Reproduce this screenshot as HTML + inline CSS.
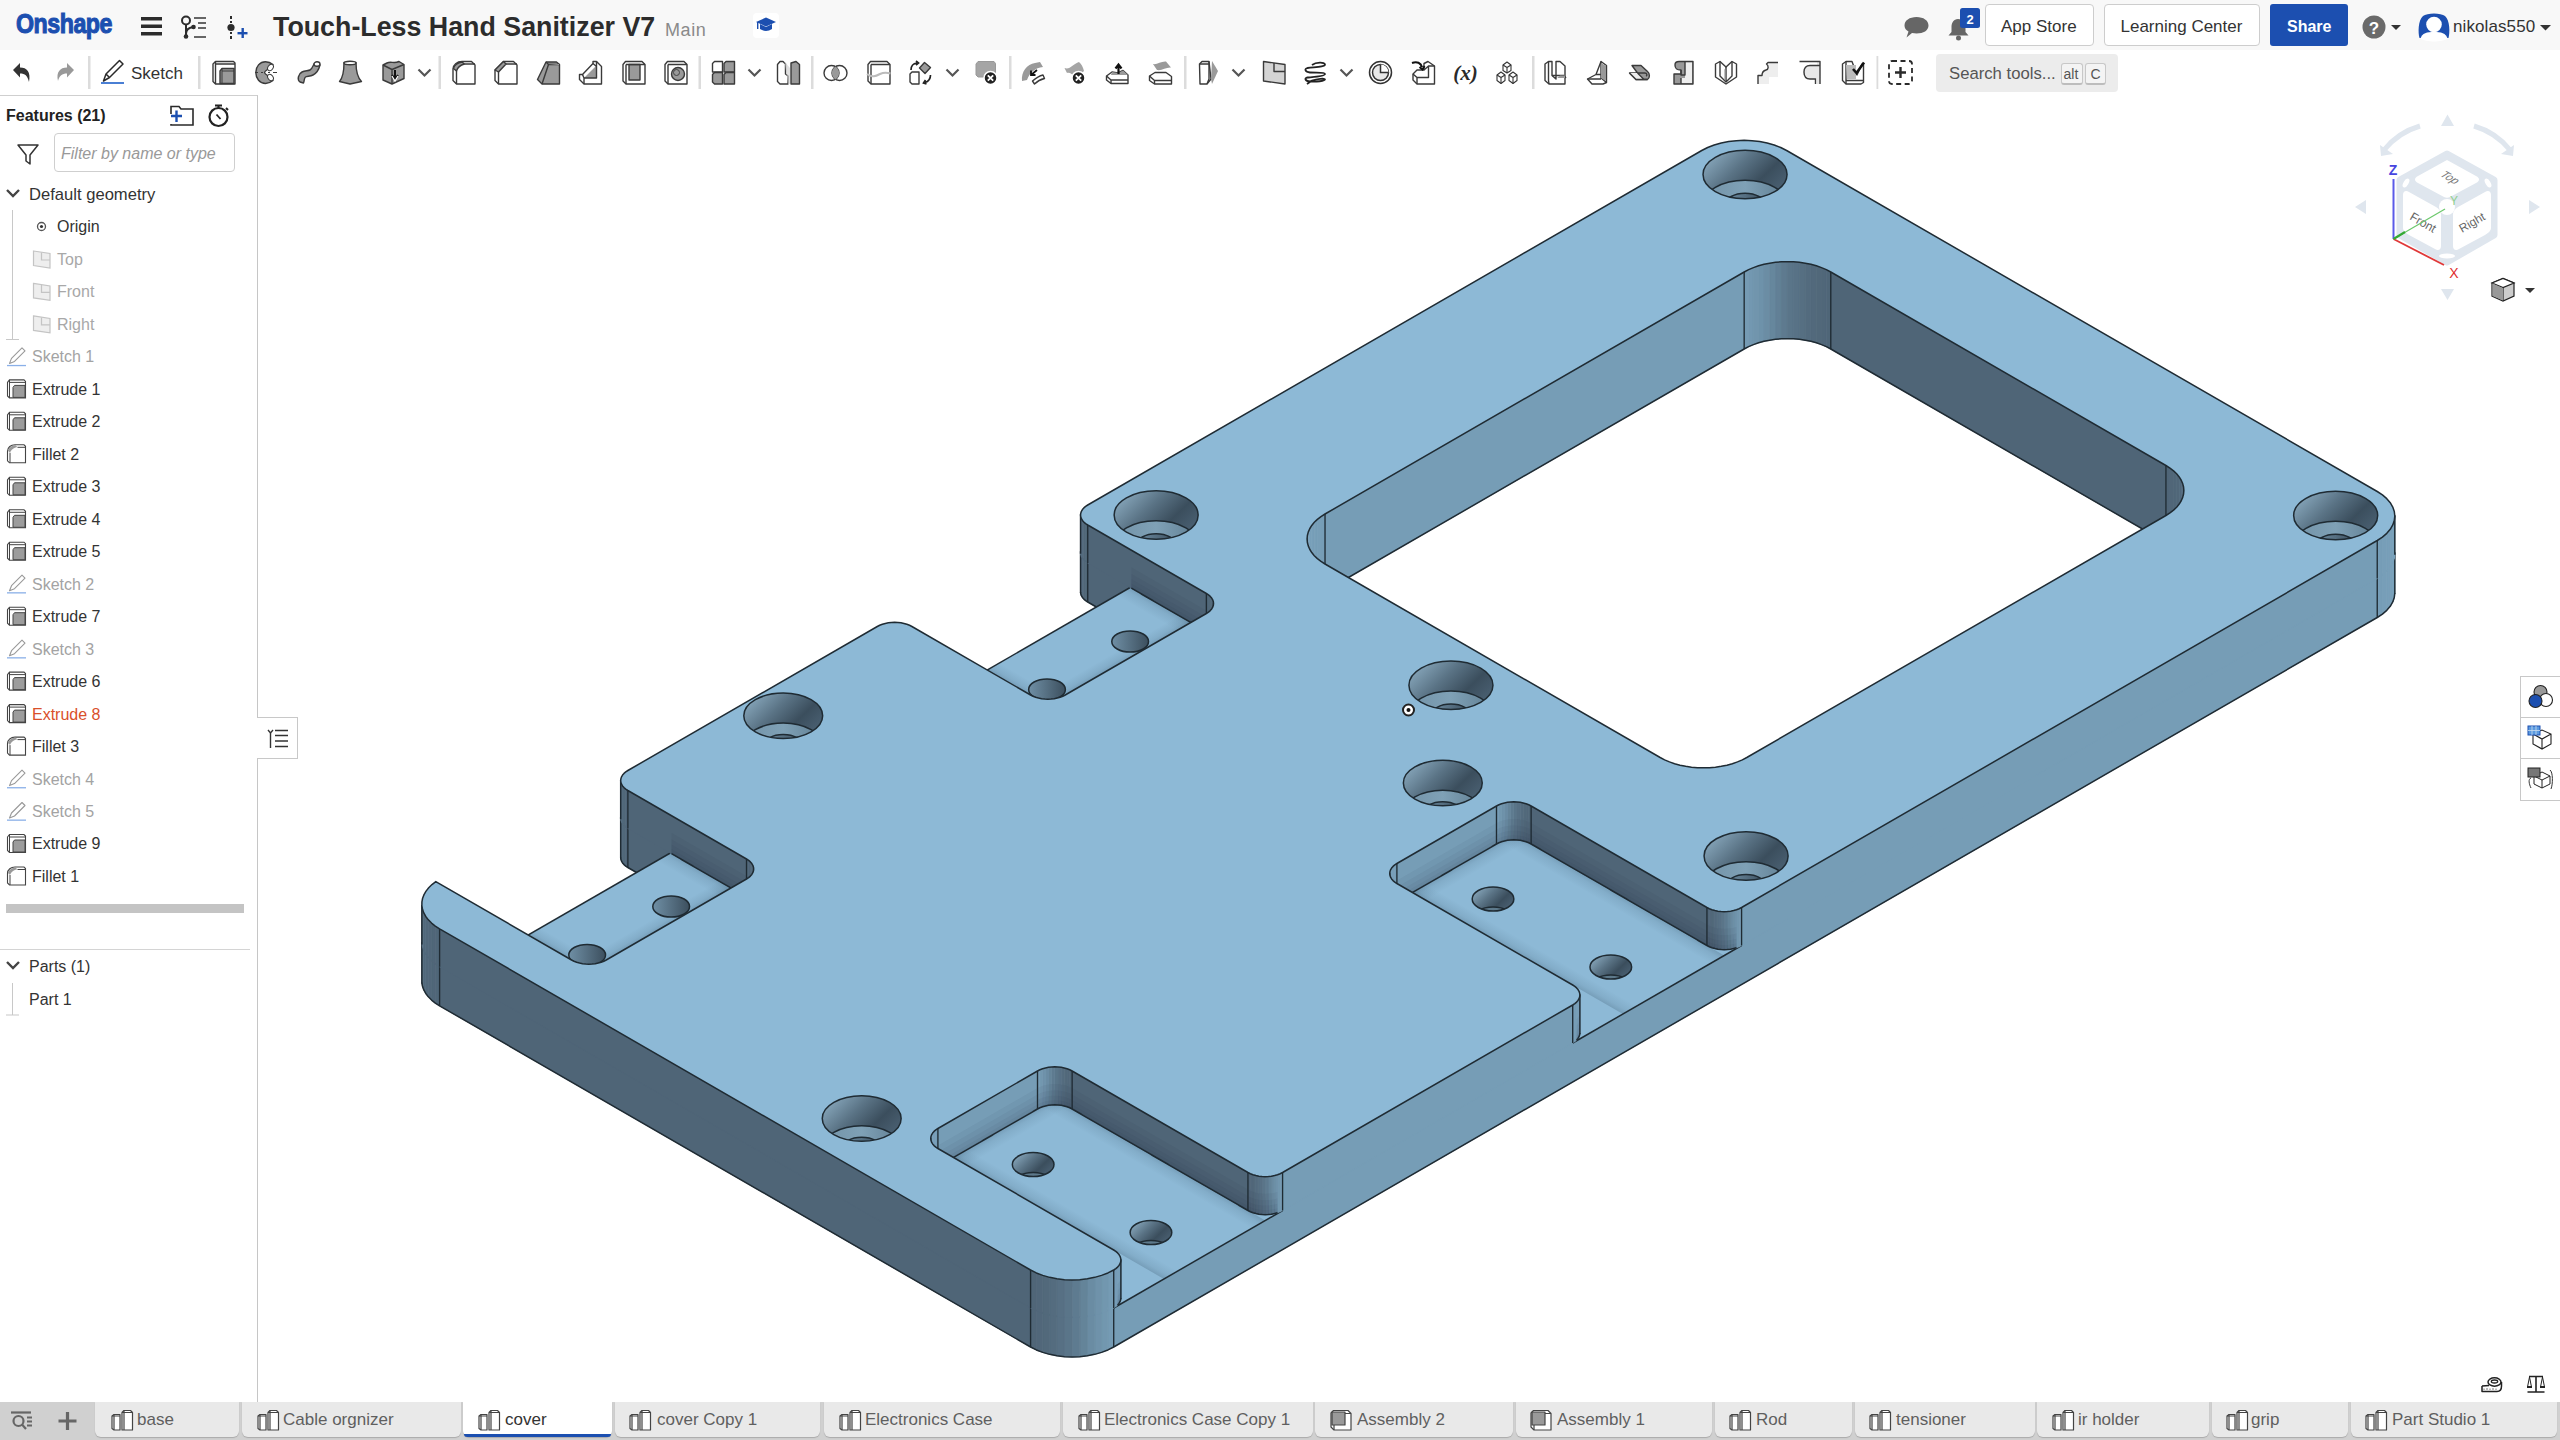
<!DOCTYPE html>
<html><head><meta charset="utf-8"><title>Onshape</title>
<style>
*{box-sizing:border-box;margin:0;padding:0}
html,body{width:2560px;height:1440px;overflow:hidden;background:#fff}
body{position:relative;font-family:"Liberation Sans", sans-serif;color:#333}
.abs{position:absolute}
.t{position:absolute;white-space:nowrap;line-height:normal}
.btn{position:absolute;border:1px solid #cdcdcd;border-radius:4px;background:#fff}
svg{position:absolute;left:0;top:0}
</style></head><body>
<div class="abs" style="left:0;top:0;width:2560px;height:50px;background:#f8f8f8"></div>
<div class="t" style="left:16.0px;top:7.7px;font-size:28px;font-weight:700;color:#1c4fb0;font-style:normal;letter-spacing:0px;transform:scaleX(0.83);transform-origin:0 0;letter-spacing:-0.6px;-webkit-text-stroke:1.1px #1c4fb0">Onshape</div>
<div class="t" style="left:273.0px;top:11.7px;font-size:26.8px;font-weight:700;color:#2c2c2c;font-style:normal;letter-spacing:0px;">Touch-Less Hand Sanitizer V7</div>
<div class="t" style="left:665.0px;top:19.7px;font-size:18px;font-weight:400;color:#8a8a8a;font-style:normal;letter-spacing:0.6px;">Main</div>
<div class="btn" style="left:1985px;top:4px;width:109px;height:42px"></div>
<div class="t" style="left:2001.0px;top:17.1px;font-size:17px;font-weight:400;color:#333;font-style:normal;letter-spacing:0px;">App Store</div>
<div class="btn" style="left:2104px;top:4px;width:156px;height:42px"></div>
<div class="t" style="left:2120.5px;top:17.1px;font-size:17px;font-weight:400;color:#333;font-style:normal;letter-spacing:0px;">Learning Center</div>
<div class="abs" style="left:2270px;top:4px;width:78px;height:42px;background:#1c4fb0;border-radius:3px"></div>
<div class="t" style="left:2287.0px;top:18.0px;font-size:16px;font-weight:700;color:#fff;font-style:normal;letter-spacing:0px;">Share</div>
<div class="t" style="left:2453.0px;top:17.1px;font-size:17px;font-weight:400;color:#333;font-style:normal;letter-spacing:0.1px;">nikolas550</div>
<div class="abs" style="left:1936px;top:54px;width:182px;height:38px;background:#ececec;border-radius:4px"></div>
<div class="t" style="left:1949.0px;top:63.9px;font-size:16.7px;font-weight:400;color:#555;font-style:normal;letter-spacing:0px;">Search tools...</div>
<div class="abs" style="left:2061px;top:63px;width:22px;height:22px;border:1px solid #c8c8c8;border-bottom:2px solid #bdbdbd;border-radius:3px;background:#f4f4f4"></div>
<div class="t" style="left:2063.5px;top:66.3px;font-size:14px;font-weight:400;color:#555;font-style:normal;letter-spacing:0px;">alt</div>
<div class="abs" style="left:2085px;top:63px;width:21px;height:22px;border:1px solid #c8c8c8;border-bottom:2px solid #bdbdbd;border-radius:3px;background:#f4f4f4"></div>
<div class="t" style="left:2090.5px;top:66.3px;font-size:14px;font-weight:400;color:#555;font-style:normal;letter-spacing:0px;">C</div>
<div class="t" style="left:131.0px;top:63.6px;font-size:17px;font-weight:400;color:#333;font-style:normal;letter-spacing:0px;">Sketch</div>
<div class="abs" style="left:0;top:95px;width:258px;height:1307px;border-top:1.5px solid #cfcfcf;border-right:1.5px solid #c6c6c6;background:#fff"></div>
<div class="t" style="left:6.0px;top:106.5px;font-size:16px;font-weight:700;color:#222;font-style:normal;letter-spacing:0px;">Features (21)</div>
<div class="abs" style="left:54px;top:133px;width:181px;height:39px;border:1px solid #cfcfcf;border-radius:4px;background:#fff"></div>
<div class="t" style="left:61.0px;top:144.5px;font-size:16px;font-weight:400;color:#999;font-style:italic;letter-spacing:0px;">Filter by name or type</div>
<div class="t" style="left:29.0px;top:185.4px;font-size:16.6px;font-weight:400;color:#333;font-style:normal;letter-spacing:0px;">Default geometry</div>
<div class="t" style="left:57.0px;top:218.4px;font-size:16px;font-weight:400;color:#333;font-style:normal;letter-spacing:0px;">Origin</div>
<div class="t" style="left:57.0px;top:250.9px;font-size:16px;font-weight:400;color:#a8a8a8;font-style:normal;letter-spacing:0px;">Top</div>
<div class="t" style="left:57.0px;top:283.3px;font-size:16px;font-weight:400;color:#a8a8a8;font-style:normal;letter-spacing:0px;">Front</div>
<div class="t" style="left:57.0px;top:315.8px;font-size:16px;font-weight:400;color:#a8a8a8;font-style:normal;letter-spacing:0px;">Right</div>
<div class="t" style="left:32.0px;top:348.3px;font-size:16px;font-weight:400;color:#a3a3a3;font-style:normal;letter-spacing:0px;">Sketch 1</div>
<div class="t" style="left:32.0px;top:380.8px;font-size:16px;font-weight:400;color:#333;font-style:normal;letter-spacing:0px;">Extrude 1</div>
<div class="t" style="left:32.0px;top:413.3px;font-size:16px;font-weight:400;color:#333;font-style:normal;letter-spacing:0px;">Extrude 2</div>
<div class="t" style="left:32.0px;top:445.7px;font-size:16px;font-weight:400;color:#333;font-style:normal;letter-spacing:0px;">Fillet 2</div>
<div class="t" style="left:32.0px;top:478.2px;font-size:16px;font-weight:400;color:#333;font-style:normal;letter-spacing:0px;">Extrude 3</div>
<div class="t" style="left:32.0px;top:510.7px;font-size:16px;font-weight:400;color:#333;font-style:normal;letter-spacing:0px;">Extrude 4</div>
<div class="t" style="left:32.0px;top:543.2px;font-size:16px;font-weight:400;color:#333;font-style:normal;letter-spacing:0px;">Extrude 5</div>
<div class="t" style="left:32.0px;top:575.6px;font-size:16px;font-weight:400;color:#a3a3a3;font-style:normal;letter-spacing:0px;">Sketch 2</div>
<div class="t" style="left:32.0px;top:608.1px;font-size:16px;font-weight:400;color:#333;font-style:normal;letter-spacing:0px;">Extrude 7</div>
<div class="t" style="left:32.0px;top:640.6px;font-size:16px;font-weight:400;color:#a3a3a3;font-style:normal;letter-spacing:0px;">Sketch 3</div>
<div class="t" style="left:32.0px;top:673.1px;font-size:16px;font-weight:400;color:#333;font-style:normal;letter-spacing:0px;">Extrude 6</div>
<div class="t" style="left:32.0px;top:705.5px;font-size:16px;font-weight:400;color:#d9502a;font-style:normal;letter-spacing:0px;">Extrude 8</div>
<div class="t" style="left:32.0px;top:738.0px;font-size:16px;font-weight:400;color:#333;font-style:normal;letter-spacing:0px;">Fillet 3</div>
<div class="t" style="left:32.0px;top:770.5px;font-size:16px;font-weight:400;color:#a3a3a3;font-style:normal;letter-spacing:0px;">Sketch 4</div>
<div class="t" style="left:32.0px;top:803.0px;font-size:16px;font-weight:400;color:#a3a3a3;font-style:normal;letter-spacing:0px;">Sketch 5</div>
<div class="t" style="left:32.0px;top:835.4px;font-size:16px;font-weight:400;color:#333;font-style:normal;letter-spacing:0px;">Extrude 9</div>
<div class="t" style="left:32.0px;top:867.9px;font-size:16px;font-weight:400;color:#333;font-style:normal;letter-spacing:0px;">Fillet 1</div>
<div class="abs" style="left:6px;top:904px;width:238px;height:9px;background:#c4c4c4"></div>
<div class="abs" style="left:0;top:949px;width:250px;height:1px;background:#d4d4d4"></div>
<div class="t" style="left:29.0px;top:958.0px;font-size:16px;font-weight:400;color:#333;font-style:normal;letter-spacing:0px;">Parts (1)</div>
<div class="t" style="left:29.0px;top:990.5px;font-size:16px;font-weight:400;color:#333;font-style:normal;letter-spacing:0px;">Part 1</div>
<div class="abs" style="left:257px;top:717px;width:41px;height:42px;border:1px solid #c8c8c8;border-left:none;background:#fff"></div>
<div class="abs" style="left:0;top:1402px;width:2560px;height:38px;background:#d0d0d0"></div>
<div class="abs" style="left:95px;top:1402px;width:144px;height:35px;background:#e9e9e9;border-radius:0 0 6px 6px;box-shadow:0 1px 1px rgba(0,0,0,0.18)"></div>
<div class="t" style="left:137.0px;top:1409.9px;font-size:17px;font-weight:400;color:#5f5f5f;font-style:normal;letter-spacing:0px;">base</div>
<div class="abs" style="left:242px;top:1402px;width:219px;height:35px;background:#e9e9e9;border-radius:0 0 6px 6px;box-shadow:0 1px 1px rgba(0,0,0,0.18)"></div>
<div class="t" style="left:283.0px;top:1409.9px;font-size:17px;font-weight:400;color:#5f5f5f;font-style:normal;letter-spacing:0px;">Cable orgnizer</div>
<div class="abs" style="left:463px;top:1402px;width:149px;height:35px;background:#fff;border-radius:0 0 6px 6px;box-shadow:0 1px 1px rgba(0,0,0,0.18)"></div>
<div class="abs" style="left:464px;top:1434px;width:147px;height:3px;background:#1c4fb0;border-radius:0 0 3px 3px"></div>
<div class="t" style="left:505.0px;top:1409.9px;font-size:17px;font-weight:400;color:#333;font-style:normal;letter-spacing:0px;">cover</div>
<div class="abs" style="left:615px;top:1402px;width:205px;height:35px;background:#e9e9e9;border-radius:0 0 6px 6px;box-shadow:0 1px 1px rgba(0,0,0,0.18)"></div>
<div class="t" style="left:657.0px;top:1409.9px;font-size:17px;font-weight:400;color:#5f5f5f;font-style:normal;letter-spacing:0px;">cover Copy 1</div>
<div class="abs" style="left:824px;top:1402px;width:236px;height:35px;background:#e9e9e9;border-radius:0 0 6px 6px;box-shadow:0 1px 1px rgba(0,0,0,0.18)"></div>
<div class="t" style="left:865.0px;top:1409.9px;font-size:17px;font-weight:400;color:#5f5f5f;font-style:normal;letter-spacing:0px;">Electronics Case</div>
<div class="abs" style="left:1063px;top:1402px;width:250px;height:35px;background:#e9e9e9;border-radius:0 0 6px 6px;box-shadow:0 1px 1px rgba(0,0,0,0.18)"></div>
<div class="t" style="left:1104.0px;top:1409.9px;font-size:17px;font-weight:400;color:#5f5f5f;font-style:normal;letter-spacing:0px;">Electronics Case Copy 1</div>
<div class="abs" style="left:1315px;top:1402px;width:198px;height:35px;background:#e9e9e9;border-radius:0 0 6px 6px;box-shadow:0 1px 1px rgba(0,0,0,0.18)"></div>
<div class="t" style="left:1357.0px;top:1409.9px;font-size:17px;font-weight:400;color:#5f5f5f;font-style:normal;letter-spacing:0px;">Assembly 2</div>
<div class="abs" style="left:1516px;top:1402px;width:196px;height:35px;background:#e9e9e9;border-radius:0 0 6px 6px;box-shadow:0 1px 1px rgba(0,0,0,0.18)"></div>
<div class="t" style="left:1557.0px;top:1409.9px;font-size:17px;font-weight:400;color:#5f5f5f;font-style:normal;letter-spacing:0px;">Assembly 1</div>
<div class="abs" style="left:1715px;top:1402px;width:137px;height:35px;background:#e9e9e9;border-radius:0 0 6px 6px;box-shadow:0 1px 1px rgba(0,0,0,0.18)"></div>
<div class="t" style="left:1756.0px;top:1409.9px;font-size:17px;font-weight:400;color:#5f5f5f;font-style:normal;letter-spacing:0px;">Rod</div>
<div class="abs" style="left:1855px;top:1402px;width:180px;height:35px;background:#e9e9e9;border-radius:0 0 6px 6px;box-shadow:0 1px 1px rgba(0,0,0,0.18)"></div>
<div class="t" style="left:1896.0px;top:1409.9px;font-size:17px;font-weight:400;color:#5f5f5f;font-style:normal;letter-spacing:0px;">tensioner</div>
<div class="abs" style="left:2037px;top:1402px;width:172px;height:35px;background:#e9e9e9;border-radius:0 0 6px 6px;box-shadow:0 1px 1px rgba(0,0,0,0.18)"></div>
<div class="t" style="left:2078.0px;top:1409.9px;font-size:17px;font-weight:400;color:#5f5f5f;font-style:normal;letter-spacing:0px;">ir holder</div>
<div class="abs" style="left:2212px;top:1402px;width:136px;height:35px;background:#e9e9e9;border-radius:0 0 6px 6px;box-shadow:0 1px 1px rgba(0,0,0,0.18)"></div>
<div class="t" style="left:2251.0px;top:1409.9px;font-size:17px;font-weight:400;color:#5f5f5f;font-style:normal;letter-spacing:0px;">grip</div>
<div class="abs" style="left:2351px;top:1402px;width:206px;height:35px;background:#e9e9e9;border-radius:0 0 6px 6px;box-shadow:0 1px 1px rgba(0,0,0,0.18)"></div>
<div class="t" style="left:2392.0px;top:1409.9px;font-size:17px;font-weight:400;color:#5f5f5f;font-style:normal;letter-spacing:0px;">Part Studio 1</div>
<svg width="2560" height="1440" viewBox="0 0 2560 1440" style="pointer-events:none"><defs><linearGradient id="hg" x1="0" y1="0.1" x2="1" y2="0.7"><stop offset="0" stop-color="#8fb0c5"/><stop offset="0.42" stop-color="#5a7385"/><stop offset="0.72" stop-color="#3b4e5d"/><stop offset="1" stop-color="#4a6072"/></linearGradient><linearGradient id="hf" x1="0" y1="0" x2="1" y2="0"><stop offset="0" stop-color="#7393a8"/><stop offset="0.5" stop-color="#7fa1b6"/><stop offset="1" stop-color="#617f93"/></linearGradient><linearGradient id="hs" x1="0" y1="0" x2="1" y2="0"><stop offset="0" stop-color="#6f8fa5"/><stop offset="1" stop-color="#3c4f5e"/></linearGradient><linearGradient id="ao1" gradientUnits="userSpaceOnUse" x1="920.59" y1="1176.50" x2="927.51" y2="1188.50"><stop offset="0" stop-color="#1b3346" stop-opacity="0.20"/><stop offset="0.35" stop-color="#1b3346" stop-opacity="0.09"/><stop offset="1" stop-color="#1b3346" stop-opacity="0"/></linearGradient><linearGradient id="ao2" gradientUnits="userSpaceOnUse" x1="1054.82" y1="1099.00" x2="1047.89" y2="1111.00"><stop offset="0" stop-color="#1b3346" stop-opacity="0.20"/><stop offset="0.35" stop-color="#1b3346" stop-opacity="0.09"/><stop offset="1" stop-color="#1b3346" stop-opacity="0"/></linearGradient><linearGradient id="ao3" gradientUnits="userSpaceOnUse" x1="920.59" y1="1138.50" x2="927.51" y2="1126.50"><stop offset="0" stop-color="#1b3346" stop-opacity="0.20"/><stop offset="0.35" stop-color="#1b3346" stop-opacity="0.09"/><stop offset="1" stop-color="#1b3346" stop-opacity="0"/></linearGradient><linearGradient id="ao4" gradientUnits="userSpaceOnUse" x1="1379.58" y1="911.50" x2="1386.51" y2="923.50"><stop offset="0" stop-color="#1b3346" stop-opacity="0.20"/><stop offset="0.35" stop-color="#1b3346" stop-opacity="0.09"/><stop offset="1" stop-color="#1b3346" stop-opacity="0"/></linearGradient><linearGradient id="ao5" gradientUnits="userSpaceOnUse" x1="1513.81" y1="834.00" x2="1506.88" y2="846.00"><stop offset="0" stop-color="#1b3346" stop-opacity="0.20"/><stop offset="0.35" stop-color="#1b3346" stop-opacity="0.09"/><stop offset="1" stop-color="#1b3346" stop-opacity="0"/></linearGradient><linearGradient id="ao6" gradientUnits="userSpaceOnUse" x1="1379.58" y1="873.50" x2="1386.51" y2="861.50"><stop offset="0" stop-color="#1b3346" stop-opacity="0.20"/><stop offset="0.35" stop-color="#1b3346" stop-opacity="0.09"/><stop offset="1" stop-color="#1b3346" stop-opacity="0"/></linearGradient><linearGradient id="ao7" gradientUnits="userSpaceOnUse" x1="670.30" y1="853.00" x2="663.38" y2="865.00"><stop offset="0" stop-color="#1b3346" stop-opacity="0.20"/><stop offset="0.35" stop-color="#1b3346" stop-opacity="0.09"/><stop offset="1" stop-color="#1b3346" stop-opacity="0"/></linearGradient><linearGradient id="ao8" gradientUnits="userSpaceOnUse" x1="555.99" y1="989.00" x2="549.93" y2="978.50"><stop offset="0" stop-color="#1b3346" stop-opacity="0.20"/><stop offset="0.35" stop-color="#1b3346" stop-opacity="0.09"/><stop offset="1" stop-color="#1b3346" stop-opacity="0"/></linearGradient><linearGradient id="ao9" gradientUnits="userSpaceOnUse" x1="528.28" y1="935.00" x2="534.34" y2="924.50"><stop offset="0" stop-color="#1b3346" stop-opacity="0.20"/><stop offset="0.35" stop-color="#1b3346" stop-opacity="0.09"/><stop offset="1" stop-color="#1b3346" stop-opacity="0"/></linearGradient><linearGradient id="ao10" gradientUnits="userSpaceOnUse" x1="1130.16" y1="587.50" x2="1123.23" y2="599.50"><stop offset="0" stop-color="#1b3346" stop-opacity="0.20"/><stop offset="0.35" stop-color="#1b3346" stop-opacity="0.09"/><stop offset="1" stop-color="#1b3346" stop-opacity="0"/></linearGradient><linearGradient id="ao11" gradientUnits="userSpaceOnUse" x1="1014.98" y1="724.00" x2="1008.92" y2="713.50"><stop offset="0" stop-color="#1b3346" stop-opacity="0.20"/><stop offset="0.35" stop-color="#1b3346" stop-opacity="0.09"/><stop offset="1" stop-color="#1b3346" stop-opacity="0"/></linearGradient><linearGradient id="ao12" gradientUnits="userSpaceOnUse" x1="987.27" y1="670.00" x2="993.33" y2="659.50"><stop offset="0" stop-color="#1b3346" stop-opacity="0.20"/><stop offset="0.35" stop-color="#1b3346" stop-opacity="0.09"/><stop offset="1" stop-color="#1b3346" stop-opacity="0"/></linearGradient><clipPath id="c1"><ellipse cx="1745.04" cy="174.50" rx="42.01" ry="24.25"/></clipPath><clipPath id="d1"><ellipse cx="1745.04" cy="204.50" rx="42.01" ry="24.25"/></clipPath><clipPath id="c2"><ellipse cx="2335.67" cy="515.50" rx="42.01" ry="24.25"/></clipPath><clipPath id="d2"><ellipse cx="2335.67" cy="545.50" rx="42.01" ry="24.25"/></clipPath><clipPath id="c3"><ellipse cx="1156.14" cy="515.00" rx="42.01" ry="24.25"/></clipPath><clipPath id="d3"><ellipse cx="1156.14" cy="545.00" rx="42.01" ry="24.25"/></clipPath><clipPath id="c4"><ellipse cx="1450.94" cy="685.30" rx="42.01" ry="24.25"/></clipPath><clipPath id="d4"><ellipse cx="1450.94" cy="715.30" rx="42.01" ry="24.25"/></clipPath><clipPath id="c5"><ellipse cx="1746.08" cy="855.90" rx="42.01" ry="24.25"/></clipPath><clipPath id="d5"><ellipse cx="1746.08" cy="885.90" rx="42.01" ry="24.25"/></clipPath><clipPath id="c6"><ellipse cx="1442.80" cy="783.00" rx="39.44" ry="22.77"/></clipPath><clipPath id="d6"><ellipse cx="1442.80" cy="813.00" rx="39.44" ry="22.77"/></clipPath><clipPath id="c7"><ellipse cx="783.23" cy="715.80" rx="39.44" ry="22.77"/></clipPath><clipPath id="d7"><ellipse cx="783.23" cy="745.80" rx="39.44" ry="22.77"/></clipPath><clipPath id="c8"><ellipse cx="861.70" cy="1118.50" rx="39.44" ry="22.77"/></clipPath><clipPath id="d8"><ellipse cx="861.70" cy="1148.50" rx="39.44" ry="22.77"/></clipPath><clipPath id="c9"><ellipse cx="1493.03" cy="899.00" rx="20.82" ry="12.02"/></clipPath><clipPath id="c10"><ellipse cx="1610.81" cy="967.00" rx="20.82" ry="12.02"/></clipPath><clipPath id="c11"><ellipse cx="1033.17" cy="1164.50" rx="20.82" ry="12.02"/></clipPath><clipPath id="c12"><ellipse cx="1150.95" cy="1232.50" rx="20.82" ry="12.02"/></clipPath></defs><polygon points="2394.82,553.00 2394.30,557.52 2394.30,597.52 2394.82,593.00" fill="#7aa2bc" stroke="#7aa2bc" stroke-width="0.8"/>
<polygon points="2394.30,557.52 2392.77,561.97 2392.77,601.97 2394.30,597.52" fill="#79a1bb" stroke="#79a1bb" stroke-width="0.8"/>
<polygon points="2392.77,561.97 2390.25,566.26 2390.25,606.26 2392.77,601.97" fill="#78a0ba" stroke="#78a0ba" stroke-width="0.8"/>
<polygon points="2390.25,566.26 2386.78,570.32 2386.78,610.32 2390.25,606.26" fill="#789fb9" stroke="#789fb9" stroke-width="0.8"/>
<polygon points="2386.78,570.32 2382.42,574.09 2382.42,614.09 2386.78,610.32" fill="#779eb8" stroke="#779eb8" stroke-width="0.8"/>
<polygon points="2382.42,574.09 2377.24,577.50 2377.24,617.50 2382.42,614.09" fill="#769db7" stroke="#769db7" stroke-width="0.8"/>
<polygon points="2377.24,577.50 1113.71,1307.00 1113.71,1347.00 2377.24,617.50" fill="#769db6" stroke="#769db6" stroke-width="0.8"/>
<polygon points="1113.71,1307.00 1107.93,1309.93 1107.93,1349.93 1113.71,1347.00" fill="#759bb4" stroke="#759bb4" stroke-width="0.8"/>
<polygon points="1107.93,1309.93 1101.53,1312.39 1101.53,1352.39 1107.93,1349.93" fill="#7297af" stroke="#7297af" stroke-width="0.8"/>
<polygon points="1101.53,1312.39 1094.64,1314.36 1094.64,1354.36 1101.53,1352.39" fill="#6f92aa" stroke="#6f92aa" stroke-width="0.8"/>
<polygon points="1094.64,1314.36 1087.35,1315.78 1087.35,1355.78 1094.64,1354.36" fill="#6a8ca3" stroke="#6a8ca3" stroke-width="0.8"/>
<polygon points="1087.35,1315.78 1079.81,1316.65 1079.81,1356.65 1087.35,1355.78" fill="#648499" stroke="#648499" stroke-width="0.8"/>
<polygon points="1079.81,1316.65 1072.14,1316.94 1072.14,1356.94 1079.81,1356.65" fill="#5e7b90" stroke="#5e7b90" stroke-width="0.8"/>
<polygon points="1072.14,1316.94 1064.47,1316.65 1064.47,1356.65 1072.14,1356.94" fill="#5a7589" stroke="#5a7589" stroke-width="0.8"/>
<polygon points="1064.47,1316.65 1056.92,1315.78 1056.92,1355.78 1064.47,1356.65" fill="#577084" stroke="#577084" stroke-width="0.8"/>
<polygon points="1056.92,1315.78 1049.64,1314.36 1049.64,1354.36 1056.92,1355.78" fill="#546c7f" stroke="#546c7f" stroke-width="0.8"/>
<polygon points="1049.64,1314.36 1042.75,1312.39 1042.75,1352.39 1049.64,1354.36" fill="#52697b" stroke="#52697b" stroke-width="0.8"/>
<polygon points="1042.75,1312.39 1036.35,1309.93 1036.35,1349.93 1042.75,1352.39" fill="#51677a" stroke="#51677a" stroke-width="0.8"/>
<polygon points="1036.35,1309.93 1030.57,1307.00 1030.57,1347.00 1036.35,1349.93" fill="#506678" stroke="#506678" stroke-width="0.8"/>
<polygon points="1030.57,1307.00 439.59,965.80 439.59,1005.80 1030.57,1347.00" fill="#4f6577" stroke="#4f6577" stroke-width="0.8"/>
<polygon points="439.59,965.80 435.31,963.05 435.31,1003.05 439.59,1005.80" fill="#4f6678" stroke="#4f6678" stroke-width="0.8"/>
<polygon points="435.31,963.05 431.55,960.05 431.55,1000.05 435.31,1003.05" fill="#506679" stroke="#506679" stroke-width="0.8"/>
<polygon points="431.55,960.05 428.35,956.84 428.35,996.84 431.55,1000.05" fill="#51677a" stroke="#51677a" stroke-width="0.8"/>
<polygon points="428.35,956.84 425.76,953.46 425.76,993.46 428.35,996.84" fill="#51687b" stroke="#51687b" stroke-width="0.8"/>
<polygon points="425.76,953.46 423.81,949.93 423.81,989.93 425.76,993.46" fill="#52697c" stroke="#52697c" stroke-width="0.8"/>
<polygon points="423.81,949.93 422.50,946.31 422.50,986.31 423.81,989.93" fill="#536b7d" stroke="#536b7d" stroke-width="0.8"/>
<polygon points="422.50,946.31 421.87,942.63 421.87,982.63 422.50,986.31" fill="#546c7f" stroke="#546c7f" stroke-width="0.8"/>
<polygon points="670.30,852.00 627.87,827.50 627.87,867.50 670.30,892.00" fill="#4f6577" stroke="#4f6577" stroke-width="0.8"/>
<polygon points="627.87,827.50 625.76,826.11 625.76,866.11 627.87,867.50" fill="#4f6678" stroke="#4f6678" stroke-width="0.8"/>
<polygon points="625.76,826.11 623.98,824.57 623.98,864.57 625.76,866.11" fill="#506779" stroke="#506779" stroke-width="0.8"/>
<polygon points="623.98,824.57 622.56,822.91 622.56,862.91 623.98,864.57" fill="#51687a" stroke="#51687a" stroke-width="0.8"/>
<polygon points="622.56,822.91 621.53,821.16 621.53,861.16 622.56,862.91" fill="#52697c" stroke="#52697c" stroke-width="0.8"/>
<polygon points="621.53,821.16 620.90,819.35 620.90,859.35 621.53,861.16" fill="#536b7d" stroke="#536b7d" stroke-width="0.8"/>
<polygon points="620.90,819.35 620.69,817.50 620.69,857.50 620.90,859.35" fill="#546c7f" stroke="#546c7f" stroke-width="0.8"/>
<polygon points="1130.16,586.50 1087.73,562.00 1087.73,602.00 1130.16,626.50" fill="#4f6577" stroke="#4f6577" stroke-width="0.8"/>
<polygon points="1087.73,562.00 1085.62,560.61 1085.62,600.61 1087.73,602.00" fill="#4f6678" stroke="#4f6678" stroke-width="0.8"/>
<polygon points="1085.62,560.61 1083.84,559.07 1083.84,599.07 1085.62,600.61" fill="#506779" stroke="#506779" stroke-width="0.8"/>
<polygon points="1083.84,559.07 1082.42,557.41 1082.42,597.41 1083.84,599.07" fill="#51687a" stroke="#51687a" stroke-width="0.8"/>
<polygon points="1082.42,557.41 1081.39,555.66 1081.39,595.66 1082.42,597.41" fill="#52697c" stroke="#52697c" stroke-width="0.8"/>
<polygon points="1081.39,555.66 1080.76,553.85 1080.76,593.85 1081.39,595.66" fill="#536b7d" stroke="#536b7d" stroke-width="0.8"/>
<polygon points="1080.76,553.85 1080.55,552.00 1080.55,592.00 1080.76,593.85" fill="#546c7f" stroke="#546c7f" stroke-width="0.8"/>
<polyline points="2394.82,593.00 2394.30,597.52 2392.77,601.97 2390.25,606.26 2386.78,610.32 2382.42,614.09 2377.24,617.50 1113.71,1347.00 1107.93,1349.93 1101.53,1352.39 1094.64,1354.36 1087.35,1355.78 1079.81,1356.65 1072.14,1356.94 1064.47,1356.65 1056.92,1355.78 1049.64,1354.36 1042.75,1352.39 1036.35,1349.93 1030.57,1347.00 439.59,1005.80 435.31,1003.05 431.55,1000.05 428.35,996.84 425.76,993.46 423.81,989.93 422.50,986.31 421.87,982.63" fill="none" stroke="#1f2b33" stroke-width="1.50" stroke-linejoin="round"/>
<line x1="2394.82" y1="553.00" x2="2394.82" y2="593.00" stroke="#1f2b33" stroke-width="1.50" stroke-linecap="square"/>
<line x1="421.87" y1="942.63" x2="421.87" y2="982.63" stroke="#1f2b33" stroke-width="1.50" stroke-linecap="square"/>
<line x1="2377.24" y1="577.50" x2="2377.24" y2="617.50" stroke="#1f2b33" stroke-width="1.35"/>
<line x1="1113.71" y1="1307.00" x2="1113.71" y2="1347.00" stroke="#1f2b33" stroke-width="1.35"/>
<line x1="1030.57" y1="1307.00" x2="1030.57" y2="1347.00" stroke="#1f2b33" stroke-width="1.35"/>
<line x1="439.59" y1="965.80" x2="439.59" y2="1005.80" stroke="#1f2b33" stroke-width="1.35"/>
<polyline points="670.30,892.00 627.87,867.50 625.76,866.11 623.98,864.57 622.56,862.91 621.53,861.16 620.90,859.35 620.69,857.50" fill="none" stroke="#1f2b33" stroke-width="1.50" stroke-linejoin="round"/>
<line x1="670.30" y1="852.00" x2="670.30" y2="892.00" stroke="#1f2b33" stroke-width="1.50" stroke-linecap="square"/>
<line x1="620.69" y1="817.50" x2="620.69" y2="857.50" stroke="#1f2b33" stroke-width="1.50" stroke-linecap="square"/>
<line x1="670.30" y1="852.00" x2="670.30" y2="892.00" stroke="#1f2b33" stroke-width="1.35"/>
<line x1="627.87" y1="827.50" x2="627.87" y2="867.50" stroke="#1f2b33" stroke-width="1.35"/>
<polyline points="1130.16,626.50 1087.73,602.00 1085.62,600.61 1083.84,599.07 1082.42,597.41 1081.39,595.66 1080.76,593.85 1080.55,592.00" fill="none" stroke="#1f2b33" stroke-width="1.50" stroke-linejoin="round"/>
<line x1="1130.16" y1="586.50" x2="1130.16" y2="626.50" stroke="#1f2b33" stroke-width="1.50" stroke-linecap="square"/>
<line x1="1080.55" y1="552.00" x2="1080.55" y2="592.00" stroke="#1f2b33" stroke-width="1.50" stroke-linecap="square"/>
<line x1="1130.16" y1="586.50" x2="1130.16" y2="626.50" stroke="#1f2b33" stroke-width="1.35"/>
<line x1="1087.73" y1="562.00" x2="1087.73" y2="602.00" stroke="#1f2b33" stroke-width="1.35"/>
<path d="M486.71,959.00 L486.71,959.00 L678.96,848.00 L678.96,848.00 L781.15,907.00 L781.15,907.00 L588.90,1018.00 L588.90,1018.00 Z" fill="#8db9d6" stroke="none"/>
<path d="M945.70,694.00 L945.70,694.00 L1138.82,582.50 L1138.82,582.50 L1241.01,641.50 L1241.01,641.50 L1047.89,753.00 L1047.89,753.00 Z" fill="#8db9d6" stroke="none"/>
<path d="M892.01,1183.00 L892.01,1183.00 L1066.08,1082.50 L1066.08,1082.50 L1285.18,1209.00 L1285.18,1209.00 L1111.11,1309.50 L1111.11,1309.50 Z" fill="#8db9d6" stroke="none"/>
<path d="M1351.00,918.00 L1351.00,918.00 L1525.07,817.50 L1525.07,817.50 L1744.18,944.00 L1744.18,944.00 L1570.10,1044.50 L1570.10,1044.50 Z" fill="#8db9d6" stroke="none"/>
<polygon points="920.59,1176.50 1054.82,1099.00 1068.68,1107.00 934.44,1184.50" fill="url(#ao1)"/>
<polygon points="1054.82,1099.00 1265.26,1220.50 1251.41,1228.50 1040.96,1107.00" fill="url(#ao2)"/>
<polygon points="920.59,1138.50 1163.94,1279.00 1177.79,1271.00 934.44,1130.50" fill="url(#ao3)"/>
<polygon points="1379.58,911.50 1513.81,834.00 1527.67,842.00 1393.43,919.50" fill="url(#ao4)"/>
<polygon points="1513.81,834.00 1724.26,955.50 1710.40,963.50 1499.96,842.00" fill="url(#ao5)"/>
<polygon points="1379.58,873.50 1622.93,1014.00 1636.79,1006.00 1393.43,865.50" fill="url(#ao6)"/>
<polygon points="670.30,853.00 763.83,907.00 749.98,915.00 656.45,861.00" fill="url(#ao7)"/>
<polygon points="555.99,989.00 763.83,869.00 751.71,862.00 543.86,982.00" fill="url(#ao8)"/>
<polygon points="528.28,935.00 621.81,989.00 633.93,982.00 540.40,928.00" fill="url(#ao9)"/>
<polygon points="1130.16,587.50 1223.69,641.50 1209.84,649.50 1116.31,595.50" fill="url(#ao10)"/>
<polygon points="1014.98,724.00 1223.69,603.50 1211.57,596.50 1002.86,717.00" fill="url(#ao11)"/>
<polygon points="987.27,670.00 1080.80,724.00 1092.92,717.00 999.39,663.00" fill="url(#ao12)"/>
<line x1="495.37" y1="954.00" x2="670.30" y2="853.00" stroke="#1f2b33" stroke-width="1.50"/>
<line x1="954.36" y1="689.00" x2="1130.16" y2="587.50" stroke="#1f2b33" stroke-width="1.50"/>
<line x1="1113.71" y1="1308.00" x2="1282.58" y2="1210.50" stroke="#1f2b33" stroke-width="1.50"/>
<line x1="1572.70" y1="1043.00" x2="1741.58" y2="945.50" stroke="#1f2b33" stroke-width="1.50"/>
<ellipse cx="1047.02" cy="689.50" rx="18.37" ry="10.61" fill="url(#hs)" stroke="#1f2b33" stroke-width="1.50"/>
<ellipse cx="1130.16" cy="641.50" rx="18.37" ry="10.61" fill="url(#hs)" stroke="#1f2b33" stroke-width="1.50"/>
<ellipse cx="587.17" cy="955.00" rx="18.37" ry="10.61" fill="url(#hs)" stroke="#1f2b33" stroke-width="1.50"/>
<ellipse cx="671.17" cy="906.50" rx="18.37" ry="10.61" fill="url(#hs)" stroke="#1f2b33" stroke-width="1.50"/>
<polygon points="2394.82,516.00 2394.30,520.52 2394.30,558.52 2394.82,554.00" fill="#7aa2bc" stroke="#7aa2bc" stroke-width="0.8"/>
<polygon points="2394.30,520.52 2392.77,524.97 2392.77,562.97 2394.30,558.52" fill="#79a1bb" stroke="#79a1bb" stroke-width="0.8"/>
<polygon points="2392.77,524.97 2390.25,529.26 2390.25,567.26 2392.77,562.97" fill="#78a0ba" stroke="#78a0ba" stroke-width="0.8"/>
<polygon points="2390.25,529.26 2386.78,533.32 2386.78,571.32 2390.25,567.26" fill="#789fb9" stroke="#789fb9" stroke-width="0.8"/>
<polygon points="2386.78,533.32 2382.42,537.09 2382.42,575.09 2386.78,571.32" fill="#779eb8" stroke="#779eb8" stroke-width="0.8"/>
<polygon points="2382.42,537.09 2377.24,540.50 2377.24,578.50 2382.42,575.09" fill="#769db7" stroke="#769db7" stroke-width="0.8"/>
<polygon points="2377.24,540.50 1741.58,907.50 1741.58,945.50 2377.24,578.50" fill="#769db6" stroke="#769db6" stroke-width="0.8"/>
<polygon points="1741.58,907.50 1739.17,908.72 1739.17,946.72 1741.58,945.50" fill="#759bb4" stroke="#759bb4" stroke-width="0.8"/>
<polygon points="1739.17,908.72 1736.50,909.75 1736.50,947.75 1739.17,946.72" fill="#7297af" stroke="#7297af" stroke-width="0.8"/>
<polygon points="1736.50,909.75 1733.63,910.57 1733.63,948.57 1736.50,947.75" fill="#6f92aa" stroke="#6f92aa" stroke-width="0.8"/>
<polygon points="1733.63,910.57 1730.60,911.16 1730.60,949.16 1733.63,948.57" fill="#6a8ca3" stroke="#6a8ca3" stroke-width="0.8"/>
<polygon points="1730.60,911.16 1727.45,911.52 1727.45,949.52 1730.60,949.16" fill="#648499" stroke="#648499" stroke-width="0.8"/>
<polygon points="1727.45,911.52 1724.26,911.64 1724.26,949.64 1727.45,949.52" fill="#5e7b90" stroke="#5e7b90" stroke-width="0.8"/>
<polygon points="1724.26,911.64 1721.06,911.52 1721.06,949.52 1724.26,949.64" fill="#5a7589" stroke="#5a7589" stroke-width="0.8"/>
<polygon points="1721.06,911.52 1717.92,911.16 1717.92,949.16 1721.06,949.52" fill="#577084" stroke="#577084" stroke-width="0.8"/>
<polygon points="1717.92,911.16 1714.88,910.57 1714.88,948.57 1717.92,949.16" fill="#546c7f" stroke="#546c7f" stroke-width="0.8"/>
<polygon points="1714.88,910.57 1712.01,909.75 1712.01,947.75 1714.88,948.57" fill="#52697b" stroke="#52697b" stroke-width="0.8"/>
<polygon points="1712.01,909.75 1709.35,908.72 1709.35,946.72 1712.01,947.75" fill="#51677a" stroke="#51677a" stroke-width="0.8"/>
<polygon points="1709.35,908.72 1706.94,907.50 1706.94,945.50 1709.35,946.72" fill="#506678" stroke="#506678" stroke-width="0.8"/>
<polygon points="1706.94,907.50 1531.13,806.00 1531.13,844.00 1706.94,945.50" fill="#4f6577" stroke="#4f6577" stroke-width="0.8"/>
<polygon points="1531.13,806.00 1528.72,804.78 1528.72,842.78 1531.13,844.00" fill="#506678" stroke="#506678" stroke-width="0.8"/>
<polygon points="1528.72,804.78 1526.06,803.75 1526.06,841.75 1528.72,842.78" fill="#51677a" stroke="#51677a" stroke-width="0.8"/>
<polygon points="1526.06,803.75 1523.19,802.93 1523.19,840.93 1526.06,841.75" fill="#52697b" stroke="#52697b" stroke-width="0.8"/>
<polygon points="1523.19,802.93 1520.15,802.34 1520.15,840.34 1523.19,840.93" fill="#546c7f" stroke="#546c7f" stroke-width="0.8"/>
<polygon points="1520.15,802.34 1517.01,801.98 1517.01,839.98 1520.15,840.34" fill="#577084" stroke="#577084" stroke-width="0.8"/>
<polygon points="1517.01,801.98 1513.81,801.86 1513.81,839.86 1517.01,839.98" fill="#5a7589" stroke="#5a7589" stroke-width="0.8"/>
<polygon points="1513.81,801.86 1510.62,801.98 1510.62,839.98 1513.81,839.86" fill="#5e7b90" stroke="#5e7b90" stroke-width="0.8"/>
<polygon points="1510.62,801.98 1507.47,802.34 1507.47,840.34 1510.62,839.98" fill="#648499" stroke="#648499" stroke-width="0.8"/>
<polygon points="1507.47,802.34 1504.44,802.93 1504.44,840.93 1507.47,840.34" fill="#6a8ca3" stroke="#6a8ca3" stroke-width="0.8"/>
<polygon points="1504.44,802.93 1501.56,803.75 1501.56,841.75 1504.44,840.93" fill="#6f92aa" stroke="#6f92aa" stroke-width="0.8"/>
<polygon points="1501.56,803.75 1498.90,804.78 1498.90,842.78 1501.56,841.75" fill="#7297af" stroke="#7297af" stroke-width="0.8"/>
<polygon points="1498.90,804.78 1496.49,806.00 1496.49,844.00 1498.90,842.78" fill="#759bb4" stroke="#759bb4" stroke-width="0.8"/>
<polygon points="1496.49,806.00 1396.90,863.50 1396.90,901.50 1496.49,844.00" fill="#769db6" stroke="#769db6" stroke-width="0.8"/>
<polygon points="1396.90,863.50 1394.79,864.89 1394.79,902.89 1396.90,901.50" fill="#769db7" stroke="#769db7" stroke-width="0.8"/>
<polygon points="1394.79,864.89 1393.01,866.43 1393.01,904.43 1394.79,902.89" fill="#779eb8" stroke="#779eb8" stroke-width="0.8"/>
<polygon points="1393.01,866.43 1391.59,868.09 1391.59,906.09 1393.01,904.43" fill="#789fb9" stroke="#789fb9" stroke-width="0.8"/>
<polygon points="1391.59,868.09 1390.56,869.84 1390.56,907.84 1391.59,906.09" fill="#78a0ba" stroke="#78a0ba" stroke-width="0.8"/>
<polygon points="1390.56,869.84 1389.93,871.65 1389.93,909.65 1390.56,907.84" fill="#79a1bb" stroke="#79a1bb" stroke-width="0.8"/>
<polygon points="1389.93,871.65 1389.72,873.50 1389.72,911.50 1389.93,909.65" fill="#7aa2bc" stroke="#7aa2bc" stroke-width="0.8"/>
<polygon points="1579.88,995.00 1579.67,996.85 1579.67,1034.85 1579.88,1033.00" fill="#7aa2bc" stroke="#7aa2bc" stroke-width="0.8"/>
<polygon points="1579.67,996.85 1579.04,998.66 1579.04,1036.66 1579.67,1034.85" fill="#79a1bb" stroke="#79a1bb" stroke-width="0.8"/>
<polygon points="1579.04,998.66 1578.01,1000.41 1578.01,1038.41 1579.04,1036.66" fill="#78a0ba" stroke="#78a0ba" stroke-width="0.8"/>
<polygon points="1578.01,1000.41 1576.59,1002.07 1576.59,1040.07 1578.01,1038.41" fill="#789fb9" stroke="#789fb9" stroke-width="0.8"/>
<polygon points="1576.59,1002.07 1574.81,1003.61 1574.81,1041.61 1576.59,1040.07" fill="#779eb8" stroke="#779eb8" stroke-width="0.8"/>
<polygon points="1574.81,1003.61 1572.70,1005.00 1572.70,1043.00 1574.81,1041.61" fill="#769db7" stroke="#769db7" stroke-width="0.8"/>
<polygon points="1572.70,1005.00 1282.58,1172.50 1282.58,1210.50 1572.70,1043.00" fill="#769db6" stroke="#769db6" stroke-width="0.8"/>
<polygon points="1282.58,1172.50 1280.17,1173.72 1280.17,1211.72 1282.58,1210.50" fill="#759bb4" stroke="#759bb4" stroke-width="0.8"/>
<polygon points="1280.17,1173.72 1277.51,1174.75 1277.51,1212.75 1280.17,1211.72" fill="#7297af" stroke="#7297af" stroke-width="0.8"/>
<polygon points="1277.51,1174.75 1274.64,1175.57 1274.64,1213.57 1277.51,1212.75" fill="#6f92aa" stroke="#6f92aa" stroke-width="0.8"/>
<polygon points="1274.64,1175.57 1271.60,1176.16 1271.60,1214.16 1274.64,1213.57" fill="#6a8ca3" stroke="#6a8ca3" stroke-width="0.8"/>
<polygon points="1271.60,1176.16 1268.46,1176.52 1268.46,1214.52 1271.60,1214.16" fill="#648499" stroke="#648499" stroke-width="0.8"/>
<polygon points="1268.46,1176.52 1265.26,1176.64 1265.26,1214.64 1268.46,1214.52" fill="#5e7b90" stroke="#5e7b90" stroke-width="0.8"/>
<polygon points="1265.26,1176.64 1262.07,1176.52 1262.07,1214.52 1265.26,1214.64" fill="#5a7589" stroke="#5a7589" stroke-width="0.8"/>
<polygon points="1262.07,1176.52 1258.92,1176.16 1258.92,1214.16 1262.07,1214.52" fill="#577084" stroke="#577084" stroke-width="0.8"/>
<polygon points="1258.92,1176.16 1255.89,1175.57 1255.89,1213.57 1258.92,1214.16" fill="#546c7f" stroke="#546c7f" stroke-width="0.8"/>
<polygon points="1255.89,1175.57 1253.02,1174.75 1253.02,1212.75 1255.89,1213.57" fill="#52697b" stroke="#52697b" stroke-width="0.8"/>
<polygon points="1253.02,1174.75 1250.35,1173.72 1250.35,1211.72 1253.02,1212.75" fill="#51677a" stroke="#51677a" stroke-width="0.8"/>
<polygon points="1250.35,1173.72 1247.94,1172.50 1247.94,1210.50 1250.35,1211.72" fill="#506678" stroke="#506678" stroke-width="0.8"/>
<polygon points="1247.94,1172.50 1072.14,1071.00 1072.14,1109.00 1247.94,1210.50" fill="#4f6577" stroke="#4f6577" stroke-width="0.8"/>
<polygon points="1072.14,1071.00 1069.73,1069.78 1069.73,1107.78 1072.14,1109.00" fill="#506678" stroke="#506678" stroke-width="0.8"/>
<polygon points="1069.73,1069.78 1067.07,1068.75 1067.07,1106.75 1069.73,1107.78" fill="#51677a" stroke="#51677a" stroke-width="0.8"/>
<polygon points="1067.07,1068.75 1064.19,1067.93 1064.19,1105.93 1067.07,1106.75" fill="#52697b" stroke="#52697b" stroke-width="0.8"/>
<polygon points="1064.19,1067.93 1061.16,1067.34 1061.16,1105.34 1064.19,1105.93" fill="#546c7f" stroke="#546c7f" stroke-width="0.8"/>
<polygon points="1061.16,1067.34 1058.02,1066.98 1058.02,1104.98 1061.16,1105.34" fill="#577084" stroke="#577084" stroke-width="0.8"/>
<polygon points="1058.02,1066.98 1054.82,1066.86 1054.82,1104.86 1058.02,1104.98" fill="#5a7589" stroke="#5a7589" stroke-width="0.8"/>
<polygon points="1054.82,1066.86 1051.62,1066.98 1051.62,1104.98 1054.82,1104.86" fill="#5e7b90" stroke="#5e7b90" stroke-width="0.8"/>
<polygon points="1051.62,1066.98 1048.48,1067.34 1048.48,1105.34 1051.62,1104.98" fill="#648499" stroke="#648499" stroke-width="0.8"/>
<polygon points="1048.48,1067.34 1045.45,1067.93 1045.45,1105.93 1048.48,1105.34" fill="#6a8ca3" stroke="#6a8ca3" stroke-width="0.8"/>
<polygon points="1045.45,1067.93 1042.57,1068.75 1042.57,1106.75 1045.45,1105.93" fill="#6f92aa" stroke="#6f92aa" stroke-width="0.8"/>
<polygon points="1042.57,1068.75 1039.91,1069.78 1039.91,1107.78 1042.57,1106.75" fill="#7297af" stroke="#7297af" stroke-width="0.8"/>
<polygon points="1039.91,1069.78 1037.50,1071.00 1037.50,1109.00 1039.91,1107.78" fill="#759bb4" stroke="#759bb4" stroke-width="0.8"/>
<polygon points="1037.50,1071.00 937.91,1128.50 937.91,1166.50 1037.50,1109.00" fill="#769db6" stroke="#769db6" stroke-width="0.8"/>
<polygon points="937.91,1128.50 935.79,1129.89 935.79,1167.89 937.91,1166.50" fill="#769db7" stroke="#769db7" stroke-width="0.8"/>
<polygon points="935.79,1129.89 934.01,1131.43 934.01,1169.43 935.79,1167.89" fill="#779eb8" stroke="#779eb8" stroke-width="0.8"/>
<polygon points="934.01,1131.43 932.60,1133.09 932.60,1171.09 934.01,1169.43" fill="#789fb9" stroke="#789fb9" stroke-width="0.8"/>
<polygon points="932.60,1133.09 931.57,1134.84 931.57,1172.84 932.60,1171.09" fill="#78a0ba" stroke="#78a0ba" stroke-width="0.8"/>
<polygon points="931.57,1134.84 930.94,1136.65 930.94,1174.65 931.57,1172.84" fill="#79a1bb" stroke="#79a1bb" stroke-width="0.8"/>
<polygon points="930.94,1136.65 930.73,1138.50 930.73,1176.50 930.94,1174.65" fill="#7aa2bc" stroke="#7aa2bc" stroke-width="0.8"/>
<polygon points="1120.88,1260.00 1120.67,1261.85 1120.67,1299.85 1120.88,1298.00" fill="#7aa2bc" stroke="#7aa2bc" stroke-width="0.8"/>
<polygon points="1120.67,1261.85 1120.05,1263.66 1120.05,1301.66 1120.67,1299.85" fill="#79a1bb" stroke="#79a1bb" stroke-width="0.8"/>
<polygon points="1120.05,1263.66 1119.02,1265.41 1119.02,1303.41 1120.05,1301.66" fill="#78a0ba" stroke="#78a0ba" stroke-width="0.8"/>
<polygon points="1119.02,1265.41 1117.60,1267.07 1117.60,1305.07 1119.02,1303.41" fill="#789fb9" stroke="#789fb9" stroke-width="0.8"/>
<polygon points="1117.60,1267.07 1115.82,1268.61 1115.82,1306.61 1117.60,1305.07" fill="#779eb8" stroke="#779eb8" stroke-width="0.8"/>
<polygon points="1115.82,1268.61 1113.71,1270.00 1113.71,1308.00 1115.82,1306.61" fill="#769db7" stroke="#769db7" stroke-width="0.8"/>
<polygon points="1113.71,1270.00 1107.93,1272.93 1107.93,1310.93 1113.71,1308.00" fill="#759bb4" stroke="#759bb4" stroke-width="0.8"/>
<polygon points="1107.93,1272.93 1101.53,1275.39 1101.53,1313.39 1107.93,1310.93" fill="#7297af" stroke="#7297af" stroke-width="0.8"/>
<polygon points="1101.53,1275.39 1094.64,1277.36 1094.64,1315.36 1101.53,1313.39" fill="#6f92aa" stroke="#6f92aa" stroke-width="0.8"/>
<polygon points="1094.64,1277.36 1087.35,1278.78 1087.35,1316.78 1094.64,1315.36" fill="#6a8ca3" stroke="#6a8ca3" stroke-width="0.8"/>
<polygon points="1087.35,1278.78 1079.81,1279.65 1079.81,1317.65 1087.35,1316.78" fill="#648499" stroke="#648499" stroke-width="0.8"/>
<polygon points="1079.81,1279.65 1072.14,1279.94 1072.14,1317.94 1079.81,1317.65" fill="#5e7b90" stroke="#5e7b90" stroke-width="0.8"/>
<polygon points="1072.14,1279.94 1064.47,1279.65 1064.47,1317.65 1072.14,1317.94" fill="#5a7589" stroke="#5a7589" stroke-width="0.8"/>
<polygon points="1064.47,1279.65 1056.92,1278.78 1056.92,1316.78 1064.47,1317.65" fill="#577084" stroke="#577084" stroke-width="0.8"/>
<polygon points="1056.92,1278.78 1049.64,1277.36 1049.64,1315.36 1056.92,1316.78" fill="#546c7f" stroke="#546c7f" stroke-width="0.8"/>
<polygon points="1049.64,1277.36 1042.75,1275.39 1042.75,1313.39 1049.64,1315.36" fill="#52697b" stroke="#52697b" stroke-width="0.8"/>
<polygon points="1042.75,1275.39 1036.35,1272.93 1036.35,1310.93 1042.75,1313.39" fill="#51677a" stroke="#51677a" stroke-width="0.8"/>
<polygon points="1036.35,1272.93 1030.57,1270.00 1030.57,1308.00 1036.35,1310.93" fill="#506678" stroke="#506678" stroke-width="0.8"/>
<polygon points="1030.57,1270.00 439.59,928.80 439.59,966.80 1030.57,1308.00" fill="#4f6577" stroke="#4f6577" stroke-width="0.8"/>
<polygon points="439.59,928.80 435.31,926.05 435.31,964.05 439.59,966.80" fill="#4f6678" stroke="#4f6678" stroke-width="0.8"/>
<polygon points="435.31,926.05 431.55,923.05 431.55,961.05 435.31,964.05" fill="#506679" stroke="#506679" stroke-width="0.8"/>
<polygon points="431.55,923.05 428.35,919.84 428.35,957.84 431.55,961.05" fill="#51677a" stroke="#51677a" stroke-width="0.8"/>
<polygon points="428.35,919.84 425.76,916.46 425.76,954.46 428.35,957.84" fill="#51687b" stroke="#51687b" stroke-width="0.8"/>
<polygon points="425.76,916.46 423.81,912.93 423.81,950.93 425.76,954.46" fill="#52697c" stroke="#52697c" stroke-width="0.8"/>
<polygon points="423.81,912.93 422.50,909.31 422.50,947.31 423.81,950.93" fill="#536b7d" stroke="#536b7d" stroke-width="0.8"/>
<polygon points="422.50,909.31 421.87,905.63 421.87,943.63 422.50,947.31" fill="#546c7f" stroke="#546c7f" stroke-width="0.8"/>
<polygon points="753.69,869.00 753.48,867.15 753.48,905.15 753.69,907.00" fill="#546c7f" stroke="#546c7f" stroke-width="0.8"/>
<polygon points="753.48,867.15 752.85,865.34 752.85,903.34 753.48,905.15" fill="#536b7d" stroke="#536b7d" stroke-width="0.8"/>
<polygon points="752.85,865.34 751.82,863.59 751.82,901.59 752.85,903.34" fill="#52697c" stroke="#52697c" stroke-width="0.8"/>
<polygon points="751.82,863.59 750.41,861.93 750.41,899.93 751.82,901.59" fill="#51687a" stroke="#51687a" stroke-width="0.8"/>
<polygon points="750.41,861.93 748.63,860.39 748.63,898.39 750.41,899.93" fill="#506779" stroke="#506779" stroke-width="0.8"/>
<polygon points="748.63,860.39 746.51,859.00 746.51,897.00 748.63,898.39" fill="#4f6678" stroke="#4f6678" stroke-width="0.8"/>
<polygon points="746.51,859.00 627.87,790.50 627.87,828.50 746.51,897.00" fill="#4f6577" stroke="#4f6577" stroke-width="0.8"/>
<polygon points="627.87,790.50 625.76,789.11 625.76,827.11 627.87,828.50" fill="#4f6678" stroke="#4f6678" stroke-width="0.8"/>
<polygon points="625.76,789.11 623.98,787.57 623.98,825.57 625.76,827.11" fill="#506779" stroke="#506779" stroke-width="0.8"/>
<polygon points="623.98,787.57 622.56,785.91 622.56,823.91 623.98,825.57" fill="#51687a" stroke="#51687a" stroke-width="0.8"/>
<polygon points="622.56,785.91 621.53,784.16 621.53,822.16 622.56,823.91" fill="#52697c" stroke="#52697c" stroke-width="0.8"/>
<polygon points="621.53,784.16 620.90,782.35 620.90,820.35 621.53,822.16" fill="#536b7d" stroke="#536b7d" stroke-width="0.8"/>
<polygon points="620.90,782.35 620.69,780.50 620.69,818.50 620.90,820.35" fill="#546c7f" stroke="#546c7f" stroke-width="0.8"/>
<polygon points="1213.55,603.50 1213.34,601.65 1213.34,639.65 1213.55,641.50" fill="#546c7f" stroke="#546c7f" stroke-width="0.8"/>
<polygon points="1213.34,601.65 1212.71,599.84 1212.71,637.84 1213.34,639.65" fill="#536b7d" stroke="#536b7d" stroke-width="0.8"/>
<polygon points="1212.71,599.84 1211.68,598.09 1211.68,636.09 1212.71,637.84" fill="#52697c" stroke="#52697c" stroke-width="0.8"/>
<polygon points="1211.68,598.09 1210.27,596.43 1210.27,634.43 1211.68,636.09" fill="#51687a" stroke="#51687a" stroke-width="0.8"/>
<polygon points="1210.27,596.43 1208.49,594.89 1208.49,632.89 1210.27,634.43" fill="#506779" stroke="#506779" stroke-width="0.8"/>
<polygon points="1208.49,594.89 1206.37,593.50 1206.37,631.50 1208.49,632.89" fill="#4f6678" stroke="#4f6678" stroke-width="0.8"/>
<polygon points="1206.37,593.50 1087.73,525.00 1087.73,563.00 1206.37,631.50" fill="#4f6577" stroke="#4f6577" stroke-width="0.8"/>
<polygon points="1087.73,525.00 1085.62,523.61 1085.62,561.61 1087.73,563.00" fill="#4f6678" stroke="#4f6678" stroke-width="0.8"/>
<polygon points="1085.62,523.61 1083.84,522.07 1083.84,560.07 1085.62,561.61" fill="#506779" stroke="#506779" stroke-width="0.8"/>
<polygon points="1083.84,522.07 1082.42,520.41 1082.42,558.41 1083.84,560.07" fill="#51687a" stroke="#51687a" stroke-width="0.8"/>
<polygon points="1082.42,520.41 1081.39,518.66 1081.39,556.66 1082.42,558.41" fill="#52697c" stroke="#52697c" stroke-width="0.8"/>
<polygon points="1081.39,518.66 1080.76,516.85 1080.76,554.85 1081.39,556.66" fill="#536b7d" stroke="#536b7d" stroke-width="0.8"/>
<polygon points="1080.76,516.85 1080.55,515.00 1080.55,553.00 1080.76,554.85" fill="#546c7f" stroke="#546c7f" stroke-width="0.8"/>
<polygon points="1736.50,926.85 1733.63,927.67 1733.63,948.57 1736.50,947.75" fill="#0c1a24" fill-opacity="0.045"/>
<polygon points="1736.50,933.31 1733.63,934.13 1733.63,948.57 1736.50,947.75" fill="#0c1a24" fill-opacity="0.045"/>
<polygon points="1736.50,938.63 1733.63,939.45 1733.63,948.57 1736.50,947.75" fill="#0c1a24" fill-opacity="0.045"/>
<polygon points="1736.50,943.19 1733.63,944.01 1733.63,948.57 1736.50,947.75" fill="#0c1a24" fill-opacity="0.045"/>
<polygon points="1736.50,946.23 1733.63,947.05 1733.63,948.57 1736.50,947.75" fill="#0c1a24" fill-opacity="0.045"/>
<polygon points="1733.63,927.67 1730.60,928.26 1730.60,949.16 1733.63,948.57" fill="#0c1a24" fill-opacity="0.045"/>
<polygon points="1733.63,934.13 1730.60,934.72 1730.60,949.16 1733.63,948.57" fill="#0c1a24" fill-opacity="0.045"/>
<polygon points="1733.63,939.45 1730.60,940.04 1730.60,949.16 1733.63,948.57" fill="#0c1a24" fill-opacity="0.045"/>
<polygon points="1733.63,944.01 1730.60,944.60 1730.60,949.16 1733.63,948.57" fill="#0c1a24" fill-opacity="0.045"/>
<polygon points="1733.63,947.05 1730.60,947.64 1730.60,949.16 1733.63,948.57" fill="#0c1a24" fill-opacity="0.045"/>
<polygon points="1730.60,928.26 1727.45,928.62 1727.45,949.52 1730.60,949.16" fill="#0c1a24" fill-opacity="0.045"/>
<polygon points="1730.60,934.72 1727.45,935.08 1727.45,949.52 1730.60,949.16" fill="#0c1a24" fill-opacity="0.045"/>
<polygon points="1730.60,940.04 1727.45,940.40 1727.45,949.52 1730.60,949.16" fill="#0c1a24" fill-opacity="0.045"/>
<polygon points="1730.60,944.60 1727.45,944.96 1727.45,949.52 1730.60,949.16" fill="#0c1a24" fill-opacity="0.045"/>
<polygon points="1730.60,947.64 1727.45,948.00 1727.45,949.52 1730.60,949.16" fill="#0c1a24" fill-opacity="0.045"/>
<polygon points="1727.45,928.62 1724.26,928.74 1724.26,949.64 1727.45,949.52" fill="#0c1a24" fill-opacity="0.045"/>
<polygon points="1727.45,935.08 1724.26,935.20 1724.26,949.64 1727.45,949.52" fill="#0c1a24" fill-opacity="0.045"/>
<polygon points="1727.45,940.40 1724.26,940.52 1724.26,949.64 1727.45,949.52" fill="#0c1a24" fill-opacity="0.045"/>
<polygon points="1727.45,944.96 1724.26,945.08 1724.26,949.64 1727.45,949.52" fill="#0c1a24" fill-opacity="0.045"/>
<polygon points="1727.45,948.00 1724.26,948.12 1724.26,949.64 1727.45,949.52" fill="#0c1a24" fill-opacity="0.045"/>
<polygon points="1724.26,928.74 1721.06,928.62 1721.06,949.52 1724.26,949.64" fill="#0c1a24" fill-opacity="0.045"/>
<polygon points="1724.26,935.20 1721.06,935.08 1721.06,949.52 1724.26,949.64" fill="#0c1a24" fill-opacity="0.045"/>
<polygon points="1724.26,940.52 1721.06,940.40 1721.06,949.52 1724.26,949.64" fill="#0c1a24" fill-opacity="0.045"/>
<polygon points="1724.26,945.08 1721.06,944.96 1721.06,949.52 1724.26,949.64" fill="#0c1a24" fill-opacity="0.045"/>
<polygon points="1724.26,948.12 1721.06,948.00 1721.06,949.52 1724.26,949.64" fill="#0c1a24" fill-opacity="0.045"/>
<polygon points="1721.06,928.62 1717.92,928.26 1717.92,949.16 1721.06,949.52" fill="#0c1a24" fill-opacity="0.045"/>
<polygon points="1721.06,935.08 1717.92,934.72 1717.92,949.16 1721.06,949.52" fill="#0c1a24" fill-opacity="0.045"/>
<polygon points="1721.06,940.40 1717.92,940.04 1717.92,949.16 1721.06,949.52" fill="#0c1a24" fill-opacity="0.045"/>
<polygon points="1721.06,944.96 1717.92,944.60 1717.92,949.16 1721.06,949.52" fill="#0c1a24" fill-opacity="0.045"/>
<polygon points="1721.06,948.00 1717.92,947.64 1717.92,949.16 1721.06,949.52" fill="#0c1a24" fill-opacity="0.045"/>
<polygon points="1717.92,928.26 1714.88,927.67 1714.88,948.57 1717.92,949.16" fill="#0c1a24" fill-opacity="0.045"/>
<polygon points="1717.92,934.72 1714.88,934.13 1714.88,948.57 1717.92,949.16" fill="#0c1a24" fill-opacity="0.045"/>
<polygon points="1717.92,940.04 1714.88,939.45 1714.88,948.57 1717.92,949.16" fill="#0c1a24" fill-opacity="0.045"/>
<polygon points="1717.92,944.60 1714.88,944.01 1714.88,948.57 1717.92,949.16" fill="#0c1a24" fill-opacity="0.045"/>
<polygon points="1717.92,947.64 1714.88,947.05 1714.88,948.57 1717.92,949.16" fill="#0c1a24" fill-opacity="0.045"/>
<polygon points="1714.88,927.67 1712.01,926.85 1712.01,947.75 1714.88,948.57" fill="#0c1a24" fill-opacity="0.045"/>
<polygon points="1714.88,934.13 1712.01,933.31 1712.01,947.75 1714.88,948.57" fill="#0c1a24" fill-opacity="0.045"/>
<polygon points="1714.88,939.45 1712.01,938.63 1712.01,947.75 1714.88,948.57" fill="#0c1a24" fill-opacity="0.045"/>
<polygon points="1714.88,944.01 1712.01,943.19 1712.01,947.75 1714.88,948.57" fill="#0c1a24" fill-opacity="0.045"/>
<polygon points="1714.88,947.05 1712.01,946.23 1712.01,947.75 1714.88,948.57" fill="#0c1a24" fill-opacity="0.045"/>
<polygon points="1712.01,926.85 1709.35,925.82 1709.35,946.72 1712.01,947.75" fill="#0c1a24" fill-opacity="0.045"/>
<polygon points="1712.01,933.31 1709.35,932.28 1709.35,946.72 1712.01,947.75" fill="#0c1a24" fill-opacity="0.045"/>
<polygon points="1712.01,938.63 1709.35,937.60 1709.35,946.72 1712.01,947.75" fill="#0c1a24" fill-opacity="0.045"/>
<polygon points="1712.01,943.19 1709.35,942.16 1709.35,946.72 1712.01,947.75" fill="#0c1a24" fill-opacity="0.045"/>
<polygon points="1712.01,946.23 1709.35,945.20 1709.35,946.72 1712.01,947.75" fill="#0c1a24" fill-opacity="0.045"/>
<polygon points="1709.35,925.82 1706.94,924.60 1706.94,945.50 1709.35,946.72" fill="#0c1a24" fill-opacity="0.045"/>
<polygon points="1709.35,932.28 1706.94,931.06 1706.94,945.50 1709.35,946.72" fill="#0c1a24" fill-opacity="0.045"/>
<polygon points="1709.35,937.60 1706.94,936.38 1706.94,945.50 1709.35,946.72" fill="#0c1a24" fill-opacity="0.045"/>
<polygon points="1709.35,942.16 1706.94,940.94 1706.94,945.50 1709.35,946.72" fill="#0c1a24" fill-opacity="0.045"/>
<polygon points="1709.35,945.20 1706.94,943.98 1706.94,945.50 1709.35,946.72" fill="#0c1a24" fill-opacity="0.045"/>
<polygon points="1706.94,924.60 1531.13,823.10 1531.13,844.00 1706.94,945.50" fill="#0c1a24" fill-opacity="0.045"/>
<polygon points="1706.94,931.06 1531.13,829.56 1531.13,844.00 1706.94,945.50" fill="#0c1a24" fill-opacity="0.045"/>
<polygon points="1706.94,936.38 1531.13,834.88 1531.13,844.00 1706.94,945.50" fill="#0c1a24" fill-opacity="0.045"/>
<polygon points="1706.94,940.94 1531.13,839.44 1531.13,844.00 1706.94,945.50" fill="#0c1a24" fill-opacity="0.045"/>
<polygon points="1706.94,943.98 1531.13,842.48 1531.13,844.00 1706.94,945.50" fill="#0c1a24" fill-opacity="0.045"/>
<polygon points="1531.13,823.10 1528.72,821.88 1528.72,842.78 1531.13,844.00" fill="#0c1a24" fill-opacity="0.045"/>
<polygon points="1531.13,829.56 1528.72,828.34 1528.72,842.78 1531.13,844.00" fill="#0c1a24" fill-opacity="0.045"/>
<polygon points="1531.13,834.88 1528.72,833.66 1528.72,842.78 1531.13,844.00" fill="#0c1a24" fill-opacity="0.045"/>
<polygon points="1531.13,839.44 1528.72,838.22 1528.72,842.78 1531.13,844.00" fill="#0c1a24" fill-opacity="0.045"/>
<polygon points="1531.13,842.48 1528.72,841.26 1528.72,842.78 1531.13,844.00" fill="#0c1a24" fill-opacity="0.045"/>
<polygon points="1528.72,821.88 1526.06,820.85 1526.06,841.75 1528.72,842.78" fill="#0c1a24" fill-opacity="0.045"/>
<polygon points="1528.72,828.34 1526.06,827.31 1526.06,841.75 1528.72,842.78" fill="#0c1a24" fill-opacity="0.045"/>
<polygon points="1528.72,833.66 1526.06,832.63 1526.06,841.75 1528.72,842.78" fill="#0c1a24" fill-opacity="0.045"/>
<polygon points="1528.72,838.22 1526.06,837.19 1526.06,841.75 1528.72,842.78" fill="#0c1a24" fill-opacity="0.045"/>
<polygon points="1528.72,841.26 1526.06,840.23 1526.06,841.75 1528.72,842.78" fill="#0c1a24" fill-opacity="0.045"/>
<polygon points="1526.06,820.85 1523.19,820.03 1523.19,840.93 1526.06,841.75" fill="#0c1a24" fill-opacity="0.045"/>
<polygon points="1526.06,827.31 1523.19,826.49 1523.19,840.93 1526.06,841.75" fill="#0c1a24" fill-opacity="0.045"/>
<polygon points="1526.06,832.63 1523.19,831.81 1523.19,840.93 1526.06,841.75" fill="#0c1a24" fill-opacity="0.045"/>
<polygon points="1526.06,837.19 1523.19,836.37 1523.19,840.93 1526.06,841.75" fill="#0c1a24" fill-opacity="0.045"/>
<polygon points="1526.06,840.23 1523.19,839.41 1523.19,840.93 1526.06,841.75" fill="#0c1a24" fill-opacity="0.045"/>
<polygon points="1523.19,820.03 1520.15,819.44 1520.15,840.34 1523.19,840.93" fill="#0c1a24" fill-opacity="0.045"/>
<polygon points="1523.19,826.49 1520.15,825.90 1520.15,840.34 1523.19,840.93" fill="#0c1a24" fill-opacity="0.045"/>
<polygon points="1523.19,831.81 1520.15,831.22 1520.15,840.34 1523.19,840.93" fill="#0c1a24" fill-opacity="0.045"/>
<polygon points="1523.19,836.37 1520.15,835.78 1520.15,840.34 1523.19,840.93" fill="#0c1a24" fill-opacity="0.045"/>
<polygon points="1523.19,839.41 1520.15,838.82 1520.15,840.34 1523.19,840.93" fill="#0c1a24" fill-opacity="0.045"/>
<polygon points="1520.15,819.44 1517.01,819.08 1517.01,839.98 1520.15,840.34" fill="#0c1a24" fill-opacity="0.045"/>
<polygon points="1520.15,825.90 1517.01,825.54 1517.01,839.98 1520.15,840.34" fill="#0c1a24" fill-opacity="0.045"/>
<polygon points="1520.15,831.22 1517.01,830.86 1517.01,839.98 1520.15,840.34" fill="#0c1a24" fill-opacity="0.045"/>
<polygon points="1520.15,835.78 1517.01,835.42 1517.01,839.98 1520.15,840.34" fill="#0c1a24" fill-opacity="0.045"/>
<polygon points="1520.15,838.82 1517.01,838.46 1517.01,839.98 1520.15,840.34" fill="#0c1a24" fill-opacity="0.045"/>
<polygon points="1517.01,819.08 1513.81,818.96 1513.81,839.86 1517.01,839.98" fill="#0c1a24" fill-opacity="0.045"/>
<polygon points="1517.01,825.54 1513.81,825.42 1513.81,839.86 1517.01,839.98" fill="#0c1a24" fill-opacity="0.045"/>
<polygon points="1517.01,830.86 1513.81,830.74 1513.81,839.86 1517.01,839.98" fill="#0c1a24" fill-opacity="0.045"/>
<polygon points="1517.01,835.42 1513.81,835.30 1513.81,839.86 1517.01,839.98" fill="#0c1a24" fill-opacity="0.045"/>
<polygon points="1517.01,838.46 1513.81,838.34 1513.81,839.86 1517.01,839.98" fill="#0c1a24" fill-opacity="0.045"/>
<polygon points="1513.81,818.96 1510.62,819.08 1510.62,839.98 1513.81,839.86" fill="#0c1a24" fill-opacity="0.045"/>
<polygon points="1513.81,825.42 1510.62,825.54 1510.62,839.98 1513.81,839.86" fill="#0c1a24" fill-opacity="0.045"/>
<polygon points="1513.81,830.74 1510.62,830.86 1510.62,839.98 1513.81,839.86" fill="#0c1a24" fill-opacity="0.045"/>
<polygon points="1513.81,835.30 1510.62,835.42 1510.62,839.98 1513.81,839.86" fill="#0c1a24" fill-opacity="0.045"/>
<polygon points="1513.81,838.34 1510.62,838.46 1510.62,839.98 1513.81,839.86" fill="#0c1a24" fill-opacity="0.045"/>
<polygon points="1510.62,819.08 1507.47,819.44 1507.47,840.34 1510.62,839.98" fill="#0c1a24" fill-opacity="0.045"/>
<polygon points="1510.62,825.54 1507.47,825.90 1507.47,840.34 1510.62,839.98" fill="#0c1a24" fill-opacity="0.045"/>
<polygon points="1510.62,830.86 1507.47,831.22 1507.47,840.34 1510.62,839.98" fill="#0c1a24" fill-opacity="0.045"/>
<polygon points="1510.62,835.42 1507.47,835.78 1507.47,840.34 1510.62,839.98" fill="#0c1a24" fill-opacity="0.045"/>
<polygon points="1510.62,838.46 1507.47,838.82 1507.47,840.34 1510.62,839.98" fill="#0c1a24" fill-opacity="0.045"/>
<polygon points="1507.47,819.44 1504.44,820.03 1504.44,840.93 1507.47,840.34" fill="#0c1a24" fill-opacity="0.045"/>
<polygon points="1507.47,825.90 1504.44,826.49 1504.44,840.93 1507.47,840.34" fill="#0c1a24" fill-opacity="0.045"/>
<polygon points="1507.47,831.22 1504.44,831.81 1504.44,840.93 1507.47,840.34" fill="#0c1a24" fill-opacity="0.045"/>
<polygon points="1507.47,835.78 1504.44,836.37 1504.44,840.93 1507.47,840.34" fill="#0c1a24" fill-opacity="0.045"/>
<polygon points="1507.47,838.82 1504.44,839.41 1504.44,840.93 1507.47,840.34" fill="#0c1a24" fill-opacity="0.045"/>
<polygon points="1504.44,820.03 1501.56,820.85 1501.56,841.75 1504.44,840.93" fill="#0c1a24" fill-opacity="0.045"/>
<polygon points="1504.44,826.49 1501.56,827.31 1501.56,841.75 1504.44,840.93" fill="#0c1a24" fill-opacity="0.045"/>
<polygon points="1504.44,831.81 1501.56,832.63 1501.56,841.75 1504.44,840.93" fill="#0c1a24" fill-opacity="0.045"/>
<polygon points="1504.44,836.37 1501.56,837.19 1501.56,841.75 1504.44,840.93" fill="#0c1a24" fill-opacity="0.045"/>
<polygon points="1504.44,839.41 1501.56,840.23 1501.56,841.75 1504.44,840.93" fill="#0c1a24" fill-opacity="0.045"/>
<polygon points="1501.56,820.85 1498.90,821.88 1498.90,842.78 1501.56,841.75" fill="#0c1a24" fill-opacity="0.045"/>
<polygon points="1501.56,827.31 1498.90,828.34 1498.90,842.78 1501.56,841.75" fill="#0c1a24" fill-opacity="0.045"/>
<polygon points="1501.56,832.63 1498.90,833.66 1498.90,842.78 1501.56,841.75" fill="#0c1a24" fill-opacity="0.045"/>
<polygon points="1501.56,837.19 1498.90,838.22 1498.90,842.78 1501.56,841.75" fill="#0c1a24" fill-opacity="0.045"/>
<polygon points="1501.56,840.23 1498.90,841.26 1498.90,842.78 1501.56,841.75" fill="#0c1a24" fill-opacity="0.045"/>
<polygon points="1498.90,821.88 1496.49,823.10 1496.49,844.00 1498.90,842.78" fill="#0c1a24" fill-opacity="0.045"/>
<polygon points="1498.90,828.34 1496.49,829.56 1496.49,844.00 1498.90,842.78" fill="#0c1a24" fill-opacity="0.045"/>
<polygon points="1498.90,833.66 1496.49,834.88 1496.49,844.00 1498.90,842.78" fill="#0c1a24" fill-opacity="0.045"/>
<polygon points="1498.90,838.22 1496.49,839.44 1496.49,844.00 1498.90,842.78" fill="#0c1a24" fill-opacity="0.045"/>
<polygon points="1498.90,841.26 1496.49,842.48 1496.49,844.00 1498.90,842.78" fill="#0c1a24" fill-opacity="0.045"/>
<polygon points="1496.49,823.10 1396.90,880.60 1396.90,901.50 1496.49,844.00" fill="#0c1a24" fill-opacity="0.045"/>
<polygon points="1496.49,829.56 1396.90,887.06 1396.90,901.50 1496.49,844.00" fill="#0c1a24" fill-opacity="0.045"/>
<polygon points="1496.49,834.88 1396.90,892.38 1396.90,901.50 1496.49,844.00" fill="#0c1a24" fill-opacity="0.045"/>
<polygon points="1496.49,839.44 1396.90,896.94 1396.90,901.50 1496.49,844.00" fill="#0c1a24" fill-opacity="0.045"/>
<polygon points="1496.49,842.48 1396.90,899.98 1396.90,901.50 1496.49,844.00" fill="#0c1a24" fill-opacity="0.045"/>
<polygon points="1396.90,880.60 1394.79,881.99 1394.79,902.89 1396.90,901.50" fill="#0c1a24" fill-opacity="0.045"/>
<polygon points="1396.90,887.06 1394.79,888.45 1394.79,902.89 1396.90,901.50" fill="#0c1a24" fill-opacity="0.045"/>
<polygon points="1396.90,892.38 1394.79,893.77 1394.79,902.89 1396.90,901.50" fill="#0c1a24" fill-opacity="0.045"/>
<polygon points="1396.90,896.94 1394.79,898.33 1394.79,902.89 1396.90,901.50" fill="#0c1a24" fill-opacity="0.045"/>
<polygon points="1396.90,899.98 1394.79,901.37 1394.79,902.89 1396.90,901.50" fill="#0c1a24" fill-opacity="0.045"/>
<polygon points="1394.79,881.99 1393.01,883.53 1393.01,904.43 1394.79,902.89" fill="#0c1a24" fill-opacity="0.045"/>
<polygon points="1394.79,888.45 1393.01,889.99 1393.01,904.43 1394.79,902.89" fill="#0c1a24" fill-opacity="0.045"/>
<polygon points="1394.79,893.77 1393.01,895.31 1393.01,904.43 1394.79,902.89" fill="#0c1a24" fill-opacity="0.045"/>
<polygon points="1394.79,898.33 1393.01,899.87 1393.01,904.43 1394.79,902.89" fill="#0c1a24" fill-opacity="0.045"/>
<polygon points="1394.79,901.37 1393.01,902.91 1393.01,904.43 1394.79,902.89" fill="#0c1a24" fill-opacity="0.045"/>
<polygon points="1393.01,883.53 1391.59,885.19 1391.59,906.09 1393.01,904.43" fill="#0c1a24" fill-opacity="0.045"/>
<polygon points="1393.01,889.99 1391.59,891.65 1391.59,906.09 1393.01,904.43" fill="#0c1a24" fill-opacity="0.045"/>
<polygon points="1393.01,895.31 1391.59,896.97 1391.59,906.09 1393.01,904.43" fill="#0c1a24" fill-opacity="0.045"/>
<polygon points="1393.01,899.87 1391.59,901.53 1391.59,906.09 1393.01,904.43" fill="#0c1a24" fill-opacity="0.045"/>
<polygon points="1393.01,902.91 1391.59,904.57 1391.59,906.09 1393.01,904.43" fill="#0c1a24" fill-opacity="0.045"/>
<polygon points="1391.59,885.19 1390.56,886.94 1390.56,907.84 1391.59,906.09" fill="#0c1a24" fill-opacity="0.045"/>
<polygon points="1391.59,891.65 1390.56,893.40 1390.56,907.84 1391.59,906.09" fill="#0c1a24" fill-opacity="0.045"/>
<polygon points="1391.59,896.97 1390.56,898.72 1390.56,907.84 1391.59,906.09" fill="#0c1a24" fill-opacity="0.045"/>
<polygon points="1391.59,901.53 1390.56,903.28 1390.56,907.84 1391.59,906.09" fill="#0c1a24" fill-opacity="0.045"/>
<polygon points="1391.59,904.57 1390.56,906.32 1390.56,907.84 1391.59,906.09" fill="#0c1a24" fill-opacity="0.045"/>
<polygon points="1390.56,886.94 1389.93,888.75 1389.93,909.65 1390.56,907.84" fill="#0c1a24" fill-opacity="0.045"/>
<polygon points="1390.56,893.40 1389.93,895.21 1389.93,909.65 1390.56,907.84" fill="#0c1a24" fill-opacity="0.045"/>
<polygon points="1390.56,898.72 1389.93,900.53 1389.93,909.65 1390.56,907.84" fill="#0c1a24" fill-opacity="0.045"/>
<polygon points="1390.56,903.28 1389.93,905.09 1389.93,909.65 1390.56,907.84" fill="#0c1a24" fill-opacity="0.045"/>
<polygon points="1390.56,906.32 1389.93,908.13 1389.93,909.65 1390.56,907.84" fill="#0c1a24" fill-opacity="0.045"/>
<polygon points="1389.93,888.75 1389.72,890.60 1389.72,911.50 1389.93,909.65" fill="#0c1a24" fill-opacity="0.045"/>
<polygon points="1389.93,895.21 1389.72,897.06 1389.72,911.50 1389.93,909.65" fill="#0c1a24" fill-opacity="0.045"/>
<polygon points="1389.93,900.53 1389.72,902.38 1389.72,911.50 1389.93,909.65" fill="#0c1a24" fill-opacity="0.045"/>
<polygon points="1389.93,905.09 1389.72,906.94 1389.72,911.50 1389.93,909.65" fill="#0c1a24" fill-opacity="0.045"/>
<polygon points="1389.93,908.13 1389.72,909.98 1389.72,911.50 1389.93,909.65" fill="#0c1a24" fill-opacity="0.045"/>
<polygon points="1579.88,1012.10 1579.67,1013.95 1579.67,1034.85 1579.88,1033.00" fill="#0c1a24" fill-opacity="0.045"/>
<polygon points="1579.88,1018.56 1579.67,1020.41 1579.67,1034.85 1579.88,1033.00" fill="#0c1a24" fill-opacity="0.045"/>
<polygon points="1579.88,1023.88 1579.67,1025.73 1579.67,1034.85 1579.88,1033.00" fill="#0c1a24" fill-opacity="0.045"/>
<polygon points="1579.88,1028.44 1579.67,1030.29 1579.67,1034.85 1579.88,1033.00" fill="#0c1a24" fill-opacity="0.045"/>
<polygon points="1579.88,1031.48 1579.67,1033.33 1579.67,1034.85 1579.88,1033.00" fill="#0c1a24" fill-opacity="0.045"/>
<polygon points="1579.67,1013.95 1579.04,1015.76 1579.04,1036.66 1579.67,1034.85" fill="#0c1a24" fill-opacity="0.045"/>
<polygon points="1579.67,1020.41 1579.04,1022.22 1579.04,1036.66 1579.67,1034.85" fill="#0c1a24" fill-opacity="0.045"/>
<polygon points="1579.67,1025.73 1579.04,1027.54 1579.04,1036.66 1579.67,1034.85" fill="#0c1a24" fill-opacity="0.045"/>
<polygon points="1579.67,1030.29 1579.04,1032.10 1579.04,1036.66 1579.67,1034.85" fill="#0c1a24" fill-opacity="0.045"/>
<polygon points="1579.67,1033.33 1579.04,1035.14 1579.04,1036.66 1579.67,1034.85" fill="#0c1a24" fill-opacity="0.045"/>
<polygon points="1579.04,1015.76 1578.01,1017.51 1578.01,1038.41 1579.04,1036.66" fill="#0c1a24" fill-opacity="0.045"/>
<polygon points="1579.04,1022.22 1578.01,1023.97 1578.01,1038.41 1579.04,1036.66" fill="#0c1a24" fill-opacity="0.045"/>
<polygon points="1579.04,1027.54 1578.01,1029.29 1578.01,1038.41 1579.04,1036.66" fill="#0c1a24" fill-opacity="0.045"/>
<polygon points="1579.04,1032.10 1578.01,1033.85 1578.01,1038.41 1579.04,1036.66" fill="#0c1a24" fill-opacity="0.045"/>
<polygon points="1579.04,1035.14 1578.01,1036.89 1578.01,1038.41 1579.04,1036.66" fill="#0c1a24" fill-opacity="0.045"/>
<polygon points="1578.01,1017.51 1576.59,1019.17 1576.59,1040.07 1578.01,1038.41" fill="#0c1a24" fill-opacity="0.045"/>
<polygon points="1578.01,1023.97 1576.59,1025.63 1576.59,1040.07 1578.01,1038.41" fill="#0c1a24" fill-opacity="0.045"/>
<polygon points="1578.01,1029.29 1576.59,1030.95 1576.59,1040.07 1578.01,1038.41" fill="#0c1a24" fill-opacity="0.045"/>
<polygon points="1578.01,1033.85 1576.59,1035.51 1576.59,1040.07 1578.01,1038.41" fill="#0c1a24" fill-opacity="0.045"/>
<polygon points="1578.01,1036.89 1576.59,1038.55 1576.59,1040.07 1578.01,1038.41" fill="#0c1a24" fill-opacity="0.045"/>
<polygon points="1277.51,1191.85 1274.64,1192.67 1274.64,1213.57 1277.51,1212.75" fill="#0c1a24" fill-opacity="0.045"/>
<polygon points="1277.51,1198.31 1274.64,1199.13 1274.64,1213.57 1277.51,1212.75" fill="#0c1a24" fill-opacity="0.045"/>
<polygon points="1277.51,1203.63 1274.64,1204.45 1274.64,1213.57 1277.51,1212.75" fill="#0c1a24" fill-opacity="0.045"/>
<polygon points="1277.51,1208.19 1274.64,1209.01 1274.64,1213.57 1277.51,1212.75" fill="#0c1a24" fill-opacity="0.045"/>
<polygon points="1277.51,1211.23 1274.64,1212.05 1274.64,1213.57 1277.51,1212.75" fill="#0c1a24" fill-opacity="0.045"/>
<polygon points="1274.64,1192.67 1271.60,1193.26 1271.60,1214.16 1274.64,1213.57" fill="#0c1a24" fill-opacity="0.045"/>
<polygon points="1274.64,1199.13 1271.60,1199.72 1271.60,1214.16 1274.64,1213.57" fill="#0c1a24" fill-opacity="0.045"/>
<polygon points="1274.64,1204.45 1271.60,1205.04 1271.60,1214.16 1274.64,1213.57" fill="#0c1a24" fill-opacity="0.045"/>
<polygon points="1274.64,1209.01 1271.60,1209.60 1271.60,1214.16 1274.64,1213.57" fill="#0c1a24" fill-opacity="0.045"/>
<polygon points="1274.64,1212.05 1271.60,1212.64 1271.60,1214.16 1274.64,1213.57" fill="#0c1a24" fill-opacity="0.045"/>
<polygon points="1271.60,1193.26 1268.46,1193.62 1268.46,1214.52 1271.60,1214.16" fill="#0c1a24" fill-opacity="0.045"/>
<polygon points="1271.60,1199.72 1268.46,1200.08 1268.46,1214.52 1271.60,1214.16" fill="#0c1a24" fill-opacity="0.045"/>
<polygon points="1271.60,1205.04 1268.46,1205.40 1268.46,1214.52 1271.60,1214.16" fill="#0c1a24" fill-opacity="0.045"/>
<polygon points="1271.60,1209.60 1268.46,1209.96 1268.46,1214.52 1271.60,1214.16" fill="#0c1a24" fill-opacity="0.045"/>
<polygon points="1271.60,1212.64 1268.46,1213.00 1268.46,1214.52 1271.60,1214.16" fill="#0c1a24" fill-opacity="0.045"/>
<polygon points="1268.46,1193.62 1265.26,1193.74 1265.26,1214.64 1268.46,1214.52" fill="#0c1a24" fill-opacity="0.045"/>
<polygon points="1268.46,1200.08 1265.26,1200.20 1265.26,1214.64 1268.46,1214.52" fill="#0c1a24" fill-opacity="0.045"/>
<polygon points="1268.46,1205.40 1265.26,1205.52 1265.26,1214.64 1268.46,1214.52" fill="#0c1a24" fill-opacity="0.045"/>
<polygon points="1268.46,1209.96 1265.26,1210.08 1265.26,1214.64 1268.46,1214.52" fill="#0c1a24" fill-opacity="0.045"/>
<polygon points="1268.46,1213.00 1265.26,1213.12 1265.26,1214.64 1268.46,1214.52" fill="#0c1a24" fill-opacity="0.045"/>
<polygon points="1265.26,1193.74 1262.07,1193.62 1262.07,1214.52 1265.26,1214.64" fill="#0c1a24" fill-opacity="0.045"/>
<polygon points="1265.26,1200.20 1262.07,1200.08 1262.07,1214.52 1265.26,1214.64" fill="#0c1a24" fill-opacity="0.045"/>
<polygon points="1265.26,1205.52 1262.07,1205.40 1262.07,1214.52 1265.26,1214.64" fill="#0c1a24" fill-opacity="0.045"/>
<polygon points="1265.26,1210.08 1262.07,1209.96 1262.07,1214.52 1265.26,1214.64" fill="#0c1a24" fill-opacity="0.045"/>
<polygon points="1265.26,1213.12 1262.07,1213.00 1262.07,1214.52 1265.26,1214.64" fill="#0c1a24" fill-opacity="0.045"/>
<polygon points="1262.07,1193.62 1258.92,1193.26 1258.92,1214.16 1262.07,1214.52" fill="#0c1a24" fill-opacity="0.045"/>
<polygon points="1262.07,1200.08 1258.92,1199.72 1258.92,1214.16 1262.07,1214.52" fill="#0c1a24" fill-opacity="0.045"/>
<polygon points="1262.07,1205.40 1258.92,1205.04 1258.92,1214.16 1262.07,1214.52" fill="#0c1a24" fill-opacity="0.045"/>
<polygon points="1262.07,1209.96 1258.92,1209.60 1258.92,1214.16 1262.07,1214.52" fill="#0c1a24" fill-opacity="0.045"/>
<polygon points="1262.07,1213.00 1258.92,1212.64 1258.92,1214.16 1262.07,1214.52" fill="#0c1a24" fill-opacity="0.045"/>
<polygon points="1258.92,1193.26 1255.89,1192.67 1255.89,1213.57 1258.92,1214.16" fill="#0c1a24" fill-opacity="0.045"/>
<polygon points="1258.92,1199.72 1255.89,1199.13 1255.89,1213.57 1258.92,1214.16" fill="#0c1a24" fill-opacity="0.045"/>
<polygon points="1258.92,1205.04 1255.89,1204.45 1255.89,1213.57 1258.92,1214.16" fill="#0c1a24" fill-opacity="0.045"/>
<polygon points="1258.92,1209.60 1255.89,1209.01 1255.89,1213.57 1258.92,1214.16" fill="#0c1a24" fill-opacity="0.045"/>
<polygon points="1258.92,1212.64 1255.89,1212.05 1255.89,1213.57 1258.92,1214.16" fill="#0c1a24" fill-opacity="0.045"/>
<polygon points="1255.89,1192.67 1253.02,1191.85 1253.02,1212.75 1255.89,1213.57" fill="#0c1a24" fill-opacity="0.045"/>
<polygon points="1255.89,1199.13 1253.02,1198.31 1253.02,1212.75 1255.89,1213.57" fill="#0c1a24" fill-opacity="0.045"/>
<polygon points="1255.89,1204.45 1253.02,1203.63 1253.02,1212.75 1255.89,1213.57" fill="#0c1a24" fill-opacity="0.045"/>
<polygon points="1255.89,1209.01 1253.02,1208.19 1253.02,1212.75 1255.89,1213.57" fill="#0c1a24" fill-opacity="0.045"/>
<polygon points="1255.89,1212.05 1253.02,1211.23 1253.02,1212.75 1255.89,1213.57" fill="#0c1a24" fill-opacity="0.045"/>
<polygon points="1253.02,1191.85 1250.35,1190.82 1250.35,1211.72 1253.02,1212.75" fill="#0c1a24" fill-opacity="0.045"/>
<polygon points="1253.02,1198.31 1250.35,1197.28 1250.35,1211.72 1253.02,1212.75" fill="#0c1a24" fill-opacity="0.045"/>
<polygon points="1253.02,1203.63 1250.35,1202.60 1250.35,1211.72 1253.02,1212.75" fill="#0c1a24" fill-opacity="0.045"/>
<polygon points="1253.02,1208.19 1250.35,1207.16 1250.35,1211.72 1253.02,1212.75" fill="#0c1a24" fill-opacity="0.045"/>
<polygon points="1253.02,1211.23 1250.35,1210.20 1250.35,1211.72 1253.02,1212.75" fill="#0c1a24" fill-opacity="0.045"/>
<polygon points="1250.35,1190.82 1247.94,1189.60 1247.94,1210.50 1250.35,1211.72" fill="#0c1a24" fill-opacity="0.045"/>
<polygon points="1250.35,1197.28 1247.94,1196.06 1247.94,1210.50 1250.35,1211.72" fill="#0c1a24" fill-opacity="0.045"/>
<polygon points="1250.35,1202.60 1247.94,1201.38 1247.94,1210.50 1250.35,1211.72" fill="#0c1a24" fill-opacity="0.045"/>
<polygon points="1250.35,1207.16 1247.94,1205.94 1247.94,1210.50 1250.35,1211.72" fill="#0c1a24" fill-opacity="0.045"/>
<polygon points="1250.35,1210.20 1247.94,1208.98 1247.94,1210.50 1250.35,1211.72" fill="#0c1a24" fill-opacity="0.045"/>
<polygon points="1247.94,1189.60 1072.14,1088.10 1072.14,1109.00 1247.94,1210.50" fill="#0c1a24" fill-opacity="0.045"/>
<polygon points="1247.94,1196.06 1072.14,1094.56 1072.14,1109.00 1247.94,1210.50" fill="#0c1a24" fill-opacity="0.045"/>
<polygon points="1247.94,1201.38 1072.14,1099.88 1072.14,1109.00 1247.94,1210.50" fill="#0c1a24" fill-opacity="0.045"/>
<polygon points="1247.94,1205.94 1072.14,1104.44 1072.14,1109.00 1247.94,1210.50" fill="#0c1a24" fill-opacity="0.045"/>
<polygon points="1247.94,1208.98 1072.14,1107.48 1072.14,1109.00 1247.94,1210.50" fill="#0c1a24" fill-opacity="0.045"/>
<polygon points="1072.14,1088.10 1069.73,1086.88 1069.73,1107.78 1072.14,1109.00" fill="#0c1a24" fill-opacity="0.045"/>
<polygon points="1072.14,1094.56 1069.73,1093.34 1069.73,1107.78 1072.14,1109.00" fill="#0c1a24" fill-opacity="0.045"/>
<polygon points="1072.14,1099.88 1069.73,1098.66 1069.73,1107.78 1072.14,1109.00" fill="#0c1a24" fill-opacity="0.045"/>
<polygon points="1072.14,1104.44 1069.73,1103.22 1069.73,1107.78 1072.14,1109.00" fill="#0c1a24" fill-opacity="0.045"/>
<polygon points="1072.14,1107.48 1069.73,1106.26 1069.73,1107.78 1072.14,1109.00" fill="#0c1a24" fill-opacity="0.045"/>
<polygon points="1069.73,1086.88 1067.07,1085.85 1067.07,1106.75 1069.73,1107.78" fill="#0c1a24" fill-opacity="0.045"/>
<polygon points="1069.73,1093.34 1067.07,1092.31 1067.07,1106.75 1069.73,1107.78" fill="#0c1a24" fill-opacity="0.045"/>
<polygon points="1069.73,1098.66 1067.07,1097.63 1067.07,1106.75 1069.73,1107.78" fill="#0c1a24" fill-opacity="0.045"/>
<polygon points="1069.73,1103.22 1067.07,1102.19 1067.07,1106.75 1069.73,1107.78" fill="#0c1a24" fill-opacity="0.045"/>
<polygon points="1069.73,1106.26 1067.07,1105.23 1067.07,1106.75 1069.73,1107.78" fill="#0c1a24" fill-opacity="0.045"/>
<polygon points="1067.07,1085.85 1064.19,1085.03 1064.19,1105.93 1067.07,1106.75" fill="#0c1a24" fill-opacity="0.045"/>
<polygon points="1067.07,1092.31 1064.19,1091.49 1064.19,1105.93 1067.07,1106.75" fill="#0c1a24" fill-opacity="0.045"/>
<polygon points="1067.07,1097.63 1064.19,1096.81 1064.19,1105.93 1067.07,1106.75" fill="#0c1a24" fill-opacity="0.045"/>
<polygon points="1067.07,1102.19 1064.19,1101.37 1064.19,1105.93 1067.07,1106.75" fill="#0c1a24" fill-opacity="0.045"/>
<polygon points="1067.07,1105.23 1064.19,1104.41 1064.19,1105.93 1067.07,1106.75" fill="#0c1a24" fill-opacity="0.045"/>
<polygon points="1064.19,1085.03 1061.16,1084.44 1061.16,1105.34 1064.19,1105.93" fill="#0c1a24" fill-opacity="0.045"/>
<polygon points="1064.19,1091.49 1061.16,1090.90 1061.16,1105.34 1064.19,1105.93" fill="#0c1a24" fill-opacity="0.045"/>
<polygon points="1064.19,1096.81 1061.16,1096.22 1061.16,1105.34 1064.19,1105.93" fill="#0c1a24" fill-opacity="0.045"/>
<polygon points="1064.19,1101.37 1061.16,1100.78 1061.16,1105.34 1064.19,1105.93" fill="#0c1a24" fill-opacity="0.045"/>
<polygon points="1064.19,1104.41 1061.16,1103.82 1061.16,1105.34 1064.19,1105.93" fill="#0c1a24" fill-opacity="0.045"/>
<polygon points="1061.16,1084.44 1058.02,1084.08 1058.02,1104.98 1061.16,1105.34" fill="#0c1a24" fill-opacity="0.045"/>
<polygon points="1061.16,1090.90 1058.02,1090.54 1058.02,1104.98 1061.16,1105.34" fill="#0c1a24" fill-opacity="0.045"/>
<polygon points="1061.16,1096.22 1058.02,1095.86 1058.02,1104.98 1061.16,1105.34" fill="#0c1a24" fill-opacity="0.045"/>
<polygon points="1061.16,1100.78 1058.02,1100.42 1058.02,1104.98 1061.16,1105.34" fill="#0c1a24" fill-opacity="0.045"/>
<polygon points="1061.16,1103.82 1058.02,1103.46 1058.02,1104.98 1061.16,1105.34" fill="#0c1a24" fill-opacity="0.045"/>
<polygon points="1058.02,1084.08 1054.82,1083.96 1054.82,1104.86 1058.02,1104.98" fill="#0c1a24" fill-opacity="0.045"/>
<polygon points="1058.02,1090.54 1054.82,1090.42 1054.82,1104.86 1058.02,1104.98" fill="#0c1a24" fill-opacity="0.045"/>
<polygon points="1058.02,1095.86 1054.82,1095.74 1054.82,1104.86 1058.02,1104.98" fill="#0c1a24" fill-opacity="0.045"/>
<polygon points="1058.02,1100.42 1054.82,1100.30 1054.82,1104.86 1058.02,1104.98" fill="#0c1a24" fill-opacity="0.045"/>
<polygon points="1058.02,1103.46 1054.82,1103.34 1054.82,1104.86 1058.02,1104.98" fill="#0c1a24" fill-opacity="0.045"/>
<polygon points="1054.82,1083.96 1051.62,1084.08 1051.62,1104.98 1054.82,1104.86" fill="#0c1a24" fill-opacity="0.045"/>
<polygon points="1054.82,1090.42 1051.62,1090.54 1051.62,1104.98 1054.82,1104.86" fill="#0c1a24" fill-opacity="0.045"/>
<polygon points="1054.82,1095.74 1051.62,1095.86 1051.62,1104.98 1054.82,1104.86" fill="#0c1a24" fill-opacity="0.045"/>
<polygon points="1054.82,1100.30 1051.62,1100.42 1051.62,1104.98 1054.82,1104.86" fill="#0c1a24" fill-opacity="0.045"/>
<polygon points="1054.82,1103.34 1051.62,1103.46 1051.62,1104.98 1054.82,1104.86" fill="#0c1a24" fill-opacity="0.045"/>
<polygon points="1051.62,1084.08 1048.48,1084.44 1048.48,1105.34 1051.62,1104.98" fill="#0c1a24" fill-opacity="0.045"/>
<polygon points="1051.62,1090.54 1048.48,1090.90 1048.48,1105.34 1051.62,1104.98" fill="#0c1a24" fill-opacity="0.045"/>
<polygon points="1051.62,1095.86 1048.48,1096.22 1048.48,1105.34 1051.62,1104.98" fill="#0c1a24" fill-opacity="0.045"/>
<polygon points="1051.62,1100.42 1048.48,1100.78 1048.48,1105.34 1051.62,1104.98" fill="#0c1a24" fill-opacity="0.045"/>
<polygon points="1051.62,1103.46 1048.48,1103.82 1048.48,1105.34 1051.62,1104.98" fill="#0c1a24" fill-opacity="0.045"/>
<polygon points="1048.48,1084.44 1045.45,1085.03 1045.45,1105.93 1048.48,1105.34" fill="#0c1a24" fill-opacity="0.045"/>
<polygon points="1048.48,1090.90 1045.45,1091.49 1045.45,1105.93 1048.48,1105.34" fill="#0c1a24" fill-opacity="0.045"/>
<polygon points="1048.48,1096.22 1045.45,1096.81 1045.45,1105.93 1048.48,1105.34" fill="#0c1a24" fill-opacity="0.045"/>
<polygon points="1048.48,1100.78 1045.45,1101.37 1045.45,1105.93 1048.48,1105.34" fill="#0c1a24" fill-opacity="0.045"/>
<polygon points="1048.48,1103.82 1045.45,1104.41 1045.45,1105.93 1048.48,1105.34" fill="#0c1a24" fill-opacity="0.045"/>
<polygon points="1045.45,1085.03 1042.57,1085.85 1042.57,1106.75 1045.45,1105.93" fill="#0c1a24" fill-opacity="0.045"/>
<polygon points="1045.45,1091.49 1042.57,1092.31 1042.57,1106.75 1045.45,1105.93" fill="#0c1a24" fill-opacity="0.045"/>
<polygon points="1045.45,1096.81 1042.57,1097.63 1042.57,1106.75 1045.45,1105.93" fill="#0c1a24" fill-opacity="0.045"/>
<polygon points="1045.45,1101.37 1042.57,1102.19 1042.57,1106.75 1045.45,1105.93" fill="#0c1a24" fill-opacity="0.045"/>
<polygon points="1045.45,1104.41 1042.57,1105.23 1042.57,1106.75 1045.45,1105.93" fill="#0c1a24" fill-opacity="0.045"/>
<polygon points="1042.57,1085.85 1039.91,1086.88 1039.91,1107.78 1042.57,1106.75" fill="#0c1a24" fill-opacity="0.045"/>
<polygon points="1042.57,1092.31 1039.91,1093.34 1039.91,1107.78 1042.57,1106.75" fill="#0c1a24" fill-opacity="0.045"/>
<polygon points="1042.57,1097.63 1039.91,1098.66 1039.91,1107.78 1042.57,1106.75" fill="#0c1a24" fill-opacity="0.045"/>
<polygon points="1042.57,1102.19 1039.91,1103.22 1039.91,1107.78 1042.57,1106.75" fill="#0c1a24" fill-opacity="0.045"/>
<polygon points="1042.57,1105.23 1039.91,1106.26 1039.91,1107.78 1042.57,1106.75" fill="#0c1a24" fill-opacity="0.045"/>
<polygon points="1039.91,1086.88 1037.50,1088.10 1037.50,1109.00 1039.91,1107.78" fill="#0c1a24" fill-opacity="0.045"/>
<polygon points="1039.91,1093.34 1037.50,1094.56 1037.50,1109.00 1039.91,1107.78" fill="#0c1a24" fill-opacity="0.045"/>
<polygon points="1039.91,1098.66 1037.50,1099.88 1037.50,1109.00 1039.91,1107.78" fill="#0c1a24" fill-opacity="0.045"/>
<polygon points="1039.91,1103.22 1037.50,1104.44 1037.50,1109.00 1039.91,1107.78" fill="#0c1a24" fill-opacity="0.045"/>
<polygon points="1039.91,1106.26 1037.50,1107.48 1037.50,1109.00 1039.91,1107.78" fill="#0c1a24" fill-opacity="0.045"/>
<polygon points="1037.50,1088.10 937.91,1145.60 937.91,1166.50 1037.50,1109.00" fill="#0c1a24" fill-opacity="0.045"/>
<polygon points="1037.50,1094.56 937.91,1152.06 937.91,1166.50 1037.50,1109.00" fill="#0c1a24" fill-opacity="0.045"/>
<polygon points="1037.50,1099.88 937.91,1157.38 937.91,1166.50 1037.50,1109.00" fill="#0c1a24" fill-opacity="0.045"/>
<polygon points="1037.50,1104.44 937.91,1161.94 937.91,1166.50 1037.50,1109.00" fill="#0c1a24" fill-opacity="0.045"/>
<polygon points="1037.50,1107.48 937.91,1164.98 937.91,1166.50 1037.50,1109.00" fill="#0c1a24" fill-opacity="0.045"/>
<polygon points="937.91,1145.60 935.79,1146.99 935.79,1167.89 937.91,1166.50" fill="#0c1a24" fill-opacity="0.045"/>
<polygon points="937.91,1152.06 935.79,1153.45 935.79,1167.89 937.91,1166.50" fill="#0c1a24" fill-opacity="0.045"/>
<polygon points="937.91,1157.38 935.79,1158.77 935.79,1167.89 937.91,1166.50" fill="#0c1a24" fill-opacity="0.045"/>
<polygon points="937.91,1161.94 935.79,1163.33 935.79,1167.89 937.91,1166.50" fill="#0c1a24" fill-opacity="0.045"/>
<polygon points="937.91,1164.98 935.79,1166.37 935.79,1167.89 937.91,1166.50" fill="#0c1a24" fill-opacity="0.045"/>
<polygon points="935.79,1146.99 934.01,1148.53 934.01,1169.43 935.79,1167.89" fill="#0c1a24" fill-opacity="0.045"/>
<polygon points="935.79,1153.45 934.01,1154.99 934.01,1169.43 935.79,1167.89" fill="#0c1a24" fill-opacity="0.045"/>
<polygon points="935.79,1158.77 934.01,1160.31 934.01,1169.43 935.79,1167.89" fill="#0c1a24" fill-opacity="0.045"/>
<polygon points="935.79,1163.33 934.01,1164.87 934.01,1169.43 935.79,1167.89" fill="#0c1a24" fill-opacity="0.045"/>
<polygon points="935.79,1166.37 934.01,1167.91 934.01,1169.43 935.79,1167.89" fill="#0c1a24" fill-opacity="0.045"/>
<polygon points="934.01,1148.53 932.60,1150.19 932.60,1171.09 934.01,1169.43" fill="#0c1a24" fill-opacity="0.045"/>
<polygon points="934.01,1154.99 932.60,1156.65 932.60,1171.09 934.01,1169.43" fill="#0c1a24" fill-opacity="0.045"/>
<polygon points="934.01,1160.31 932.60,1161.97 932.60,1171.09 934.01,1169.43" fill="#0c1a24" fill-opacity="0.045"/>
<polygon points="934.01,1164.87 932.60,1166.53 932.60,1171.09 934.01,1169.43" fill="#0c1a24" fill-opacity="0.045"/>
<polygon points="934.01,1167.91 932.60,1169.57 932.60,1171.09 934.01,1169.43" fill="#0c1a24" fill-opacity="0.045"/>
<polygon points="932.60,1150.19 931.57,1151.94 931.57,1172.84 932.60,1171.09" fill="#0c1a24" fill-opacity="0.045"/>
<polygon points="932.60,1156.65 931.57,1158.40 931.57,1172.84 932.60,1171.09" fill="#0c1a24" fill-opacity="0.045"/>
<polygon points="932.60,1161.97 931.57,1163.72 931.57,1172.84 932.60,1171.09" fill="#0c1a24" fill-opacity="0.045"/>
<polygon points="932.60,1166.53 931.57,1168.28 931.57,1172.84 932.60,1171.09" fill="#0c1a24" fill-opacity="0.045"/>
<polygon points="932.60,1169.57 931.57,1171.32 931.57,1172.84 932.60,1171.09" fill="#0c1a24" fill-opacity="0.045"/>
<polygon points="931.57,1151.94 930.94,1153.75 930.94,1174.65 931.57,1172.84" fill="#0c1a24" fill-opacity="0.045"/>
<polygon points="931.57,1158.40 930.94,1160.21 930.94,1174.65 931.57,1172.84" fill="#0c1a24" fill-opacity="0.045"/>
<polygon points="931.57,1163.72 930.94,1165.53 930.94,1174.65 931.57,1172.84" fill="#0c1a24" fill-opacity="0.045"/>
<polygon points="931.57,1168.28 930.94,1170.09 930.94,1174.65 931.57,1172.84" fill="#0c1a24" fill-opacity="0.045"/>
<polygon points="931.57,1171.32 930.94,1173.13 930.94,1174.65 931.57,1172.84" fill="#0c1a24" fill-opacity="0.045"/>
<polygon points="930.94,1153.75 930.73,1155.60 930.73,1176.50 930.94,1174.65" fill="#0c1a24" fill-opacity="0.045"/>
<polygon points="930.94,1160.21 930.73,1162.06 930.73,1176.50 930.94,1174.65" fill="#0c1a24" fill-opacity="0.045"/>
<polygon points="930.94,1165.53 930.73,1167.38 930.73,1176.50 930.94,1174.65" fill="#0c1a24" fill-opacity="0.045"/>
<polygon points="930.94,1170.09 930.73,1171.94 930.73,1176.50 930.94,1174.65" fill="#0c1a24" fill-opacity="0.045"/>
<polygon points="930.94,1173.13 930.73,1174.98 930.73,1176.50 930.94,1174.65" fill="#0c1a24" fill-opacity="0.045"/>
<polygon points="1120.88,1277.10 1120.67,1278.95 1120.67,1299.85 1120.88,1298.00" fill="#0c1a24" fill-opacity="0.045"/>
<polygon points="1120.88,1283.56 1120.67,1285.41 1120.67,1299.85 1120.88,1298.00" fill="#0c1a24" fill-opacity="0.045"/>
<polygon points="1120.88,1288.88 1120.67,1290.73 1120.67,1299.85 1120.88,1298.00" fill="#0c1a24" fill-opacity="0.045"/>
<polygon points="1120.88,1293.44 1120.67,1295.29 1120.67,1299.85 1120.88,1298.00" fill="#0c1a24" fill-opacity="0.045"/>
<polygon points="1120.88,1296.48 1120.67,1298.33 1120.67,1299.85 1120.88,1298.00" fill="#0c1a24" fill-opacity="0.045"/>
<polygon points="1120.67,1278.95 1120.05,1280.76 1120.05,1301.66 1120.67,1299.85" fill="#0c1a24" fill-opacity="0.045"/>
<polygon points="1120.67,1285.41 1120.05,1287.22 1120.05,1301.66 1120.67,1299.85" fill="#0c1a24" fill-opacity="0.045"/>
<polygon points="1120.67,1290.73 1120.05,1292.54 1120.05,1301.66 1120.67,1299.85" fill="#0c1a24" fill-opacity="0.045"/>
<polygon points="1120.67,1295.29 1120.05,1297.10 1120.05,1301.66 1120.67,1299.85" fill="#0c1a24" fill-opacity="0.045"/>
<polygon points="1120.67,1298.33 1120.05,1300.14 1120.05,1301.66 1120.67,1299.85" fill="#0c1a24" fill-opacity="0.045"/>
<polygon points="1120.05,1280.76 1119.02,1282.51 1119.02,1303.41 1120.05,1301.66" fill="#0c1a24" fill-opacity="0.045"/>
<polygon points="1120.05,1287.22 1119.02,1288.97 1119.02,1303.41 1120.05,1301.66" fill="#0c1a24" fill-opacity="0.045"/>
<polygon points="1120.05,1292.54 1119.02,1294.29 1119.02,1303.41 1120.05,1301.66" fill="#0c1a24" fill-opacity="0.045"/>
<polygon points="1120.05,1297.10 1119.02,1298.85 1119.02,1303.41 1120.05,1301.66" fill="#0c1a24" fill-opacity="0.045"/>
<polygon points="1120.05,1300.14 1119.02,1301.89 1119.02,1303.41 1120.05,1301.66" fill="#0c1a24" fill-opacity="0.045"/>
<polygon points="1119.02,1282.51 1117.60,1284.17 1117.60,1305.07 1119.02,1303.41" fill="#0c1a24" fill-opacity="0.045"/>
<polygon points="1119.02,1288.97 1117.60,1290.63 1117.60,1305.07 1119.02,1303.41" fill="#0c1a24" fill-opacity="0.045"/>
<polygon points="1119.02,1294.29 1117.60,1295.95 1117.60,1305.07 1119.02,1303.41" fill="#0c1a24" fill-opacity="0.045"/>
<polygon points="1119.02,1298.85 1117.60,1300.51 1117.60,1305.07 1119.02,1303.41" fill="#0c1a24" fill-opacity="0.045"/>
<polygon points="1119.02,1301.89 1117.60,1303.55 1117.60,1305.07 1119.02,1303.41" fill="#0c1a24" fill-opacity="0.045"/>
<polygon points="753.69,886.10 753.48,884.25 753.48,905.15 753.69,907.00" fill="#0c1a24" fill-opacity="0.045"/>
<polygon points="753.69,892.56 753.48,890.71 753.48,905.15 753.69,907.00" fill="#0c1a24" fill-opacity="0.045"/>
<polygon points="753.69,897.88 753.48,896.03 753.48,905.15 753.69,907.00" fill="#0c1a24" fill-opacity="0.045"/>
<polygon points="753.69,902.44 753.48,900.59 753.48,905.15 753.69,907.00" fill="#0c1a24" fill-opacity="0.045"/>
<polygon points="753.69,905.48 753.48,903.63 753.48,905.15 753.69,907.00" fill="#0c1a24" fill-opacity="0.045"/>
<polygon points="753.48,884.25 752.85,882.44 752.85,903.34 753.48,905.15" fill="#0c1a24" fill-opacity="0.045"/>
<polygon points="753.48,890.71 752.85,888.90 752.85,903.34 753.48,905.15" fill="#0c1a24" fill-opacity="0.045"/>
<polygon points="753.48,896.03 752.85,894.22 752.85,903.34 753.48,905.15" fill="#0c1a24" fill-opacity="0.045"/>
<polygon points="753.48,900.59 752.85,898.78 752.85,903.34 753.48,905.15" fill="#0c1a24" fill-opacity="0.045"/>
<polygon points="753.48,903.63 752.85,901.82 752.85,903.34 753.48,905.15" fill="#0c1a24" fill-opacity="0.045"/>
<polygon points="752.85,882.44 751.82,880.69 751.82,901.59 752.85,903.34" fill="#0c1a24" fill-opacity="0.045"/>
<polygon points="752.85,888.90 751.82,887.15 751.82,901.59 752.85,903.34" fill="#0c1a24" fill-opacity="0.045"/>
<polygon points="752.85,894.22 751.82,892.47 751.82,901.59 752.85,903.34" fill="#0c1a24" fill-opacity="0.045"/>
<polygon points="752.85,898.78 751.82,897.03 751.82,901.59 752.85,903.34" fill="#0c1a24" fill-opacity="0.045"/>
<polygon points="752.85,901.82 751.82,900.07 751.82,901.59 752.85,903.34" fill="#0c1a24" fill-opacity="0.045"/>
<polygon points="751.82,880.69 750.41,879.03 750.41,899.93 751.82,901.59" fill="#0c1a24" fill-opacity="0.045"/>
<polygon points="751.82,887.15 750.41,885.49 750.41,899.93 751.82,901.59" fill="#0c1a24" fill-opacity="0.045"/>
<polygon points="751.82,892.47 750.41,890.81 750.41,899.93 751.82,901.59" fill="#0c1a24" fill-opacity="0.045"/>
<polygon points="751.82,897.03 750.41,895.37 750.41,899.93 751.82,901.59" fill="#0c1a24" fill-opacity="0.045"/>
<polygon points="751.82,900.07 750.41,898.41 750.41,899.93 751.82,901.59" fill="#0c1a24" fill-opacity="0.045"/>
<polygon points="750.41,879.03 748.63,877.49 748.63,898.39 750.41,899.93" fill="#0c1a24" fill-opacity="0.045"/>
<polygon points="750.41,885.49 748.63,883.95 748.63,898.39 750.41,899.93" fill="#0c1a24" fill-opacity="0.045"/>
<polygon points="750.41,890.81 748.63,889.27 748.63,898.39 750.41,899.93" fill="#0c1a24" fill-opacity="0.045"/>
<polygon points="750.41,895.37 748.63,893.83 748.63,898.39 750.41,899.93" fill="#0c1a24" fill-opacity="0.045"/>
<polygon points="750.41,898.41 748.63,896.87 748.63,898.39 750.41,899.93" fill="#0c1a24" fill-opacity="0.045"/>
<polygon points="748.63,877.49 746.51,876.10 746.51,897.00 748.63,898.39" fill="#0c1a24" fill-opacity="0.045"/>
<polygon points="748.63,883.95 746.51,882.56 746.51,897.00 748.63,898.39" fill="#0c1a24" fill-opacity="0.045"/>
<polygon points="748.63,889.27 746.51,887.88 746.51,897.00 748.63,898.39" fill="#0c1a24" fill-opacity="0.045"/>
<polygon points="748.63,893.83 746.51,892.44 746.51,897.00 748.63,898.39" fill="#0c1a24" fill-opacity="0.045"/>
<polygon points="748.63,896.87 746.51,895.48 746.51,897.00 748.63,898.39" fill="#0c1a24" fill-opacity="0.045"/>
<polygon points="746.51,876.10 671.49,832.78 671.49,853.68 746.51,897.00" fill="#0c1a24" fill-opacity="0.045"/>
<polygon points="746.51,882.56 671.49,839.24 671.49,853.68 746.51,897.00" fill="#0c1a24" fill-opacity="0.045"/>
<polygon points="746.51,887.88 671.49,844.56 671.49,853.68 746.51,897.00" fill="#0c1a24" fill-opacity="0.045"/>
<polygon points="746.51,892.44 671.49,849.12 671.49,853.68 746.51,897.00" fill="#0c1a24" fill-opacity="0.045"/>
<polygon points="746.51,895.48 671.49,852.16 671.49,853.68 746.51,897.00" fill="#0c1a24" fill-opacity="0.045"/>
<polygon points="1213.55,620.60 1213.34,618.75 1213.34,639.65 1213.55,641.50" fill="#0c1a24" fill-opacity="0.045"/>
<polygon points="1213.55,627.06 1213.34,625.21 1213.34,639.65 1213.55,641.50" fill="#0c1a24" fill-opacity="0.045"/>
<polygon points="1213.55,632.38 1213.34,630.53 1213.34,639.65 1213.55,641.50" fill="#0c1a24" fill-opacity="0.045"/>
<polygon points="1213.55,636.94 1213.34,635.09 1213.34,639.65 1213.55,641.50" fill="#0c1a24" fill-opacity="0.045"/>
<polygon points="1213.55,639.98 1213.34,638.13 1213.34,639.65 1213.55,641.50" fill="#0c1a24" fill-opacity="0.045"/>
<polygon points="1213.34,618.75 1212.71,616.94 1212.71,637.84 1213.34,639.65" fill="#0c1a24" fill-opacity="0.045"/>
<polygon points="1213.34,625.21 1212.71,623.40 1212.71,637.84 1213.34,639.65" fill="#0c1a24" fill-opacity="0.045"/>
<polygon points="1213.34,630.53 1212.71,628.72 1212.71,637.84 1213.34,639.65" fill="#0c1a24" fill-opacity="0.045"/>
<polygon points="1213.34,635.09 1212.71,633.28 1212.71,637.84 1213.34,639.65" fill="#0c1a24" fill-opacity="0.045"/>
<polygon points="1213.34,638.13 1212.71,636.32 1212.71,637.84 1213.34,639.65" fill="#0c1a24" fill-opacity="0.045"/>
<polygon points="1212.71,616.94 1211.68,615.19 1211.68,636.09 1212.71,637.84" fill="#0c1a24" fill-opacity="0.045"/>
<polygon points="1212.71,623.40 1211.68,621.65 1211.68,636.09 1212.71,637.84" fill="#0c1a24" fill-opacity="0.045"/>
<polygon points="1212.71,628.72 1211.68,626.97 1211.68,636.09 1212.71,637.84" fill="#0c1a24" fill-opacity="0.045"/>
<polygon points="1212.71,633.28 1211.68,631.53 1211.68,636.09 1212.71,637.84" fill="#0c1a24" fill-opacity="0.045"/>
<polygon points="1212.71,636.32 1211.68,634.57 1211.68,636.09 1212.71,637.84" fill="#0c1a24" fill-opacity="0.045"/>
<polygon points="1211.68,615.19 1210.27,613.53 1210.27,634.43 1211.68,636.09" fill="#0c1a24" fill-opacity="0.045"/>
<polygon points="1211.68,621.65 1210.27,619.99 1210.27,634.43 1211.68,636.09" fill="#0c1a24" fill-opacity="0.045"/>
<polygon points="1211.68,626.97 1210.27,625.31 1210.27,634.43 1211.68,636.09" fill="#0c1a24" fill-opacity="0.045"/>
<polygon points="1211.68,631.53 1210.27,629.87 1210.27,634.43 1211.68,636.09" fill="#0c1a24" fill-opacity="0.045"/>
<polygon points="1211.68,634.57 1210.27,632.91 1210.27,634.43 1211.68,636.09" fill="#0c1a24" fill-opacity="0.045"/>
<polygon points="1210.27,613.53 1208.49,611.99 1208.49,632.89 1210.27,634.43" fill="#0c1a24" fill-opacity="0.045"/>
<polygon points="1210.27,619.99 1208.49,618.45 1208.49,632.89 1210.27,634.43" fill="#0c1a24" fill-opacity="0.045"/>
<polygon points="1210.27,625.31 1208.49,623.77 1208.49,632.89 1210.27,634.43" fill="#0c1a24" fill-opacity="0.045"/>
<polygon points="1210.27,629.87 1208.49,628.33 1208.49,632.89 1210.27,634.43" fill="#0c1a24" fill-opacity="0.045"/>
<polygon points="1210.27,632.91 1208.49,631.37 1208.49,632.89 1210.27,634.43" fill="#0c1a24" fill-opacity="0.045"/>
<polygon points="1208.49,611.99 1206.37,610.60 1206.37,631.50 1208.49,632.89" fill="#0c1a24" fill-opacity="0.045"/>
<polygon points="1208.49,618.45 1206.37,617.06 1206.37,631.50 1208.49,632.89" fill="#0c1a24" fill-opacity="0.045"/>
<polygon points="1208.49,623.77 1206.37,622.38 1206.37,631.50 1208.49,632.89" fill="#0c1a24" fill-opacity="0.045"/>
<polygon points="1208.49,628.33 1206.37,626.94 1206.37,631.50 1208.49,632.89" fill="#0c1a24" fill-opacity="0.045"/>
<polygon points="1208.49,631.37 1206.37,629.98 1206.37,631.50 1208.49,632.89" fill="#0c1a24" fill-opacity="0.045"/>
<polygon points="1206.37,610.60 1131.35,567.28 1131.35,588.18 1206.37,631.50" fill="#0c1a24" fill-opacity="0.045"/>
<polygon points="1206.37,617.06 1131.35,573.74 1131.35,588.18 1206.37,631.50" fill="#0c1a24" fill-opacity="0.045"/>
<polygon points="1206.37,622.38 1131.35,579.06 1131.35,588.18 1206.37,631.50" fill="#0c1a24" fill-opacity="0.045"/>
<polygon points="1206.37,626.94 1131.35,583.62 1131.35,588.18 1206.37,631.50" fill="#0c1a24" fill-opacity="0.045"/>
<polygon points="1206.37,629.98 1131.35,586.66 1131.35,588.18 1206.37,631.50" fill="#0c1a24" fill-opacity="0.045"/>
<polyline points="1736.50,947.75 1733.63,948.57 1730.60,949.16 1727.45,949.52 1724.26,949.64 1721.06,949.52 1717.92,949.16 1714.88,948.57 1712.01,947.75 1709.35,946.72 1706.94,945.50 1705.20,944.50 1703.45,943.49 1701.71,942.49 1699.97,941.48 1698.23,940.48 1696.49,939.47 1694.75,938.47 1693.01,937.46 1691.27,936.46 1689.53,935.45 1687.79,934.45 1686.05,933.44 1684.31,932.44 1682.57,931.43 1680.83,930.43 1679.09,929.42 1677.35,928.42 1675.60,927.41 1673.86,926.41 1672.12,925.40 1670.38,924.40 1668.64,923.39 1666.90,922.39 1665.16,921.38 1663.42,920.38 1661.68,919.37 1659.94,918.37 1658.20,917.36 1656.46,916.36 1654.72,915.35 1652.98,914.35 1651.24,913.34 1649.50,912.34 1647.75,911.33 1646.01,910.33 1644.27,909.32 1642.53,908.32 1640.79,907.31 1639.05,906.31 1637.31,905.30 1635.57,904.30 1633.83,903.29 1632.09,902.29 1630.35,901.28 1628.61,900.28 1626.87,899.27 1625.13,898.27 1623.39,897.26 1621.65,896.26 1619.90,895.25 1618.16,894.25 1616.42,893.24 1614.68,892.24 1612.94,891.23 1611.20,890.23 1609.46,889.22 1607.72,888.22 1605.98,887.21 1604.24,886.21 1602.50,885.20 1600.76,884.20 1599.02,883.19 1597.28,882.19 1595.54,881.18 1593.80,880.18 1592.05,879.17 1590.31,878.17 1588.57,877.16 1586.83,876.16 1585.09,875.15 1583.35,874.15 1581.61,873.14 1579.87,872.14 1578.13,871.13 1576.39,870.13 1574.65,869.12 1572.91,868.12 1571.17,867.11 1569.43,866.11 1567.69,865.10 1565.95,864.10 1564.20,863.09 1562.46,862.09 1560.72,861.08 1558.98,860.08 1557.24,859.07 1555.50,858.07 1553.76,857.06 1552.02,856.06 1550.28,855.05 1548.54,854.05 1546.80,853.04 1545.06,852.04 1543.32,851.03 1541.58,850.03 1539.84,849.02 1538.10,848.02 1536.35,847.01 1534.61,846.01 1532.87,845.00 1531.13,844.00 1528.72,842.78 1526.06,841.75 1523.19,840.93 1520.15,840.34 1517.01,839.98 1513.81,839.86 1510.62,839.98 1507.47,840.34 1504.44,840.93 1501.56,841.75 1498.90,842.78 1496.49,844.00 1494.74,845.01 1493.00,846.02 1491.25,847.03 1489.50,848.04 1487.76,849.04 1486.01,850.05 1484.26,851.06 1482.51,852.07 1480.77,853.08 1479.02,854.09 1477.27,855.10 1475.52,856.11 1473.78,857.11 1472.03,858.12 1470.28,859.13 1468.54,860.14 1466.79,861.15 1465.04,862.16 1463.29,863.17 1461.55,864.18 1459.80,865.18 1458.05,866.19 1456.31,867.20 1454.56,868.21 1452.81,869.22 1451.06,870.23 1449.32,871.24 1447.57,872.25 1445.82,873.25 1444.07,874.26 1442.33,875.27 1440.58,876.28 1438.83,877.29 1437.09,878.30 1435.34,879.31 1433.59,880.32 1431.84,881.32 1430.10,882.33 1428.35,883.34 1426.60,884.35 1424.85,885.36 1423.11,886.37 1421.36,887.38 1419.61,888.39 1417.87,889.39 1416.12,890.40 1414.37,891.41 1412.62,892.42 1410.88,893.43 1409.13,894.44 1407.38,895.45 1405.64,896.46 1403.89,897.46 1402.14,898.47 1400.39,899.48 1398.65,900.49 1396.90,901.50 1394.79,902.89 1393.01,904.43 1391.59,906.09 1390.56,907.84 1389.93,909.65 1389.72,911.50" fill="none" stroke="#1f2b33" stroke-width="1.50" stroke-linejoin="round"/>
<line x1="2394.82" y1="516.00" x2="2394.82" y2="554.00" stroke="#1f2b33" stroke-width="1.50" stroke-linecap="square"/>
<line x1="1389.72" y1="873.50" x2="1389.72" y2="911.50" stroke="#1f2b33" stroke-width="1.50" stroke-linecap="square"/>
<line x1="2377.24" y1="540.50" x2="2377.24" y2="578.50" stroke="#1f2b33" stroke-width="1.35"/>
<line x1="1741.58" y1="907.50" x2="1741.58" y2="945.50" stroke="#1f2b33" stroke-width="1.35"/>
<line x1="1706.94" y1="907.50" x2="1706.94" y2="945.50" stroke="#1f2b33" stroke-width="1.35"/>
<line x1="1531.13" y1="806.00" x2="1531.13" y2="844.00" stroke="#1f2b33" stroke-width="1.35"/>
<line x1="1496.49" y1="806.00" x2="1496.49" y2="844.00" stroke="#1f2b33" stroke-width="1.35"/>
<line x1="1396.90" y1="863.50" x2="1396.90" y2="901.50" stroke="#1f2b33" stroke-width="1.35"/>
<polyline points="1579.88,1033.00 1579.67,1034.85 1579.04,1036.66 1578.01,1038.41 1576.59,1040.07" fill="none" stroke="#1f2b33" stroke-width="1.50" stroke-linejoin="round"/>
<polyline points="1277.51,1212.75 1274.64,1213.57 1271.60,1214.16 1268.46,1214.52 1265.26,1214.64 1262.07,1214.52 1258.92,1214.16 1255.89,1213.57 1253.02,1212.75 1250.35,1211.72 1247.94,1210.50 1246.20,1209.50 1244.46,1208.49 1242.72,1207.49 1240.98,1206.48 1239.24,1205.48 1237.50,1204.47 1235.76,1203.47 1234.02,1202.46 1232.28,1201.46 1230.54,1200.45 1228.80,1199.45 1227.06,1198.44 1225.31,1197.44 1223.57,1196.43 1221.83,1195.43 1220.09,1194.42 1218.35,1193.42 1216.61,1192.41 1214.87,1191.41 1213.13,1190.40 1211.39,1189.40 1209.65,1188.39 1207.91,1187.39 1206.17,1186.38 1204.43,1185.38 1202.69,1184.37 1200.95,1183.37 1199.21,1182.36 1197.46,1181.36 1195.72,1180.35 1193.98,1179.35 1192.24,1178.34 1190.50,1177.34 1188.76,1176.33 1187.02,1175.33 1185.28,1174.32 1183.54,1173.32 1181.80,1172.31 1180.06,1171.31 1178.32,1170.30 1176.58,1169.30 1174.84,1168.29 1173.10,1167.29 1171.36,1166.28 1169.61,1165.28 1167.87,1164.27 1166.13,1163.27 1164.39,1162.26 1162.65,1161.26 1160.91,1160.25 1159.17,1159.25 1157.43,1158.24 1155.69,1157.24 1153.95,1156.23 1152.21,1155.23 1150.47,1154.22 1148.73,1153.22 1146.99,1152.21 1145.25,1151.21 1143.51,1150.20 1141.76,1149.20 1140.02,1148.19 1138.28,1147.19 1136.54,1146.18 1134.80,1145.18 1133.06,1144.17 1131.32,1143.17 1129.58,1142.16 1127.84,1141.16 1126.10,1140.15 1124.36,1139.15 1122.62,1138.14 1120.88,1137.14 1119.14,1136.13 1117.40,1135.13 1115.66,1134.12 1113.91,1133.12 1112.17,1132.11 1110.43,1131.11 1108.69,1130.10 1106.95,1129.10 1105.21,1128.09 1103.47,1127.09 1101.73,1126.08 1099.99,1125.08 1098.25,1124.07 1096.51,1123.07 1094.77,1122.06 1093.03,1121.06 1091.29,1120.05 1089.55,1119.05 1087.81,1118.04 1086.06,1117.04 1084.32,1116.03 1082.58,1115.03 1080.84,1114.02 1079.10,1113.02 1077.36,1112.01 1075.62,1111.01 1073.88,1110.00 1072.14,1109.00 1069.73,1107.78 1067.07,1106.75 1064.19,1105.93 1061.16,1105.34 1058.02,1104.98 1054.82,1104.86 1051.62,1104.98 1048.48,1105.34 1045.45,1105.93 1042.57,1106.75 1039.91,1107.78 1037.50,1109.00 1035.75,1110.01 1034.00,1111.02 1032.26,1112.03 1030.51,1113.04 1028.76,1114.04 1027.01,1115.05 1025.27,1116.06 1023.52,1117.07 1021.77,1118.08 1020.03,1119.09 1018.28,1120.10 1016.53,1121.11 1014.78,1122.11 1013.04,1123.12 1011.29,1124.13 1009.54,1125.14 1007.80,1126.15 1006.05,1127.16 1004.30,1128.17 1002.55,1129.18 1000.81,1130.18 999.06,1131.19 997.31,1132.20 995.56,1133.21 993.82,1134.22 992.07,1135.23 990.32,1136.24 988.58,1137.25 986.83,1138.25 985.08,1139.26 983.33,1140.27 981.59,1141.28 979.84,1142.29 978.09,1143.30 976.34,1144.31 974.60,1145.32 972.85,1146.32 971.10,1147.33 969.36,1148.34 967.61,1149.35 965.86,1150.36 964.11,1151.37 962.37,1152.38 960.62,1153.39 958.87,1154.39 957.13,1155.40 955.38,1156.41 953.63,1157.42 951.88,1158.43 950.14,1159.44 948.39,1160.45 946.64,1161.46 944.89,1162.46 943.15,1163.47 941.40,1164.48 939.65,1165.49 937.91,1166.50 935.79,1167.89 934.01,1169.43 932.60,1171.09 931.57,1172.84 930.94,1174.65 930.73,1176.50" fill="none" stroke="#1f2b33" stroke-width="1.50" stroke-linejoin="round"/>
<line x1="1579.88" y1="995.00" x2="1579.88" y2="1033.00" stroke="#1f2b33" stroke-width="1.50" stroke-linecap="square"/>
<line x1="930.73" y1="1138.50" x2="930.73" y2="1176.50" stroke="#1f2b33" stroke-width="1.50" stroke-linecap="square"/>
<line x1="1572.70" y1="1005.00" x2="1572.70" y2="1043.00" stroke="#1f2b33" stroke-width="1.35"/>
<line x1="1282.58" y1="1172.50" x2="1282.58" y2="1210.50" stroke="#1f2b33" stroke-width="1.35"/>
<line x1="1247.94" y1="1172.50" x2="1247.94" y2="1210.50" stroke="#1f2b33" stroke-width="1.35"/>
<line x1="1072.14" y1="1071.00" x2="1072.14" y2="1109.00" stroke="#1f2b33" stroke-width="1.35"/>
<line x1="1037.50" y1="1071.00" x2="1037.50" y2="1109.00" stroke="#1f2b33" stroke-width="1.35"/>
<line x1="937.91" y1="1128.50" x2="937.91" y2="1166.50" stroke="#1f2b33" stroke-width="1.35"/>
<polyline points="1120.88,1298.00 1120.67,1299.85 1120.05,1301.66 1119.02,1303.41 1117.60,1305.07" fill="none" stroke="#1f2b33" stroke-width="1.50" stroke-linejoin="round"/>
<line x1="1120.88" y1="1260.00" x2="1120.88" y2="1298.00" stroke="#1f2b33" stroke-width="1.50" stroke-linecap="square"/>
<line x1="421.87" y1="905.63" x2="421.87" y2="943.63" stroke="#1f2b33" stroke-width="1.50" stroke-linecap="square"/>
<line x1="1113.71" y1="1270.00" x2="1113.71" y2="1308.00" stroke="#1f2b33" stroke-width="1.35"/>
<line x1="1030.57" y1="1270.00" x2="1030.57" y2="1308.00" stroke="#1f2b33" stroke-width="1.35"/>
<line x1="439.59" y1="928.80" x2="439.59" y2="966.80" stroke="#1f2b33" stroke-width="1.35"/>
<polyline points="753.69,907.00 753.48,905.15 752.85,903.34 751.82,901.59 750.41,899.93 748.63,898.39 746.51,897.00 744.77,895.99 743.02,894.99 741.28,893.98 739.53,892.97 737.79,891.96 736.05,890.96 734.30,889.95 732.56,888.94 730.81,887.93 729.07,886.93 727.32,885.92 725.58,884.91 723.83,883.90 722.09,882.90 720.34,881.89 718.60,880.88 716.85,879.88 715.11,878.87 713.36,877.86 711.62,876.85 709.87,875.85 708.13,874.84 706.38,873.83 704.64,872.82 702.89,871.82 701.15,870.81 699.40,869.80 697.66,868.79 695.92,867.79 694.17,866.78 692.43,865.77 690.68,864.76 688.94,863.76 687.19,862.75 685.45,861.74 683.70,860.74 681.96,859.73 680.21,858.72 678.47,857.71 676.72,856.71 674.98,855.70 673.23,854.69 671.49,853.68" fill="none" stroke="#1f2b33" stroke-width="1.50" stroke-linejoin="round"/>
<line x1="753.69" y1="869.00" x2="753.69" y2="907.00" stroke="#1f2b33" stroke-width="1.50" stroke-linecap="square"/>
<line x1="620.69" y1="780.50" x2="620.69" y2="818.50" stroke="#1f2b33" stroke-width="1.50" stroke-linecap="square"/>
<line x1="746.51" y1="859.00" x2="746.51" y2="897.00" stroke="#1f2b33" stroke-width="1.35"/>
<line x1="627.87" y1="790.50" x2="627.87" y2="828.50" stroke="#1f2b33" stroke-width="1.35"/>
<polyline points="1213.55,641.50 1213.34,639.65 1212.71,637.84 1211.68,636.09 1210.27,634.43 1208.49,632.89 1206.37,631.50 1204.63,630.49 1202.88,629.49 1201.14,628.48 1199.39,627.47 1197.65,626.46 1195.90,625.46 1194.16,624.45 1192.42,623.44 1190.67,622.43 1188.93,621.43 1187.18,620.42 1185.44,619.41 1183.69,618.40 1181.95,617.40 1180.20,616.39 1178.46,615.38 1176.71,614.38 1174.97,613.37 1173.22,612.36 1171.48,611.35 1169.73,610.35 1167.99,609.34 1166.24,608.33 1164.50,607.32 1162.75,606.32 1161.01,605.31 1159.26,604.30 1157.52,603.29 1155.77,602.29 1154.03,601.28 1152.29,600.27 1150.54,599.26 1148.80,598.26 1147.05,597.25 1145.31,596.24 1143.56,595.24 1141.82,594.23 1140.07,593.22 1138.33,592.21 1136.58,591.21 1134.84,590.20 1133.09,589.19 1131.35,588.18" fill="none" stroke="#1f2b33" stroke-width="1.50" stroke-linejoin="round"/>
<line x1="1213.55" y1="603.50" x2="1213.55" y2="641.50" stroke="#1f2b33" stroke-width="1.50" stroke-linecap="square"/>
<line x1="1080.55" y1="515.00" x2="1080.55" y2="553.00" stroke="#1f2b33" stroke-width="1.50" stroke-linecap="square"/>
<line x1="1206.37" y1="593.50" x2="1206.37" y2="631.50" stroke="#1f2b33" stroke-width="1.35"/>
<line x1="1087.73" y1="525.00" x2="1087.73" y2="563.00" stroke="#1f2b33" stroke-width="1.35"/>
<polygon points="1307.08,539.00 1307.38,535.53 1307.38,612.53 1307.08,616.00" fill="#7aa2bc" stroke="#7aa2bc" stroke-width="0.8"/>
<polygon points="1307.38,535.53 1308.26,532.10 1308.26,609.10 1307.38,612.53" fill="#79a2bb" stroke="#79a2bb" stroke-width="0.8"/>
<polygon points="1308.26,532.10 1309.72,528.74 1309.72,605.74 1308.26,609.10" fill="#79a1ba" stroke="#79a1ba" stroke-width="0.8"/>
<polygon points="1309.72,528.74 1311.74,525.47 1311.74,602.47 1309.72,605.74" fill="#78a0ba" stroke="#78a0ba" stroke-width="0.8"/>
<polygon points="1311.74,525.47 1314.31,522.33 1314.31,599.33 1311.74,602.47" fill="#789fb9" stroke="#789fb9" stroke-width="0.8"/>
<polygon points="1314.31,522.33 1317.40,519.36 1317.40,596.36 1314.31,599.33" fill="#779fb8" stroke="#779fb8" stroke-width="0.8"/>
<polygon points="1317.40,519.36 1320.98,516.57 1320.98,593.57 1317.40,596.36" fill="#779eb7" stroke="#779eb7" stroke-width="0.8"/>
<polygon points="1320.98,516.57 1325.02,514.00 1325.02,591.00 1320.98,593.57" fill="#769db6" stroke="#769db6" stroke-width="0.8"/>
<polygon points="1325.02,514.00 1744.18,272.00 1744.18,349.00 1325.02,591.00" fill="#769db6" stroke="#769db6" stroke-width="0.8"/>
<polygon points="1744.18,272.00 1748.63,269.67 1748.63,346.67 1744.18,349.00" fill="#759bb4" stroke="#759bb4" stroke-width="0.8"/>
<polygon points="1748.63,269.67 1753.45,267.60 1753.45,344.60 1748.63,346.67" fill="#7398b1" stroke="#7398b1" stroke-width="0.8"/>
<polygon points="1753.45,267.60 1758.61,265.82 1758.61,342.82 1753.45,344.60" fill="#7195ad" stroke="#7195ad" stroke-width="0.8"/>
<polygon points="1758.61,265.82 1764.04,264.34 1764.04,341.34 1758.61,342.82" fill="#6e92aa" stroke="#6e92aa" stroke-width="0.8"/>
<polygon points="1764.04,264.34 1769.70,263.17 1769.70,340.17 1764.04,341.34" fill="#6b8da4" stroke="#6b8da4" stroke-width="0.8"/>
<polygon points="1769.70,263.17 1775.53,262.32 1775.53,339.32 1769.70,340.17" fill="#66879d" stroke="#66879d" stroke-width="0.8"/>
<polygon points="1775.53,262.32 1781.47,261.81 1781.47,338.81 1775.53,339.32" fill="#628096" stroke="#628096" stroke-width="0.8"/>
<polygon points="1781.47,261.81 1787.48,261.64 1787.48,338.64 1781.47,338.81" fill="#5e7a8f" stroke="#5e7a8f" stroke-width="0.8"/>
<polygon points="1787.48,261.64 1793.48,261.81 1793.48,338.81 1787.48,338.64" fill="#5a7589" stroke="#5a7589" stroke-width="0.8"/>
<polygon points="1793.48,261.81 1799.42,262.32 1799.42,339.32 1793.48,338.81" fill="#587286" stroke="#587286" stroke-width="0.8"/>
<polygon points="1799.42,262.32 1805.25,263.17 1805.25,340.17 1799.42,339.32" fill="#566f82" stroke="#566f82" stroke-width="0.8"/>
<polygon points="1805.25,263.17 1810.91,264.34 1810.91,341.34 1805.25,340.17" fill="#536b7e" stroke="#536b7e" stroke-width="0.8"/>
<polygon points="1810.91,264.34 1816.34,265.82 1816.34,342.82 1810.91,341.34" fill="#52697c" stroke="#52697c" stroke-width="0.8"/>
<polygon points="1816.34,265.82 1821.50,267.60 1821.50,344.60 1816.34,342.82" fill="#51687a" stroke="#51687a" stroke-width="0.8"/>
<polygon points="1821.50,267.60 1826.32,269.67 1826.32,346.67 1821.50,344.60" fill="#506779" stroke="#506779" stroke-width="0.8"/>
<polygon points="1826.32,269.67 1830.78,272.00 1830.78,349.00 1826.32,346.67" fill="#4f6678" stroke="#4f6678" stroke-width="0.8"/>
<polygon points="1830.78,272.00 2165.93,465.50 2165.93,542.50 1830.78,349.00" fill="#4f6577" stroke="#4f6577" stroke-width="0.8"/>
<polygon points="2165.93,465.50 2169.97,468.07 2169.97,545.07 2165.93,542.50" fill="#4f6577" stroke="#4f6577" stroke-width="0.8"/>
<polygon points="2169.97,468.07 2173.55,470.86 2173.55,547.86 2169.97,545.07" fill="#506678" stroke="#506678" stroke-width="0.8"/>
<polygon points="2173.55,470.86 2176.63,473.83 2176.63,550.83 2173.55,547.86" fill="#506779" stroke="#506779" stroke-width="0.8"/>
<polygon points="2176.63,473.83 2179.20,476.97 2179.20,553.97 2176.63,550.83" fill="#51687a" stroke="#51687a" stroke-width="0.8"/>
<polygon points="2179.20,476.97 2181.23,480.24 2181.23,557.24 2179.20,553.97" fill="#52697c" stroke="#52697c" stroke-width="0.8"/>
<polygon points="2181.23,480.24 2182.69,483.60 2182.69,560.60 2181.23,557.24" fill="#536a7d" stroke="#536a7d" stroke-width="0.8"/>
<polygon points="2182.69,483.60 2183.57,487.03 2183.57,564.03 2182.69,560.60" fill="#536b7e" stroke="#536b7e" stroke-width="0.8"/>
<polygon points="2183.57,487.03 2183.87,490.50 2183.87,567.50 2183.57,564.03" fill="#546c7f" stroke="#546c7f" stroke-width="0.8"/>
<polyline points="1307.08,616.00 1307.38,612.53 1308.26,609.10 1309.72,605.74 1311.74,602.47 1314.31,599.33 1317.40,596.36 1320.98,593.57 1325.02,591.00 1744.18,349.00 1748.63,346.67 1753.45,344.60 1758.61,342.82 1764.04,341.34 1769.70,340.17 1775.53,339.32 1781.47,338.81 1787.48,338.64 1793.48,338.81 1799.42,339.32 1805.25,340.17 1810.91,341.34 1816.34,342.82 1821.50,344.60 1826.32,346.67 1830.78,349.00 2165.93,542.50 2169.97,545.07 2173.55,547.86 2176.63,550.83 2179.20,553.97 2181.23,557.24 2182.69,560.60 2183.57,564.03 2183.87,567.50" fill="none" stroke="#1f2b33" stroke-width="1.50" stroke-linejoin="round"/>
<line x1="1307.08" y1="539.00" x2="1307.08" y2="616.00" stroke="#1f2b33" stroke-width="1.50" stroke-linecap="square"/>
<line x1="2183.87" y1="490.50" x2="2183.87" y2="567.50" stroke="#1f2b33" stroke-width="1.50" stroke-linecap="square"/>
<line x1="1325.02" y1="514.00" x2="1325.02" y2="591.00" stroke="#1f2b33" stroke-width="1.35"/>
<line x1="1744.18" y1="272.00" x2="1744.18" y2="349.00" stroke="#1f2b33" stroke-width="1.35"/>
<line x1="1830.78" y1="272.00" x2="1830.78" y2="349.00" stroke="#1f2b33" stroke-width="1.35"/>
<line x1="2165.93" y1="465.50" x2="2165.93" y2="542.50" stroke="#1f2b33" stroke-width="1.35"/>
<path d="M1701.74,150.50 L1707.64,147.51 L1714.17,144.99 L1721.21,142.99 L1728.64,141.53 L1736.34,140.65 L1744.18,140.35 L1752.01,140.65 L1759.71,141.53 L1767.14,142.99 L1774.18,144.99 L1780.71,147.51 L1786.61,150.50 L2377.24,491.50 L2382.42,494.91 L2386.78,498.68 L2390.25,502.74 L2392.77,507.03 L2394.30,511.48 L2394.82,516.00 L2394.30,520.52 L2392.77,524.97 L2390.25,529.26 L2386.78,533.32 L2382.42,537.09 L2377.24,540.50 L1741.58,907.50 L1739.17,908.72 L1736.50,909.75 L1733.63,910.57 L1730.60,911.16 L1727.45,911.52 L1724.26,911.64 L1721.06,911.52 L1717.92,911.16 L1714.88,910.57 L1712.01,909.75 L1709.35,908.72 L1706.94,907.50 L1531.13,806.00 L1528.72,804.78 L1526.06,803.75 L1523.19,802.93 L1520.15,802.34 L1517.01,801.98 L1513.81,801.86 L1510.62,801.98 L1507.47,802.34 L1504.44,802.93 L1501.56,803.75 L1498.90,804.78 L1496.49,806.00 L1396.90,863.50 L1394.79,864.89 L1393.01,866.43 L1391.59,868.09 L1390.56,869.84 L1389.93,871.65 L1389.72,873.50 L1389.93,875.35 L1390.56,877.16 L1391.59,878.91 L1393.01,880.57 L1394.79,882.11 L1396.90,883.50 L1572.70,985.00 L1574.81,986.39 L1576.59,987.93 L1578.01,989.59 L1579.04,991.34 L1579.67,993.15 L1579.88,995.00 L1579.67,996.85 L1579.04,998.66 L1578.01,1000.41 L1576.59,1002.07 L1574.81,1003.61 L1572.70,1005.00 L1282.58,1172.50 L1280.17,1173.72 L1277.51,1174.75 L1274.64,1175.57 L1271.60,1176.16 L1268.46,1176.52 L1265.26,1176.64 L1262.07,1176.52 L1258.92,1176.16 L1255.89,1175.57 L1253.02,1174.75 L1250.35,1173.72 L1247.94,1172.50 L1072.14,1071.00 L1069.73,1069.78 L1067.07,1068.75 L1064.19,1067.93 L1061.16,1067.34 L1058.02,1066.98 L1054.82,1066.86 L1051.62,1066.98 L1048.48,1067.34 L1045.45,1067.93 L1042.57,1068.75 L1039.91,1069.78 L1037.50,1071.00 L937.91,1128.50 L935.79,1129.89 L934.01,1131.43 L932.60,1133.09 L931.57,1134.84 L930.94,1136.65 L930.73,1138.50 L930.94,1140.35 L931.57,1142.16 L932.60,1143.91 L934.01,1145.57 L935.79,1147.11 L937.91,1148.50 L1113.71,1250.00 L1115.82,1251.39 L1117.60,1252.93 L1119.02,1254.59 L1120.05,1256.34 L1120.67,1258.15 L1120.88,1260.00 L1120.67,1261.85 L1120.05,1263.66 L1119.02,1265.41 L1117.60,1267.07 L1115.82,1268.61 L1113.71,1270.00 L1113.71,1270.00 L1107.93,1272.93 L1101.53,1275.39 L1094.64,1277.36 L1087.35,1278.78 L1079.81,1279.65 L1072.14,1279.94 L1064.47,1279.65 L1056.92,1278.78 L1049.64,1277.36 L1042.75,1275.39 L1036.35,1272.93 L1030.57,1270.00 L439.59,928.80 L439.59,928.80 L435.31,926.05 L431.55,923.05 L428.35,919.84 L425.76,916.46 L423.81,912.93 L422.50,909.31 L421.87,905.63 L421.91,901.93 L422.62,898.25 L424.01,894.64 L426.04,891.13 L428.71,887.76 L431.97,884.58 L435.80,881.61 L435.80,881.61 L571.58,960.00 L573.99,961.22 L576.65,962.25 L579.52,963.07 L582.56,963.66 L585.70,964.02 L588.90,964.14 L592.09,964.02 L595.24,963.66 L598.27,963.07 L601.14,962.25 L603.81,961.22 L606.22,960.00 L746.51,879.00 L748.63,877.61 L750.41,876.07 L751.82,874.41 L752.85,872.66 L753.48,870.85 L753.69,869.00 L753.48,867.15 L752.85,865.34 L751.82,863.59 L750.41,861.93 L748.63,860.39 L746.51,859.00 L627.87,790.50 L625.76,789.11 L623.98,787.57 L622.56,785.91 L621.53,784.16 L620.90,782.35 L620.69,780.50 L620.90,778.65 L621.53,776.84 L622.56,775.09 L623.98,773.43 L625.76,771.89 L627.87,770.50 L877.28,626.50 L879.69,625.28 L882.36,624.25 L885.23,623.43 L888.26,622.84 L891.41,622.48 L894.60,622.36 L897.80,622.48 L900.94,622.84 L903.98,623.43 L906.85,624.25 L909.52,625.28 L911.92,626.50 L1030.57,695.00 L1032.98,696.22 L1035.64,697.25 L1038.52,698.07 L1041.55,698.66 L1044.69,699.02 L1047.89,699.14 L1051.09,699.02 L1054.23,698.66 L1057.26,698.07 L1060.14,697.25 L1062.80,696.22 L1065.21,695.00 L1206.37,613.50 L1208.49,612.11 L1210.27,610.57 L1211.68,608.91 L1212.71,607.16 L1213.34,605.35 L1213.55,603.50 L1213.34,601.65 L1212.71,599.84 L1211.68,598.09 L1210.27,596.43 L1208.49,594.89 L1206.37,593.50 L1087.73,525.00 L1085.62,523.61 L1083.84,522.07 L1082.42,520.41 L1081.39,518.66 L1080.76,516.85 L1080.55,515.00 L1080.76,513.15 L1081.39,511.34 L1082.42,509.59 L1083.84,507.93 L1085.62,506.39 L1087.73,505.00 Z M1325.02,564.00 L1320.98,561.43 L1317.40,558.64 L1314.31,555.67 L1311.74,552.53 L1309.72,549.26 L1308.26,545.90 L1307.38,542.47 L1307.08,539.00 L1307.38,535.53 L1308.26,532.10 L1309.72,528.74 L1311.74,525.47 L1314.31,522.33 L1317.40,519.36 L1320.98,516.57 L1325.02,514.00 L1744.18,272.00 L1748.63,269.67 L1753.45,267.60 L1758.61,265.82 L1764.04,264.34 L1769.70,263.17 L1775.53,262.32 L1781.47,261.81 L1787.48,261.64 L1793.48,261.81 L1799.42,262.32 L1805.25,263.17 L1810.91,264.34 L1816.34,265.82 L1821.50,267.60 L1826.32,269.67 L1830.78,272.00 L2165.93,465.50 L2169.97,468.07 L2173.55,470.86 L2176.63,473.83 L2179.20,476.97 L2181.23,480.24 L2182.69,483.60 L2183.57,487.03 L2183.87,490.50 L2183.57,493.97 L2182.69,497.40 L2181.23,500.76 L2179.20,504.03 L2176.63,507.17 L2173.55,510.14 L2169.97,512.93 L2165.93,515.50 L1746.77,757.50 L1742.32,759.83 L1737.49,761.90 L1732.34,763.68 L1726.91,765.16 L1721.25,766.33 L1715.42,767.18 L1709.47,767.69 L1703.47,767.86 L1697.47,767.69 L1691.53,767.18 L1685.70,766.33 L1680.04,765.16 L1674.60,763.68 L1669.45,761.90 L1664.62,759.83 L1660.17,757.50 Z" fill="#8db9d6" fill-rule="evenodd" stroke="#1f2b33" stroke-width="1.50" stroke-linejoin="round"/>
<ellipse cx="1745.04" cy="174.50" rx="42.01" ry="24.25" fill="url(#hg)"/>
<g clip-path="url(#c1)"><ellipse cx="1745.04" cy="204.50" rx="42.01" ry="24.25" fill="url(#hf)" stroke="#1f2b33" stroke-width="1.50"/>
<g clip-path="url(#d1)"><ellipse cx="1745.04" cy="204.50" rx="19.60" ry="11.31" fill="url(#hs)" stroke="#1f2b33" stroke-width="1.50"/></g>
</g>
<ellipse cx="1745.04" cy="174.50" rx="42.01" ry="24.25" fill="none" stroke="#1f2b33" stroke-width="1.50"/>
<ellipse cx="2335.67" cy="515.50" rx="42.01" ry="24.25" fill="url(#hg)"/>
<g clip-path="url(#c2)"><ellipse cx="2335.67" cy="545.50" rx="42.01" ry="24.25" fill="url(#hf)" stroke="#1f2b33" stroke-width="1.50"/>
<g clip-path="url(#d2)"><ellipse cx="2335.67" cy="545.50" rx="19.60" ry="11.31" fill="url(#hs)" stroke="#1f2b33" stroke-width="1.50"/></g>
</g>
<ellipse cx="2335.67" cy="515.50" rx="42.01" ry="24.25" fill="none" stroke="#1f2b33" stroke-width="1.50"/>
<ellipse cx="1156.14" cy="515.00" rx="42.01" ry="24.25" fill="url(#hg)"/>
<g clip-path="url(#c3)"><ellipse cx="1156.14" cy="545.00" rx="42.01" ry="24.25" fill="url(#hf)" stroke="#1f2b33" stroke-width="1.50"/>
<g clip-path="url(#d3)"><ellipse cx="1156.14" cy="545.00" rx="19.60" ry="11.31" fill="url(#hs)" stroke="#1f2b33" stroke-width="1.50"/></g>
</g>
<ellipse cx="1156.14" cy="515.00" rx="42.01" ry="24.25" fill="none" stroke="#1f2b33" stroke-width="1.50"/>
<ellipse cx="1450.94" cy="685.30" rx="42.01" ry="24.25" fill="url(#hg)"/>
<g clip-path="url(#c4)"><ellipse cx="1450.94" cy="715.30" rx="42.01" ry="24.25" fill="url(#hf)" stroke="#1f2b33" stroke-width="1.50"/>
<g clip-path="url(#d4)"><ellipse cx="1450.94" cy="715.30" rx="19.60" ry="11.31" fill="url(#hs)" stroke="#1f2b33" stroke-width="1.50"/></g>
</g>
<ellipse cx="1450.94" cy="685.30" rx="42.01" ry="24.25" fill="none" stroke="#1f2b33" stroke-width="1.50"/>
<ellipse cx="1746.08" cy="855.90" rx="42.01" ry="24.25" fill="url(#hg)"/>
<g clip-path="url(#c5)"><ellipse cx="1746.08" cy="885.90" rx="42.01" ry="24.25" fill="url(#hf)" stroke="#1f2b33" stroke-width="1.50"/>
<g clip-path="url(#d5)"><ellipse cx="1746.08" cy="885.90" rx="19.60" ry="11.31" fill="url(#hs)" stroke="#1f2b33" stroke-width="1.50"/></g>
</g>
<ellipse cx="1746.08" cy="855.90" rx="42.01" ry="24.25" fill="none" stroke="#1f2b33" stroke-width="1.50"/>
<ellipse cx="1442.80" cy="783.00" rx="39.44" ry="22.77" fill="url(#hg)"/>
<g clip-path="url(#c6)"><ellipse cx="1442.80" cy="813.00" rx="39.44" ry="22.77" fill="url(#hf)" stroke="#1f2b33" stroke-width="1.50"/>
<g clip-path="url(#d6)"><ellipse cx="1442.80" cy="813.00" rx="19.60" ry="11.31" fill="url(#hs)" stroke="#1f2b33" stroke-width="1.50"/></g>
</g>
<ellipse cx="1442.80" cy="783.00" rx="39.44" ry="22.77" fill="none" stroke="#1f2b33" stroke-width="1.50"/>
<ellipse cx="783.23" cy="715.80" rx="39.44" ry="22.77" fill="url(#hg)"/>
<g clip-path="url(#c7)"><ellipse cx="783.23" cy="745.80" rx="39.44" ry="22.77" fill="url(#hf)" stroke="#1f2b33" stroke-width="1.50"/>
<g clip-path="url(#d7)"><ellipse cx="783.23" cy="745.80" rx="19.60" ry="11.31" fill="url(#hs)" stroke="#1f2b33" stroke-width="1.50"/></g>
</g>
<ellipse cx="783.23" cy="715.80" rx="39.44" ry="22.77" fill="none" stroke="#1f2b33" stroke-width="1.50"/>
<ellipse cx="861.70" cy="1118.50" rx="39.44" ry="22.77" fill="url(#hg)"/>
<g clip-path="url(#c8)"><ellipse cx="861.70" cy="1148.50" rx="39.44" ry="22.77" fill="url(#hf)" stroke="#1f2b33" stroke-width="1.50"/>
<g clip-path="url(#d8)"><ellipse cx="861.70" cy="1148.50" rx="19.60" ry="11.31" fill="url(#hs)" stroke="#1f2b33" stroke-width="1.50"/></g>
</g>
<ellipse cx="861.70" cy="1118.50" rx="39.44" ry="22.77" fill="none" stroke="#1f2b33" stroke-width="1.50"/>
<ellipse cx="1493.03" cy="899.00" rx="20.82" ry="12.02" fill="url(#hg)"/>
<g clip-path="url(#c9)"><ellipse cx="1493.03" cy="919.00" rx="20.82" ry="12.02" fill="#5d798b" stroke="#1f2b33" stroke-width="1.50"/>
</g>
<ellipse cx="1493.03" cy="899.00" rx="20.82" ry="12.02" fill="none" stroke="#1f2b33" stroke-width="1.50"/>
<ellipse cx="1610.81" cy="967.00" rx="20.82" ry="12.02" fill="url(#hg)"/>
<g clip-path="url(#c10)"><ellipse cx="1610.81" cy="987.00" rx="20.82" ry="12.02" fill="#5d798b" stroke="#1f2b33" stroke-width="1.50"/>
</g>
<ellipse cx="1610.81" cy="967.00" rx="20.82" ry="12.02" fill="none" stroke="#1f2b33" stroke-width="1.50"/>
<ellipse cx="1033.17" cy="1164.50" rx="20.82" ry="12.02" fill="url(#hg)"/>
<g clip-path="url(#c11)"><ellipse cx="1033.17" cy="1184.50" rx="20.82" ry="12.02" fill="#5d798b" stroke="#1f2b33" stroke-width="1.50"/>
</g>
<ellipse cx="1033.17" cy="1164.50" rx="20.82" ry="12.02" fill="none" stroke="#1f2b33" stroke-width="1.50"/>
<ellipse cx="1150.95" cy="1232.50" rx="20.82" ry="12.02" fill="url(#hg)"/>
<g clip-path="url(#c12)"><ellipse cx="1150.95" cy="1252.50" rx="20.82" ry="12.02" fill="#5d798b" stroke="#1f2b33" stroke-width="1.50"/>
</g>
<ellipse cx="1150.95" cy="1232.50" rx="20.82" ry="12.02" fill="none" stroke="#1f2b33" stroke-width="1.50"/>
<circle cx="1408.5" cy="710" r="5.5" fill="#fff" stroke="#222" stroke-width="2"/><circle cx="1408.5" cy="710" r="2" fill="#111"/></svg>
<svg width="2560" height="1440" viewBox="0 0 2560 1440" style="pointer-events:none"><g fill="#2c2c2c"><rect x="141" y="17" width="21" height="3.5"/><rect x="141" y="24.5" width="21" height="3.5"/><rect x="141" y="32" width="21" height="3.5"/></g>
<g stroke="#2c2c2c" stroke-width="2" fill="none"><circle cx="186" cy="20.5" r="4"/><path d="M186,24.5 V36"/><path d="M186,34 Q186,28 193,27"/></g><circle cx="186" cy="36.5" r="2.3" fill="#2c2c2c"/><circle cx="193.5" cy="27" r="2.3" fill="#2c2c2c"/><g fill="#666"><rect x="194" y="17" width="12" height="2"/><rect x="198" y="22" width="8" height="2"/><rect x="198" y="27" width="8" height="2"/><rect x="194" y="36" width="12" height="2"/></g>
<g fill="#2c2c2c"><rect x="230" y="16" width="2" height="3"/><rect x="230" y="21" width="2" height="2"/><circle cx="231" cy="27.5" r="3.6"/><rect x="230" y="32" width="2" height="2"/><rect x="230" y="36" width="2" height="3"/></g><g fill="#1c4fb0"><rect x="237.5" y="32" width="10" height="2.4"/><rect x="241.5" y="28" width="2.4" height="10"/></g>
<rect x="753" y="13" width="26" height="25" rx="4" fill="#fff"/><path d="M756,22 L766,17.5 L776,22 L766,26.5 Z" fill="#1c4fb0"/><path d="M760,24 V29 Q766,33 772,29 V24 L766,27 Z" fill="#1c4fb0"/><rect x="757" y="22" width="1.4" height="7" fill="#1c4fb0"/>
<path d="M1916.5,17 C1923.5,17 1928.5,20.5 1928.5,25.5 C1928.5,30.5 1923.5,33.5 1916.5,33.5 C1915,33.5 1913.5,33.3 1912,33 L1906.5,37.5 L1908.5,31.5 C1905.8,30 1904.5,28 1904.5,25.5 C1904.5,20.5 1909.5,17 1916.5,17 Z" fill="#666"/>
<path d="M1958,19 C1953.5,19 1951.5,23 1951.5,27 L1951.5,32 L1948.5,35.5 L1968.5,35.5 L1965.5,32 L1965.5,27 C1965.5,23 1963,19 1958,19 Z" fill="#666"/><circle cx="1958.5" cy="38" r="2.5" fill="#666"/>
<rect x="1960" y="8" width="20" height="20" rx="2.5" fill="#1c4fb0"/><text x="1970" y="23.5" font-family="Liberation Sans" font-weight="700" font-size="13" fill="#fff" text-anchor="middle">2</text>
<circle cx="2374" cy="27" r="11.5" fill="#6a6a6a"/><text x="2374" y="33.5" font-family="Liberation Sans" font-weight="700" font-size="17" fill="#fff" text-anchor="middle">?</text><path d="M2391,25 h10 l-5,5 z" fill="#333"/>
<path d="M2419.5,38 C2418,33 2418,20 2423,16 C2427,12.5 2441,12.5 2445,16 C2450,20 2450,33 2448.5,38 Z" fill="#1c4fb0"/><circle cx="2434" cy="24.5" r="7.8" fill="#fff"/><path d="M2420.5,38.5 C2422,33 2427,32 2434,32 C2441,32 2446,33 2447.5,38.5 C2443,42.5 2425,42.5 2420.5,38.5 Z" fill="#fff"/><path d="M2540,25 h11 l-5.5,5.5 z" fill="#333"/>
<path d="M13,70 L20,63 V67.5 C27,67.5 31,72 29,82 C27.5,75.5 25,73.5 20,73.5 V77.5 Z" fill="#333"/>
<path d="M74,70 L67,63 V67.5 C60,67.5 56,72 58,81 C59.5,75.5 62,73.5 67,73.5 V77.5 Z" fill="#999"/>
<rect x="88.0" y="56" width="2.5" height="33" fill="#dcdcdc"/>
<path d="M103.5,81 L106,74 L119.5,60.5 L123,64 L109.5,77.5 Z M106,74 L109.5,77.5" fill="none" stroke="#2a2a2a" stroke-width="1.5" stroke-linejoin="round"/><rect x="101" y="82" width="23" height="2" fill="#4a7fd4"/>
<rect x="198.0" y="56" width="2.5" height="33" fill="#dcdcdc"/>
<g transform="translate(212.0,61.0) scale(1.0)"><path d="M1,3 L3.5,0.5 H21.5 L23,2 V23 H3.5 L1,20.5 Z" fill="#fff" stroke="#3a3a3a" stroke-width="1.4" stroke-linejoin="round"/><path d="M3.5,0.5 V23 M3.5,3 H23" fill="none" stroke="#3a3a3a" stroke-width="1.4" stroke-linejoin="round"/><path d="M8,10 L10,7.5 H22 V22.5 H8 Z" fill="#9a9a9a" stroke="#3a3a3a" stroke-width="1.4" stroke-linejoin="round"/><path d="M10,7.5 V22.5 M10,10 H22" fill="none" stroke="#3a3a3a" stroke-width="1"/></g>
<g transform="translate(255.0,61.0) scale(1.0)"><path d="M18,3.5 C15.5,1.5 12.5,0.8 10.5,0.8 C4.8,0.8 0.8,5.5 0.8,11.5 C0.8,17.5 4.8,22.5 10.5,22.5 C12.5,22.5 15.5,21.5 18,19.5 C16,17.5 14,16 12.5,14.5 C11,13.5 9.5,12.5 9.5,11.5 C9.5,10.5 11,9.5 12.5,8.5 C14,7 16,5.5 18,3.5 Z" fill="#9a9a9a" stroke="#3a3a3a" stroke-width="1.4" stroke-linejoin="round"/><ellipse cx="15.5" cy="6.5" rx="2.5" ry="3.5" fill="#fff" stroke="#3a3a3a" stroke-width="1" transform="rotate(35 15.5 6.5)"/><ellipse cx="15.5" cy="16.5" rx="2.5" ry="3.5" fill="#fff" stroke="#3a3a3a" stroke-width="1" transform="rotate(-35 15.5 16.5)"/><path d="M0,11.5 H3 M6,11.5 H8 M13,11.5 H15 M18,11.5 H22" stroke="#3a3a3a" stroke-width="1"/></g>
<g transform="translate(297.0,61.0) scale(1.0)"><path d="M3,21 C0,19 1,13 5,11 C8,9.5 11,10 13,9 C15,8 16,5 17,3 L23,4 C22,8 20,12 16,14 C13,15.5 10,15 8.5,16 C7,17 7.5,20 6.5,22 Z" fill="#9a9a9a" stroke="#3a3a3a" stroke-width="1.4" stroke-linejoin="round"/><ellipse cx="20" cy="3" rx="3" ry="2.2" fill="#fff" stroke="#3a3a3a" stroke-width="1.4" stroke-linejoin="round"/></g>
<g transform="translate(339.0,61.0) scale(1.0)"><path d="M5,1.5 L17,1.5 C17,8 18,16 22.5,20.5 L11,23 L0.5,20.5 C4.5,16 5,8 5,1.5 Z" fill="#9a9a9a" stroke="#3a3a3a" stroke-width="1.4" stroke-linejoin="round"/><ellipse cx="11" cy="2" rx="6" ry="1.8" fill="#fff" stroke="#3a3a3a" stroke-width="1.4" stroke-linejoin="round"/></g>
<g transform="translate(382.0,61.0) scale(1.0)"><path d="M1,4 L5,2 C9,0 12,3 17,0.5 L22,3.5 V17.5 L10,23 L1,19 Z" fill="#9a9a9a" stroke="#3a3a3a" stroke-width="1.4" stroke-linejoin="round"/><path d="M1,4 L10,8.5 L22,3.5 M10,8.5 V23" fill="none" stroke="#3a3a3a" stroke-width="1.4" stroke-linejoin="round"/><path d="M13,9 V17 M10,14 L13,18 L16,14" fill="none" stroke="#111" stroke-width="2"/><path d="M10,15 L13,20 L16,15" fill="none" stroke="#fff" stroke-width="1.2"/></g>
<path d="M418.5,69.5 l6,6 l6,-6" fill="none" stroke="#555" stroke-width="2.2"/>
<rect x="438.5" y="56" width="2.5" height="33" fill="#dcdcdc"/>
<g transform="translate(452.0,61.0) scale(1.0)"><path d="M1,8 C1,4 5,0.5 10,0.5 H19.5 L23,4 V23 H4.5 L1,19.5 Z" fill="#fff" stroke="#3a3a3a" stroke-width="1.4" stroke-linejoin="round"/><path d="M1.5,7.5 C2,4.5 6,1.5 10,1 L12.5,3 C8.5,4 5.5,6.5 4.5,10 Z" fill="#9a9a9a" stroke="#3a3a3a" stroke-width="1.4" stroke-linejoin="round"/><path d="M4.5,10 V23 M12.5,3 H23" fill="none" stroke="#3a3a3a" stroke-width="1.4" stroke-linejoin="round"/></g>
<g transform="translate(494.0,61.0) scale(1.0)"><path d="M1,9 L9.5,0.5 H19.5 L23,4 V23 H4.5 L1,19.5 Z" fill="#fff" stroke="#3a3a3a" stroke-width="1.4" stroke-linejoin="round"/><path d="M1,9 L9.5,0.5 L12,3 L4.5,11 Z" fill="#9a9a9a" stroke="#3a3a3a" stroke-width="1.4" stroke-linejoin="round"/><path d="M4.5,11 V23 M12,3 H23" fill="none" stroke="#3a3a3a" stroke-width="1.4" stroke-linejoin="round"/></g>
<g transform="translate(537.0,61.0) scale(1.0)"><path d="M0.5,18.5 L9,1 H19.5 L22.5,3.5 V23 H5 Z" fill="#9a9a9a" stroke="#3a3a3a" stroke-width="1.4" stroke-linejoin="round"/><path d="M9,1 L11.5,3.5 H22.5 M11.5,3.5 L5,23" fill="none" stroke="#3a3a3a" stroke-width="1.4" stroke-linejoin="round"/><path d="M11.5,3.5 H22 V3" fill="#fff"/></g>
<g transform="translate(579.0,61.0) scale(1.0)"><path d="M0.5,13.5 H3.5 L14,2.5 V0.5 H17.5 L22.5,5.5 V23 H5 L0.5,18.5 Z" fill="#fff" stroke="#3a3a3a" stroke-width="1.4" stroke-linejoin="round"/><path d="M5,17 L17,5 V17 Z" fill="#9a9a9a"/><path d="M3.5,13.5 L5,17 M5,17 V23 M17.5,0.5 V17 H5 M14,2.5 L17.5,5.5" fill="none" stroke="#3a3a3a" stroke-width="1.4" stroke-linejoin="round"/></g>
<g transform="translate(622.0,61.0) scale(1.0)"><path d="M1,3.5 L3.5,0.5 H20 L23,3.5 V23 H4 L1,20 Z" fill="#fff" stroke="#3a3a3a" stroke-width="1.4" stroke-linejoin="round"/><path d="M7,3.5 H18 V19 H7 Z" fill="#9a9a9a" stroke="#3a3a3a" stroke-width="1.4" stroke-linejoin="round"/><path d="M4,3.5 V23 M4,3.5 H23" fill="none" stroke="#3a3a3a" stroke-width="1.4" stroke-linejoin="round"/></g>
<g transform="translate(664.0,61.0) scale(1.0)"><path d="M1,3.5 L3.5,0.5 H20 L23,3.5 V23 H4 L1,20 Z" fill="#fff" stroke="#3a3a3a" stroke-width="1.4" stroke-linejoin="round"/><path d="M4,3.5 V23 M4,3.5 H23" fill="none" stroke="#3a3a3a" stroke-width="1.4" stroke-linejoin="round"/><circle cx="14" cy="13" r="6.5" fill="#9a9a9a" stroke="#3a3a3a" stroke-width="1.4" stroke-linejoin="round"/><circle cx="12.5" cy="11.5" r="3" fill="none" stroke="#444" stroke-width="1"/></g>
<rect x="698.5" y="56" width="2.5" height="33" fill="#dcdcdc"/>
<g transform="translate(712.0,61.0) scale(1.0)"><path d="M0.5,2.5 L2.5,0.5 H10.5 V11 H0.5 Z" fill="#fff" stroke="#3a3a3a" stroke-width="1.4" stroke-linejoin="round"/><path d="M12,2.5 L14,0.5 H22.5 V11 H12 Z" fill="#9a9a9a" stroke="#3a3a3a" stroke-width="1.4" stroke-linejoin="round"/><path d="M0.5,13.5 L2.5,11.5 H10.5 V23 H2.5 L0.5,21 Z" fill="#9a9a9a" stroke="#3a3a3a" stroke-width="1.4" stroke-linejoin="round"/><path d="M12,13.5 L14,11.5 H22.5 V23 H12 Z" fill="#9a9a9a" stroke="#3a3a3a" stroke-width="1.4" stroke-linejoin="round"/></g>
<path d="M748.5,69.5 l6,6 l6,-6" fill="none" stroke="#555" stroke-width="2.2"/>
<g transform="translate(777.0,61.0) scale(1.0)"><path d="M0.5,3.5 L3,0.5 H6 L8.5,3 V13 L11,15 V23 H3 L0.5,20.5 Z" fill="#fff" stroke="#3a3a3a" stroke-width="1.4" stroke-linejoin="round"/><path d="M14,2 L19,0.5 L22.5,3.5 V23 H14 Z" fill="#9a9a9a" stroke="#3a3a3a" stroke-width="1.4" stroke-linejoin="round"/><path d="M7.5,0.5 L13,7 V23 H11" fill="#ccc" stroke="none" opacity="0.6"/></g>
<rect x="811.0" y="56" width="2.5" height="33" fill="#dcdcdc"/>
<g transform="translate(824.0,62.0) scale(1.0)"><circle cx="7.5" cy="11" r="7.5" fill="none" stroke="#3a3a3a" stroke-width="1.4" stroke-linejoin="round"/><circle cx="15.5" cy="11" r="7.5" fill="none" stroke="#3a3a3a" stroke-width="1.4" stroke-linejoin="round"/><path d="M11.5,4.6 A7.5,7.5 0 0 1 11.5,17.4 A7.5,7.5 0 0 1 11.5,4.6 Z" fill="#9a9a9a"/></g>
<g transform="translate(867.0,61.0) scale(1.0)"><path d="M1,3.5 L3.5,0.5 H20 L23,3.5 V23 H4 L1,20 Z" fill="#fff" stroke="#3a3a3a" stroke-width="1.4" stroke-linejoin="round"/><path d="M4,3.5 V23 M4,3.5 H23" fill="none" stroke="#3a3a3a" stroke-width="1.4" stroke-linejoin="round"/><path d="M0,13 C5,17 9,15 13,13 C16,11.5 19,11 23.5,12.5" fill="none" stroke="#bbb" stroke-width="2"/></g>
<g transform="translate(909.0,61.0) scale(1.0)"><path d="M1,13 L3,11 H10 V23 H3 L1,21 Z" fill="#fff" stroke="#3a3a3a" stroke-width="1.4" stroke-linejoin="round"/><path d="M15.5,1.5 L21.5,6.5 L16,12.5 L10.5,7 Z" fill="#9a9a9a" stroke="#3a3a3a" stroke-width="1.4" stroke-linejoin="round"/><path d="M2,9 C2,5 4,2.5 8,2 M7,0 L9.5,2 L7,4" fill="none" stroke="#222" stroke-width="1.7"/><path d="M21.5,14 C21.5,18 19.5,20.5 16,21.5 M16.5,19 L14.5,22 L17.5,23" fill="none" stroke="#222" stroke-width="1.7"/></g>
<path d="M946.5,69.5 l6,6 l6,-6" fill="none" stroke="#555" stroke-width="2.2"/>
<g transform="translate(975.0,61.0) scale(1.0)"><path d="M1,3 L3,0.5 H19 L20.5,2.5 V16 H3 L1,14 Z" fill="#a5a5a5" stroke="#999" stroke-width="1"/><circle cx="15.5" cy="17" r="6.5" fill="#222" stroke="#fff" stroke-width="1.5"/><path d="M12.8,14.3 L18.2,19.7 M18.2,14.3 L12.8,19.7" stroke="#fff" stroke-width="1.8"/></g>
<rect x="1009.0" y="56" width="2.5" height="33" fill="#dcdcdc"/>
<g transform="translate(1021.0,61.0) scale(1.0)"><path d="M1,20 C0,11 6,3 14,2 L19,1 L22,6 C14,7 9,11 6,19 Z" fill="#9a9a9a"/><path d="M10,14 L16,9 M10,9.5 V14 H14.5" fill="none" stroke="#111" stroke-width="1.8"/><path d="M11.5,20 C15,17 18,15 22,14 L23.5,17.5 C19,18.5 16,20.5 13.5,23 Z" fill="#fff" stroke="#3a3a3a" stroke-width="1.4" stroke-linejoin="round"/></g>
<g transform="translate(1064.0,61.0) scale(1.0)"><path d="M0.5,7 C6,9 9,3 15,1 C17.5,3 19,6 20,10 L12,17 C9,13 5,11 3,12 Z" fill="#a5a5a5"/><circle cx="14.5" cy="17" r="6.5" fill="#222" stroke="#fff" stroke-width="1.5"/><path d="M11.8,14.3 L17.2,19.7 M17.2,14.3 L11.8,19.7" stroke="#fff" stroke-width="1.8"/></g>
<g transform="translate(1106.0,61.0) scale(1.0)"><path d="M0.5,15 L6,11 L12,12 L17,9.5 L22,14 V22.5 H5 L0.5,19 Z" fill="#fff" stroke="#3a3a3a" stroke-width="1.4" stroke-linejoin="round"/><path d="M0.5,15 L5,19 V22.5 M5,19 H22" fill="none" stroke="#3a3a3a" stroke-width="1.4" stroke-linejoin="round"/><path d="M6,11 L12,12 L17,9.5 L22,14 H5 Z" fill="#9a9a9a"/><path d="M12.5,13 V5 M9.5,7.5 L12.5,3.5 L15.5,7.5" fill="none" stroke="#111" stroke-width="2.2"/></g>
<g transform="translate(1149.0,61.0) scale(1.0)"><path d="M0.5,15 L6,11.5 H17 L22.5,15.5 V23 H5.5 L0.5,19.5 Z" fill="#fff" stroke="#3a3a3a" stroke-width="1.4" stroke-linejoin="round"/><path d="M0.5,15 L5.5,19.5 V23 M5.5,19.5 H22.5" fill="none" stroke="#3a3a3a" stroke-width="1.4" stroke-linejoin="round"/><path d="M4,3 C8,4 12,0 17,0.5 L22,6.5 C17,6 13,10 8,9 Z" fill="#9a9a9a"/></g>
<rect x="1184.0" y="56" width="2.5" height="33" fill="#dcdcdc"/>
<g transform="translate(1199.0,61.0) scale(1.0)"><path d="M0.5,3 L3,0.5 H10 V18 L8,23 H1 Z" fill="#fff" stroke="#3a3a3a" stroke-width="1.4" stroke-linejoin="round"/><path d="M10,0.5 L12,18 L8,23 M1,3 H10" fill="none" stroke="#3a3a3a" stroke-width="1.4" stroke-linejoin="round"/><path d="M13,0 L19,10 L13,23 L12,18 Z" fill="#9a9a9a"/></g>
<path d="M1232.5,69.5 l6,6 l6,-6" fill="none" stroke="#555" stroke-width="2.2"/>
<g transform="translate(1263.0,61.0) scale(1.0)"><path d="M0.5,0.5 L22,3.5 V23 L0.5,20 Z" fill="#d4d4d4" stroke="#3a3a3a" stroke-width="1.4" stroke-linejoin="round"/><path d="M11,2 V10.5 H22" fill="none" stroke="#3a3a3a" stroke-width="1.4" stroke-linejoin="round"/></g>
<g transform="translate(1304.0,61.0) scale(1.0)"><g fill="none" stroke="#222" stroke-width="1.8"><path d="M8,4 C12,1 21,1 21,3.5 C21,6 12,6 3.5,7 C0,8 1,11 6,11.5 C12,12 21,11 21,13 C21,15.5 9,16 3.5,16.5 C0,17 1,20 6,20.5 C12,21 21,20 21,18.5 C21,17 13,18 8,19.5 L3,23"/></g></g>
<path d="M1340.5,69.5 l6,6 l6,-6" fill="none" stroke="#555" stroke-width="2.2"/>
<g transform="translate(1369.0,61.0) scale(1.0)"><circle cx="11.5" cy="11.5" r="11" fill="#fff" stroke="#333" stroke-width="1.5"/><circle cx="11.5" cy="11.5" r="8" fill="#e8e8e8" stroke="#333" stroke-width="1.5"/><path d="M11.5,3.5 V11.5 H19.5 A8,8 0 0 0 11.5,3.5 Z" fill="#fff"/><path d="M11.5,3.5 V11.5 H19.5" fill="none" stroke="#333" stroke-width="1.5"/></g>
<g transform="translate(1412.0,61.0) scale(1.0)"><path d="M1,13 L5,9 H12 V2.5 L16,0.5 L22.5,5 V23 H5 L1,19 Z" fill="#fff" stroke="#3a3a3a" stroke-width="1.4" stroke-linejoin="round"/><path d="M1,13 L5,16.5 V23 M5,16.5 H16.5 V5 H22.5 M12,9 L16.5,5" fill="none" stroke="#3a3a3a" stroke-width="1.4" stroke-linejoin="round"/><path d="M0,2 C5,0 9,2 10,6 M7.5,6 L10.5,8.5 L12.5,5" fill="none" stroke="#111" stroke-width="2"/></g>
<text x="1465.5" y="80" font-family="Liberation Serif" font-style="italic" font-weight="700" font-size="21" fill="#2a2a2a" text-anchor="middle">(x)</text>
<g transform="translate(1495.0,61.0) scale(1.0)"><g fill="#fff" stroke="#333" stroke-width="1.1" stroke-linejoin="round"><path d="M8,4 L12,1 L16,4 V9.5 L12,12 L8,9.5 Z"/><path d="M2,14 L6,11 L10,14 V19.5 L6,22.5 L2,19.5 Z"/><path d="M14,14 L18,11 L22,14 V19.5 L18,22.5 L14,19.5 Z"/><path d="M8,4 L12,6.5 L16,4 M12,6.5 V12 M2,14 L6,16.5 L10,14 M6,16.5 V22.5 M14,14 L18,16.5 L22,14 M18,16.5 V22.5"/></g></g>
<rect x="1532.0" y="56" width="2.5" height="33" fill="#dcdcdc"/>
<g transform="translate(1544.0,61.0) scale(1.0)"><path d="M1,3 L4.5,0.5 H8 V14.5 L12,18 V0.5 H16 L21,5 V23 H5 L1,19.5 Z" fill="#fff" stroke="#3a3a3a" stroke-width="1.4" stroke-linejoin="round"/><path d="M8,14.5 H20 L22,17 M4.5,0.5 V19.5 L5,23" fill="none" stroke="#3a3a3a" stroke-width="1.4" stroke-linejoin="round"/><path d="M12,18 L16,14.5 H21 V17 H13 Z" fill="#999"/></g>
<g transform="translate(1587.0,61.0) scale(1.0)"><path d="M0.5,18 L9,13.5 L14,0.5 L19.5,4.5 V21.5 L16,23 H5 Z" fill="#fff" stroke="#3a3a3a" stroke-width="1.4" stroke-linejoin="round"/><path d="M14,0.5 V17 L19.5,21.5 M9,13.5 H14 M0.5,18 H14" fill="none" stroke="#3a3a3a" stroke-width="1.4" stroke-linejoin="round"/><path d="M14,2 L19,5 V20 L14,17 Z" fill="#999"/></g>
<g transform="translate(1629.0,61.0) scale(1.0)"><path d="M3,4.5 H12 L18.5,10.5 C21,12.5 21,17 18.5,18.5 H7 L0.5,12 H8.5 Z" fill="#999" stroke="#3a3a3a" stroke-width="1.4" stroke-linejoin="round"/><path d="M0.5,12 H8.5 L15,18.5 H7 Z" fill="#eee" stroke="none"/><path d="M0.5,12 L7,18.5 H18.5 M8.5,12 L15,18.5 M8.5,12 H16 C18,12 18.5,14.5 17,15" fill="none" stroke="#3a3a3a" stroke-width="1.4" stroke-linejoin="round"/></g>
<g transform="translate(1673.0,61.0) scale(1.0)"><path d="M1,13 H8 V9 C3,9 2,7 2,4 C2,2 3.5,0.5 6,0.5 H20 V23 H1 Z" fill="#999" stroke="#3a3a3a" stroke-width="1.4" stroke-linejoin="round"/><path d="M12,1.5 H19 V22 H8 V17 H12 Z" fill="#eee" stroke="none"/><path d="M12,0.5 V14 H8 V9 M8,17 V23" fill="none" stroke="#3a3a3a" stroke-width="1.4" stroke-linejoin="round"/></g>
<g transform="translate(1715.0,61.0) scale(1.0)"><path d="M0.5,3 L5,0.5 L11,6 L17,0.5 L21.5,3 V16 L11,23 L0.5,16 Z" fill="#fff" stroke="#3a3a3a" stroke-width="1.4" stroke-linejoin="round"/><path d="M5,0.5 V15 L11,21 L17,15 V0.5 M11,6 V21" fill="none" stroke="#3a3a3a" stroke-width="1.4" stroke-linejoin="round"/><path d="M9.5,8 L11,9 V20 L9.5,19 Z" fill="#888"/></g>
<g transform="translate(1757.0,61.0) scale(1.0)"><path d="M1,23 V14.5 H5 C5,11 6,9.5 8.5,9 C11,8.5 11.5,6 9.5,4.5 L11,2 H21 V16 H12 V23" fill="#eee"/><path d="M1,23 V14.5 H5 C5,11 7,9.5 9,9 C11.5,8.5 12,5 9.5,3 L11,1.5 H21" fill="none" stroke="#3a3a3a" stroke-width="1.4" stroke-linejoin="round"/></g>
<g transform="translate(1799.0,61.0) scale(1.0)"><path d="M0.5,0.5 H21 V23 H18 V18 H11 C6,18 4,14 4,11 C4,8 6,4.5 11,4.5 H18 V0.5 Z" fill="#e8e8e8" stroke="none"/><path d="M0.5,0.5 H21 V23 M16.5,23 V18 H11 C7,18 5,15 5,11 C5,7 7,4.5 11,4.5 H21" fill="none" stroke="#3a3a3a" stroke-width="1.4" stroke-linejoin="round"/></g>
<g transform="translate(1842.0,61.0) scale(1.0)"><path d="M0.5,3 L4,0.5 H10 L15,14 L20,3 H21.5 V21.5 L19,23 H4 L0.5,19.5 Z" fill="#fff" stroke="#3a3a3a" stroke-width="1.4" stroke-linejoin="round"/><path d="M4,0.5 V19.5 L4,23 M4,19.5 H21" fill="none" stroke="#3a3a3a" stroke-width="1.4" stroke-linejoin="round"/><path d="M4,4 H14 V18 H5 Z" fill="#bbb"/><path d="M11,8 L14.5,12 L22,1.5" fill="none" stroke="#111" stroke-width="2.6"/></g>
<rect x="1876.5" y="56" width="1.8" height="33" fill="#dcdcdc"/>
<rect x="1889" y="61" width="23" height="23" rx="3" fill="none" stroke="#2a2a2a" stroke-width="1.8" stroke-dasharray="5,3.5"/><path d="M1900.5,67 V78 M1895,72.5 H1906" stroke="#2a2a2a" stroke-width="2.4"/>
<path d="M171,108.5 V125 H193 V109 H181 L179,106.5 H171 Z" fill="none" stroke="#2a2a2a" stroke-width="1.6"/><rect x="170" y="114" width="6" height="10" fill="#fff"/><path d="M176.5,110.5 V122 M171,116 H182" stroke="#1c4fb0" stroke-width="2.4"/>
<circle cx="218.5" cy="117" r="9" fill="none" stroke="#222" stroke-width="2.2"/><path d="M215,105.5 H222 M218.5,105.5 V108" stroke="#222" stroke-width="2"/><path d="M226,108 L228,110" stroke="#222" stroke-width="2"/><path d="M216.5,114.5 L220.5,119" stroke="#222" stroke-width="1.8"/>
<path d="M18,145 H38 L30,155 V164 L26,161 V155 Z" fill="none" stroke="#333" stroke-width="1.5" stroke-linejoin="round"/>
<path d="M7,190 L13,196 L19,190" fill="none" stroke="#444" stroke-width="2.4"/>
<path d="M7,962 L13,968 L19,962" fill="none" stroke="#444" stroke-width="2.4"/>
<rect x="12" y="210" width="1" height="130" fill="#c8c8c8"/><rect x="6" y="339" width="13" height="1" fill="#c8c8c8"/>
<rect x="12" y="983" width="1" height="32" fill="#c8c8c8"/><rect x="6" y="1014.5" width="13" height="1" fill="#c8c8c8"/>
<circle cx="41.5" cy="226.5" r="4" fill="none" stroke="#555" stroke-width="1.3"/><circle cx="41.5" cy="226.5" r="1.6" fill="#333"/>
<g transform="translate(33.0,250.5) scale(1.0)"><path d="M0.5,0.5 L17,3 V17.5 L0.5,15 Z" fill="#eee" stroke="#c4c4c4" stroke-width="1.2"/><path d="M8.5,2 V9.5 H17" fill="none" stroke="#c4c4c4" stroke-width="1.2"/></g>
<g transform="translate(33.0,282.9) scale(1.0)"><path d="M0.5,0.5 L17,3 V17.5 L0.5,15 Z" fill="#eee" stroke="#c4c4c4" stroke-width="1.2"/><path d="M8.5,2 V9.5 H17" fill="none" stroke="#c4c4c4" stroke-width="1.2"/></g>
<g transform="translate(33.0,315.4) scale(1.0)"><path d="M0.5,0.5 L17,3 V17.5 L0.5,15 Z" fill="#eee" stroke="#c4c4c4" stroke-width="1.2"/><path d="M8.5,2 V9.5 H17" fill="none" stroke="#c4c4c4" stroke-width="1.2"/></g>
<g transform="translate(7.0,346.4) scale(1.0)"><path d="M2.5,17 L4.5,12 L15,1.5 L18,4.5 L7.5,15 Z" fill="none" stroke="#999" stroke-width="1.1" stroke-linejoin="round"/><rect x="0" y="18.5" width="19" height="1.3" fill="#8ab0e8"/></g>
<g transform="translate(7.0,379.4) scale(1.0)"><path d="M0.5,3 L2.5,0.5 H17 L18.5,2 V18.5 H2.5 L0.5,16.5 Z" fill="#fff" stroke="#444" stroke-width="1.1"/><path d="M2.5,0.5 V18.5 M2.5,3 H18.5" fill="none" stroke="#444" stroke-width="1"/><path d="M6,8 L7.5,6 H18 V18 H6 Z" fill="#9c9c9c" stroke="#444" stroke-width="1"/></g>
<g transform="translate(7.0,411.8) scale(1.0)"><path d="M0.5,3 L2.5,0.5 H17 L18.5,2 V18.5 H2.5 L0.5,16.5 Z" fill="#fff" stroke="#444" stroke-width="1.1"/><path d="M2.5,0.5 V18.5 M2.5,3 H18.5" fill="none" stroke="#444" stroke-width="1"/><path d="M6,8 L7.5,6 H18 V18 H6 Z" fill="#9c9c9c" stroke="#444" stroke-width="1"/></g>
<g transform="translate(7.0,444.3) scale(1.0)"><path d="M0.5,7 C0.5,3 4,0.5 8,0.5 H17 L18.5,2 V18.5 H2.5 L0.5,16.5 Z" fill="#fff" stroke="#444" stroke-width="1.1"/><path d="M1,6.5 C1.5,3.5 5,1 8.5,1 L10.5,3 C7,3 4,5.5 3,8.5 Z" fill="#999"/><path d="M3,8.5 V18.5 M10.5,3 H18.5" fill="none" stroke="#444" stroke-width="1"/></g>
<g transform="translate(7.0,476.8) scale(1.0)"><path d="M0.5,3 L2.5,0.5 H17 L18.5,2 V18.5 H2.5 L0.5,16.5 Z" fill="#fff" stroke="#444" stroke-width="1.1"/><path d="M2.5,0.5 V18.5 M2.5,3 H18.5" fill="none" stroke="#444" stroke-width="1"/><path d="M6,8 L7.5,6 H18 V18 H6 Z" fill="#9c9c9c" stroke="#444" stroke-width="1"/></g>
<g transform="translate(7.0,509.3) scale(1.0)"><path d="M0.5,3 L2.5,0.5 H17 L18.5,2 V18.5 H2.5 L0.5,16.5 Z" fill="#fff" stroke="#444" stroke-width="1.1"/><path d="M2.5,0.5 V18.5 M2.5,3 H18.5" fill="none" stroke="#444" stroke-width="1"/><path d="M6,8 L7.5,6 H18 V18 H6 Z" fill="#9c9c9c" stroke="#444" stroke-width="1"/></g>
<g transform="translate(7.0,541.7) scale(1.0)"><path d="M0.5,3 L2.5,0.5 H17 L18.5,2 V18.5 H2.5 L0.5,16.5 Z" fill="#fff" stroke="#444" stroke-width="1.1"/><path d="M2.5,0.5 V18.5 M2.5,3 H18.5" fill="none" stroke="#444" stroke-width="1"/><path d="M6,8 L7.5,6 H18 V18 H6 Z" fill="#9c9c9c" stroke="#444" stroke-width="1"/></g>
<g transform="translate(7.0,573.7) scale(1.0)"><path d="M2.5,17 L4.5,12 L15,1.5 L18,4.5 L7.5,15 Z" fill="none" stroke="#999" stroke-width="1.1" stroke-linejoin="round"/><rect x="0" y="18.5" width="19" height="1.3" fill="#8ab0e8"/></g>
<g transform="translate(7.0,606.7) scale(1.0)"><path d="M0.5,3 L2.5,0.5 H17 L18.5,2 V18.5 H2.5 L0.5,16.5 Z" fill="#fff" stroke="#444" stroke-width="1.1"/><path d="M2.5,0.5 V18.5 M2.5,3 H18.5" fill="none" stroke="#444" stroke-width="1"/><path d="M6,8 L7.5,6 H18 V18 H6 Z" fill="#9c9c9c" stroke="#444" stroke-width="1"/></g>
<g transform="translate(7.0,638.7) scale(1.0)"><path d="M2.5,17 L4.5,12 L15,1.5 L18,4.5 L7.5,15 Z" fill="none" stroke="#999" stroke-width="1.1" stroke-linejoin="round"/><rect x="0" y="18.5" width="19" height="1.3" fill="#8ab0e8"/></g>
<g transform="translate(7.0,671.6) scale(1.0)"><path d="M0.5,3 L2.5,0.5 H17 L18.5,2 V18.5 H2.5 L0.5,16.5 Z" fill="#fff" stroke="#444" stroke-width="1.1"/><path d="M2.5,0.5 V18.5 M2.5,3 H18.5" fill="none" stroke="#444" stroke-width="1"/><path d="M6,8 L7.5,6 H18 V18 H6 Z" fill="#9c9c9c" stroke="#444" stroke-width="1"/></g>
<g transform="translate(7.0,704.1) scale(1.0)"><path d="M0.5,3 L2.5,0.5 H17 L18.5,2 V18.5 H2.5 L0.5,16.5 Z" fill="#fff" stroke="#444" stroke-width="1.1"/><path d="M2.5,0.5 V18.5 M2.5,3 H18.5" fill="none" stroke="#444" stroke-width="1"/><path d="M6,8 L7.5,6 H18 V18 H6 Z" fill="#9c9c9c" stroke="#444" stroke-width="1"/></g>
<g transform="translate(7.0,736.6) scale(1.0)"><path d="M0.5,7 C0.5,3 4,0.5 8,0.5 H17 L18.5,2 V18.5 H2.5 L0.5,16.5 Z" fill="#fff" stroke="#444" stroke-width="1.1"/><path d="M1,6.5 C1.5,3.5 5,1 8.5,1 L10.5,3 C7,3 4,5.5 3,8.5 Z" fill="#999"/><path d="M3,8.5 V18.5 M10.5,3 H18.5" fill="none" stroke="#444" stroke-width="1"/></g>
<g transform="translate(7.0,768.6) scale(1.0)"><path d="M2.5,17 L4.5,12 L15,1.5 L18,4.5 L7.5,15 Z" fill="none" stroke="#999" stroke-width="1.1" stroke-linejoin="round"/><rect x="0" y="18.5" width="19" height="1.3" fill="#8ab0e8"/></g>
<g transform="translate(7.0,801.0) scale(1.0)"><path d="M2.5,17 L4.5,12 L15,1.5 L18,4.5 L7.5,15 Z" fill="none" stroke="#999" stroke-width="1.1" stroke-linejoin="round"/><rect x="0" y="18.5" width="19" height="1.3" fill="#8ab0e8"/></g>
<g transform="translate(7.0,834.0) scale(1.0)"><path d="M0.5,3 L2.5,0.5 H17 L18.5,2 V18.5 H2.5 L0.5,16.5 Z" fill="#fff" stroke="#444" stroke-width="1.1"/><path d="M2.5,0.5 V18.5 M2.5,3 H18.5" fill="none" stroke="#444" stroke-width="1"/><path d="M6,8 L7.5,6 H18 V18 H6 Z" fill="#9c9c9c" stroke="#444" stroke-width="1"/></g>
<g transform="translate(7.0,866.5) scale(1.0)"><path d="M0.5,7 C0.5,3 4,0.5 8,0.5 H17 L18.5,2 V18.5 H2.5 L0.5,16.5 Z" fill="#fff" stroke="#444" stroke-width="1.1"/><path d="M1,6.5 C1.5,3.5 5,1 8.5,1 L10.5,3 C7,3 4,5.5 3,8.5 Z" fill="#999"/><path d="M3,8.5 V18.5 M10.5,3 H18.5" fill="none" stroke="#444" stroke-width="1"/></g>
<g stroke="#333" stroke-width="1.4" fill="none"><path d="M268,730 L270.5,733 L273,730"/><path d="M270.5,733 V748"/><path d="M275,730.5 H288 M275,735.5 H288 M275,741 H288 M275,746.5 H288"/></g>
<g fill="none" stroke="#666" stroke-width="2.2"><path d="M11,1412.5 H31"/><circle cx="18.5" cy="1421" r="5"/><path d="M22,1424.5 L26,1429"/><path d="M27,1417.5 H32 M27,1421.5 H32 M27,1425.5 H32"/></g>
<path d="M67.5,1412 V1430 M58.5,1421 H76.5" stroke="#666" stroke-width="3.2"/>
<g transform="translate(111.0,1410.0) scale(1.0)"><g fill="#fff" stroke="#444" stroke-width="1.2" stroke-linejoin="round"><path d="M1,6 L3,4.5 H9 V20 H3 L1,18.5 Z"/><path d="M11,2.5 L13,0.5 H19.5 L21.5,2.5 V20 H11 Z"/><path d="M3,4.5 V20 M1,6 H9 M13,0.5 V20 M11,2.5 H21.5"/></g></g>
<g transform="translate(257.0,1410.0) scale(1.0)"><g fill="#fff" stroke="#444" stroke-width="1.2" stroke-linejoin="round"><path d="M1,6 L3,4.5 H9 V20 H3 L1,18.5 Z"/><path d="M11,2.5 L13,0.5 H19.5 L21.5,2.5 V20 H11 Z"/><path d="M3,4.5 V20 M1,6 H9 M13,0.5 V20 M11,2.5 H21.5"/></g></g>
<g transform="translate(478.0,1410.0) scale(1.0)"><g fill="#fff" stroke="#444" stroke-width="1.2" stroke-linejoin="round"><path d="M1,6 L3,4.5 H9 V20 H3 L1,18.5 Z"/><path d="M11,2.5 L13,0.5 H19.5 L21.5,2.5 V20 H11 Z"/><path d="M3,4.5 V20 M1,6 H9 M13,0.5 V20 M11,2.5 H21.5"/></g></g>
<g transform="translate(629.0,1410.0) scale(1.0)"><g fill="#fff" stroke="#444" stroke-width="1.2" stroke-linejoin="round"><path d="M1,6 L3,4.5 H9 V20 H3 L1,18.5 Z"/><path d="M11,2.5 L13,0.5 H19.5 L21.5,2.5 V20 H11 Z"/><path d="M3,4.5 V20 M1,6 H9 M13,0.5 V20 M11,2.5 H21.5"/></g></g>
<g transform="translate(839.0,1410.0) scale(1.0)"><g fill="#fff" stroke="#444" stroke-width="1.2" stroke-linejoin="round"><path d="M1,6 L3,4.5 H9 V20 H3 L1,18.5 Z"/><path d="M11,2.5 L13,0.5 H19.5 L21.5,2.5 V20 H11 Z"/><path d="M3,4.5 V20 M1,6 H9 M13,0.5 V20 M11,2.5 H21.5"/></g></g>
<g transform="translate(1078.0,1410.0) scale(1.0)"><g fill="#fff" stroke="#444" stroke-width="1.2" stroke-linejoin="round"><path d="M1,6 L3,4.5 H9 V20 H3 L1,18.5 Z"/><path d="M11,2.5 L13,0.5 H19.5 L21.5,2.5 V20 H11 Z"/><path d="M3,4.5 V20 M1,6 H9 M13,0.5 V20 M11,2.5 H21.5"/></g></g>
<g transform="translate(1330.0,1410.0) scale(1.0)"><g stroke="#444" stroke-width="1.2" stroke-linejoin="round"><path d="M1,3 L3.5,0.5 H18 L21,3.5 V20 H4 L1,17 Z" fill="#fff"/><path d="M4,3.5 V20 M4,3.5 H21" fill="none"/><path d="M2,2 H15 V15 H2 Z" fill="#9a9a9a" stroke="#444"/></g></g>
<g transform="translate(1530.0,1410.0) scale(1.0)"><g stroke="#444" stroke-width="1.2" stroke-linejoin="round"><path d="M1,3 L3.5,0.5 H18 L21,3.5 V20 H4 L1,17 Z" fill="#fff"/><path d="M4,3.5 V20 M4,3.5 H21" fill="none"/><path d="M2,2 H15 V15 H2 Z" fill="#9a9a9a" stroke="#444"/></g></g>
<g transform="translate(1729.0,1410.0) scale(1.0)"><g fill="#fff" stroke="#444" stroke-width="1.2" stroke-linejoin="round"><path d="M1,6 L3,4.5 H9 V20 H3 L1,18.5 Z"/><path d="M11,2.5 L13,0.5 H19.5 L21.5,2.5 V20 H11 Z"/><path d="M3,4.5 V20 M1,6 H9 M13,0.5 V20 M11,2.5 H21.5"/></g></g>
<g transform="translate(1869.0,1410.0) scale(1.0)"><g fill="#fff" stroke="#444" stroke-width="1.2" stroke-linejoin="round"><path d="M1,6 L3,4.5 H9 V20 H3 L1,18.5 Z"/><path d="M11,2.5 L13,0.5 H19.5 L21.5,2.5 V20 H11 Z"/><path d="M3,4.5 V20 M1,6 H9 M13,0.5 V20 M11,2.5 H21.5"/></g></g>
<g transform="translate(2052.0,1410.0) scale(1.0)"><g fill="#fff" stroke="#444" stroke-width="1.2" stroke-linejoin="round"><path d="M1,6 L3,4.5 H9 V20 H3 L1,18.5 Z"/><path d="M11,2.5 L13,0.5 H19.5 L21.5,2.5 V20 H11 Z"/><path d="M3,4.5 V20 M1,6 H9 M13,0.5 V20 M11,2.5 H21.5"/></g></g>
<g transform="translate(2226.0,1410.0) scale(1.0)"><g fill="#fff" stroke="#444" stroke-width="1.2" stroke-linejoin="round"><path d="M1,6 L3,4.5 H9 V20 H3 L1,18.5 Z"/><path d="M11,2.5 L13,0.5 H19.5 L21.5,2.5 V20 H11 Z"/><path d="M3,4.5 V20 M1,6 H9 M13,0.5 V20 M11,2.5 H21.5"/></g></g>
<g transform="translate(2365.0,1410.0) scale(1.0)"><g fill="#fff" stroke="#444" stroke-width="1.2" stroke-linejoin="round"><path d="M1,6 L3,4.5 H9 V20 H3 L1,18.5 Z"/><path d="M11,2.5 L13,0.5 H19.5 L21.5,2.5 V20 H11 Z"/><path d="M3,4.5 V20 M1,6 H9 M13,0.5 V20 M11,2.5 H21.5"/></g></g>
<g fill="none" stroke="#222" stroke-width="1.5" stroke-linejoin="round"><path d="M2482,1386 L2489,1385.5 M2482,1386 V1391.5 H2497 C2500,1391.5 2501.5,1389.5 2501.5,1386 V1382"/><ellipse cx="2494.5" cy="1382" rx="6.5" ry="4.2"/><ellipse cx="2494.5" cy="1381.5" rx="3.2" ry="1.5" stroke-width="1.3"/></g><path d="M2484,1390 V1388.5 M2487,1390 V1388 M2490,1390 V1388.5 M2493,1390 V1388 M2496,1390 V1388.5" stroke="#555" stroke-width="0.8"/>
<g stroke="#222" fill="none"><path d="M2529,1376.5 H2543 M2536,1376.5 V1392 M2527.5,1392 H2544.5" stroke-width="1.6"/><path d="M2529.5,1377 L2527.5,1387 M2529.5,1377 L2531.5,1387 M2542.5,1377 L2540.5,1387 M2542.5,1377 L2544.5,1387" stroke-width="1"/><path d="M2527,1387 H2532 M2540,1387 H2545" stroke-width="1.8"/></g>
<rect x="2520.5" y="676.5" width="45" height="124" fill="#fff" stroke="#c8c8c8" stroke-width="1"/><path d="M2520.5,717.5 H2560 M2520.5,758.5 H2560" stroke="#c8c8c8" stroke-width="1"/>
<circle cx="2540.5" cy="692" r="6.5" fill="#999" stroke="#222" stroke-width="1.1"/><circle cx="2546" cy="700" r="6.5" fill="#fff" stroke="#222" stroke-width="1.1"/><circle cx="2535.5" cy="701" r="6.5" fill="#1c4fb0" stroke="#222" stroke-width="1.1"/>
<path d="M2533,734 L2542,730 L2551,734 V744 L2542,749 L2533,744 Z M2533,734 L2542,739 L2551,734 M2542,739 V749" fill="#fff" stroke="#222" stroke-width="1.1"/><rect x="2528" y="726" width="12" height="9" fill="#5a9ae0" stroke="#1c4fb0" stroke-width="1"/><path d="M2528,730.5 H2540 M2532,726 V735 M2536,726 V735" stroke="#cde" stroke-width="0.8"/>
<path d="M2534,776 L2542,772 L2550,776 V784 L2542,788 L2534,784 Z M2534,776 L2542,780 L2550,776 M2542,780 V788" fill="#fff" stroke="#222" stroke-width="1"/><rect x="2528" y="768" width="12" height="9" fill="#777" stroke="#222" stroke-width="1"/><path d="M2531,778 C2528,779 2529,784 2531,788 M2550,770 C2553,772 2553,784 2551,789" fill="none" stroke="#333" stroke-width="1"/>
<g>
<path d="M2441,126 L2447.5,114.5 L2454,126 Z M2441,289 L2447.5,300 L2454,289 Z M2366,200 L2355,207 L2366,214 Z M2529,200 L2540,207 L2529,214 Z" fill="#dfe6ee"/>
<path d="M2420,126 C2403,131 2392,140 2384,150" fill="none" stroke="#dfe6ee" stroke-width="5"/><path d="M2380,145 L2381,156 L2393,154 Z" fill="#dfe6ee"/>
<path d="M2474,126 C2491,131 2502,140 2510,150" fill="none" stroke="#dfe6ee" stroke-width="5"/><path d="M2514,145 L2513,156 L2501,154 Z" fill="#dfe6ee"/>
<path d="M2447,154 L2494,180 V235 L2447,262 L2400,235 V180 Z" fill="#dfe6ee" stroke="#dfe6ee" stroke-width="7" stroke-linejoin="round"/>
<path d="M2447,160 L2476,176 C2480,178 2480,181 2476,183 L2450,197 C2448,198 2446,198 2444,197 L2418,183 C2414,181 2414,178 2418,176 Z" fill="#fff"/>
<path d="M2403,195 C2403,191 2406,190 2409,192 L2436,207 C2439,209 2441,211 2441,214 V246 C2441,250 2438,251 2435,249 L2409,235 C2406,233 2403,231 2403,228 Z" fill="#fff"/>
<path d="M2491,195 C2491,191 2488,190 2485,192 L2458,207 C2455,209 2453,211 2453,214 V246 C2453,250 2456,251 2459,249 L2485,235 C2488,233 2491,231 2491,228 Z" fill="#fff"/>
<circle cx="2447" cy="207" r="8" fill="#fff"/><ellipse cx="2406" cy="183" rx="2.5" ry="5" fill="#fff" transform="rotate(30 2406 183)"/><ellipse cx="2488" cy="183" rx="2.5" ry="5" fill="#fff" transform="rotate(-30 2488 183)"/><ellipse cx="2447" cy="256" rx="8" ry="2.5" fill="#fff"/>
<text font-family="Liberation Sans" font-style="italic" font-size="11" fill="#777" text-anchor="middle" transform="translate(2447,180) rotate(30) skewX(-20)">Top</text>
<text font-family="Liberation Sans" font-size="12" fill="#666" text-anchor="middle" transform="translate(2421,226) rotate(30)">Front</text>
<text font-family="Liberation Sans" font-size="12" fill="#666" text-anchor="middle" transform="translate(2474,226) rotate(-30)">Right</text>
<path d="M2393.5,179 V239" stroke="#5a5ae8" stroke-width="2"/><text x="2393" y="175" font-family="Liberation Sans" font-size="14" fill="#4646e0" text-anchor="middle" font-weight="700">Z</text>
<path d="M2393.5,239 L2444,265" stroke="#e03838" stroke-width="1.8"/><text x="2454" y="278" font-family="Liberation Sans" font-size="14" fill="#e03030" text-anchor="middle">X</text>
<path d="M2393.5,239 L2445,209" stroke="#6cc86c" stroke-width="1.2"/><path d="M2393.5,239 L2405,232" stroke="#3a3" stroke-width="2.2"/><text x="2454" y="205" font-family="Liberation Sans" font-size="12" fill="#8fd08f" text-anchor="middle">Y</text>
</g>
<path d="M2492,283 L2503,278.5 L2514,283 V296 L2503,301 L2492,296 Z" fill="#ccc" stroke="#222" stroke-width="1.2"/><path d="M2492,283 L2503,287.5 L2514,283 L2503,278.5 Z" fill="#fff" stroke="#222" stroke-width="1.2"/><path d="M2503,287.5 V301" stroke="#222" stroke-width="1.2"/><path d="M2492.5,283.5 L2503,288 V300.5 L2492.5,296 Z" fill="#999"/><path d="M2525,288 h10 l-5,5 z" fill="#333"/></svg>
</body></html>
